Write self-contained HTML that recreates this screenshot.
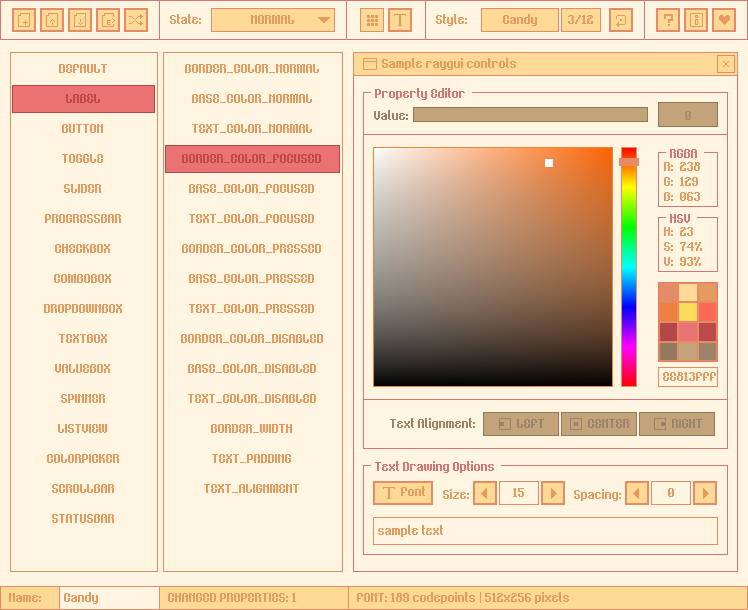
<!DOCTYPE html>
<html><head><meta charset="utf-8"><style>
html,body{margin:0;padding:0;}
body{width:748px;height:610px;background:#fff5e1;position:relative;overflow:hidden;}
.r{position:absolute;box-sizing:border-box;}
.t{position:absolute;white-space:pre;font:bold 13px/13px "Liberation Sans",sans-serif;}
</style></head><body>
<div class="r" style="left:0px;top:0px;width:748px;height:40px;background:#fff5e1;box-shadow:inset 0 0 0 1px #d77575;"></div>
<div class="r" style="left:159px;top:0px;width:1px;height:40px;background:#d77575;"></div>
<div class="r" style="left:346px;top:0px;width:1px;height:40px;background:#d77575;"></div>
<div class="r" style="left:425px;top:0px;width:1px;height:40px;background:#d77575;"></div>
<div class="r" style="left:644px;top:0px;width:1px;height:40px;background:#d77575;"></div>
<div class="r" style="left:12px;top:8px;width:24px;height:24px;background:#feda96;box-shadow:inset 0 0 0 2px #e58b68;"></div>
<div class="r" style="left:40px;top:8px;width:24px;height:24px;background:#feda96;box-shadow:inset 0 0 0 2px #e58b68;"></div>
<div class="r" style="left:68px;top:8px;width:24px;height:24px;background:#feda96;box-shadow:inset 0 0 0 2px #e58b68;"></div>
<div class="r" style="left:96px;top:8px;width:24px;height:24px;background:#feda96;box-shadow:inset 0 0 0 2px #e58b68;"></div>
<div class="r" style="left:124px;top:8px;width:24px;height:24px;background:#feda96;box-shadow:inset 0 0 0 2px #e58b68;"></div>
<svg class="r" style="left:16px;top:12px" width="16" height="16" viewBox="0 0 16 16" shape-rendering="crispEdges"><rect x="2" y="3" width="1" height="1" fill="#e59b5f"/><rect x="2" y="4" width="1" height="1" fill="#e59b5f"/><rect x="2" y="5" width="1" height="1" fill="#e59b5f"/><rect x="2" y="6" width="1" height="1" fill="#e59b5f"/><rect x="2" y="7" width="1" height="1" fill="#e59b5f"/><rect x="2" y="8" width="1" height="1" fill="#e59b5f"/><rect x="2" y="9" width="1" height="1" fill="#e59b5f"/><rect x="2" y="10" width="1" height="1" fill="#e59b5f"/><rect x="2" y="11" width="1" height="1" fill="#e59b5f"/><rect x="2" y="12" width="1" height="1" fill="#e59b5f"/><rect x="2" y="13" width="1" height="1" fill="#e59b5f"/><rect x="2" y="14" width="1" height="1" fill="#e59b5f"/><rect x="3" y="3" width="1" height="1" fill="#e59b5f"/><rect x="3" y="14" width="1" height="1" fill="#e59b5f"/><rect x="4" y="1" width="1" height="1" fill="#e59b5f"/><rect x="4" y="2" width="1" height="1" fill="#e59b5f"/><rect x="4" y="3" width="1" height="1" fill="#e59b5f"/><rect x="4" y="14" width="1" height="1" fill="#e59b5f"/><rect x="5" y="1" width="1" height="1" fill="#e59b5f"/><rect x="5" y="14" width="1" height="1" fill="#e59b5f"/><rect x="6" y="1" width="1" height="1" fill="#e59b5f"/><rect x="6" y="14" width="1" height="1" fill="#e59b5f"/><rect x="7" y="1" width="1" height="1" fill="#e59b5f"/><rect x="7" y="10" width="1" height="1" fill="#e59b5f"/><rect x="7" y="14" width="1" height="1" fill="#e59b5f"/><rect x="8" y="1" width="1" height="1" fill="#e59b5f"/><rect x="8" y="10" width="1" height="1" fill="#e59b5f"/><rect x="8" y="14" width="1" height="1" fill="#e59b5f"/><rect x="9" y="1" width="1" height="1" fill="#e59b5f"/><rect x="9" y="8" width="1" height="1" fill="#e59b5f"/><rect x="9" y="9" width="1" height="1" fill="#e59b5f"/><rect x="9" y="10" width="1" height="1" fill="#e59b5f"/><rect x="9" y="11" width="1" height="1" fill="#e59b5f"/><rect x="9" y="12" width="1" height="1" fill="#e59b5f"/><rect x="9" y="14" width="1" height="1" fill="#e59b5f"/><rect x="10" y="1" width="1" height="1" fill="#e59b5f"/><rect x="10" y="10" width="1" height="1" fill="#e59b5f"/><rect x="10" y="14" width="1" height="1" fill="#e59b5f"/><rect x="11" y="1" width="1" height="1" fill="#e59b5f"/><rect x="11" y="10" width="1" height="1" fill="#e59b5f"/><rect x="11" y="14" width="1" height="1" fill="#e59b5f"/><rect x="12" y="1" width="1" height="1" fill="#e59b5f"/><rect x="12" y="14" width="1" height="1" fill="#e59b5f"/><rect x="13" y="1" width="1" height="1" fill="#e59b5f"/><rect x="13" y="2" width="1" height="1" fill="#e59b5f"/><rect x="13" y="3" width="1" height="1" fill="#e59b5f"/><rect x="13" y="4" width="1" height="1" fill="#e59b5f"/><rect x="13" y="5" width="1" height="1" fill="#e59b5f"/><rect x="13" y="6" width="1" height="1" fill="#e59b5f"/><rect x="13" y="7" width="1" height="1" fill="#e59b5f"/><rect x="13" y="8" width="1" height="1" fill="#e59b5f"/><rect x="13" y="9" width="1" height="1" fill="#e59b5f"/><rect x="13" y="10" width="1" height="1" fill="#e59b5f"/><rect x="13" y="11" width="1" height="1" fill="#e59b5f"/><rect x="13" y="12" width="1" height="1" fill="#e59b5f"/><rect x="13" y="13" width="1" height="1" fill="#e59b5f"/><rect x="13" y="14" width="1" height="1" fill="#e59b5f"/></svg>
<svg class="r" style="left:44px;top:12px" width="16" height="16" viewBox="0 0 16 16" shape-rendering="crispEdges"><rect x="2" y="3" width="1" height="1" fill="#e59b5f"/><rect x="2" y="4" width="1" height="1" fill="#e59b5f"/><rect x="2" y="5" width="1" height="1" fill="#e59b5f"/><rect x="2" y="6" width="1" height="1" fill="#e59b5f"/><rect x="2" y="7" width="1" height="1" fill="#e59b5f"/><rect x="2" y="8" width="1" height="1" fill="#e59b5f"/><rect x="2" y="9" width="1" height="1" fill="#e59b5f"/><rect x="2" y="10" width="1" height="1" fill="#e59b5f"/><rect x="2" y="11" width="1" height="1" fill="#e59b5f"/><rect x="2" y="12" width="1" height="1" fill="#e59b5f"/><rect x="2" y="13" width="1" height="1" fill="#e59b5f"/><rect x="2" y="14" width="1" height="1" fill="#e59b5f"/><rect x="3" y="3" width="1" height="1" fill="#e59b5f"/><rect x="3" y="14" width="1" height="1" fill="#e59b5f"/><rect x="4" y="1" width="1" height="1" fill="#e59b5f"/><rect x="4" y="2" width="1" height="1" fill="#e59b5f"/><rect x="4" y="3" width="1" height="1" fill="#e59b5f"/><rect x="4" y="14" width="1" height="1" fill="#e59b5f"/><rect x="5" y="1" width="1" height="1" fill="#e59b5f"/><rect x="5" y="14" width="1" height="1" fill="#e59b5f"/><rect x="6" y="1" width="1" height="1" fill="#e59b5f"/><rect x="6" y="9" width="1" height="1" fill="#e59b5f"/><rect x="6" y="14" width="1" height="1" fill="#e59b5f"/><rect x="7" y="1" width="1" height="1" fill="#e59b5f"/><rect x="7" y="8" width="1" height="1" fill="#e59b5f"/><rect x="7" y="14" width="1" height="1" fill="#e59b5f"/><rect x="8" y="1" width="1" height="1" fill="#e59b5f"/><rect x="8" y="7" width="1" height="1" fill="#e59b5f"/><rect x="8" y="10" width="1" height="1" fill="#e59b5f"/><rect x="8" y="11" width="1" height="1" fill="#e59b5f"/><rect x="8" y="12" width="1" height="1" fill="#e59b5f"/><rect x="8" y="14" width="1" height="1" fill="#e59b5f"/><rect x="9" y="1" width="1" height="1" fill="#e59b5f"/><rect x="9" y="8" width="1" height="1" fill="#e59b5f"/><rect x="9" y="14" width="1" height="1" fill="#e59b5f"/><rect x="10" y="1" width="1" height="1" fill="#e59b5f"/><rect x="10" y="9" width="1" height="1" fill="#e59b5f"/><rect x="10" y="14" width="1" height="1" fill="#e59b5f"/><rect x="11" y="1" width="1" height="1" fill="#e59b5f"/><rect x="11" y="14" width="1" height="1" fill="#e59b5f"/><rect x="12" y="1" width="1" height="1" fill="#e59b5f"/><rect x="12" y="14" width="1" height="1" fill="#e59b5f"/><rect x="13" y="1" width="1" height="1" fill="#e59b5f"/><rect x="13" y="2" width="1" height="1" fill="#e59b5f"/><rect x="13" y="3" width="1" height="1" fill="#e59b5f"/><rect x="13" y="4" width="1" height="1" fill="#e59b5f"/><rect x="13" y="5" width="1" height="1" fill="#e59b5f"/><rect x="13" y="6" width="1" height="1" fill="#e59b5f"/><rect x="13" y="7" width="1" height="1" fill="#e59b5f"/><rect x="13" y="8" width="1" height="1" fill="#e59b5f"/><rect x="13" y="9" width="1" height="1" fill="#e59b5f"/><rect x="13" y="10" width="1" height="1" fill="#e59b5f"/><rect x="13" y="11" width="1" height="1" fill="#e59b5f"/><rect x="13" y="12" width="1" height="1" fill="#e59b5f"/><rect x="13" y="13" width="1" height="1" fill="#e59b5f"/><rect x="13" y="14" width="1" height="1" fill="#e59b5f"/></svg>
<svg class="r" style="left:72px;top:12px" width="16" height="16" viewBox="0 0 16 16" shape-rendering="crispEdges"><rect x="2" y="3" width="1" height="1" fill="#e59b5f"/><rect x="2" y="4" width="1" height="1" fill="#e59b5f"/><rect x="2" y="5" width="1" height="1" fill="#e59b5f"/><rect x="2" y="6" width="1" height="1" fill="#e59b5f"/><rect x="2" y="7" width="1" height="1" fill="#e59b5f"/><rect x="2" y="8" width="1" height="1" fill="#e59b5f"/><rect x="2" y="9" width="1" height="1" fill="#e59b5f"/><rect x="2" y="10" width="1" height="1" fill="#e59b5f"/><rect x="2" y="11" width="1" height="1" fill="#e59b5f"/><rect x="2" y="12" width="1" height="1" fill="#e59b5f"/><rect x="2" y="13" width="1" height="1" fill="#e59b5f"/><rect x="2" y="14" width="1" height="1" fill="#e59b5f"/><rect x="3" y="3" width="1" height="1" fill="#e59b5f"/><rect x="3" y="14" width="1" height="1" fill="#e59b5f"/><rect x="4" y="1" width="1" height="1" fill="#e59b5f"/><rect x="4" y="2" width="1" height="1" fill="#e59b5f"/><rect x="4" y="3" width="1" height="1" fill="#e59b5f"/><rect x="4" y="14" width="1" height="1" fill="#e59b5f"/><rect x="5" y="1" width="1" height="1" fill="#e59b5f"/><rect x="5" y="14" width="1" height="1" fill="#e59b5f"/><rect x="6" y="1" width="1" height="1" fill="#e59b5f"/><rect x="6" y="10" width="1" height="1" fill="#e59b5f"/><rect x="6" y="14" width="1" height="1" fill="#e59b5f"/><rect x="7" y="1" width="1" height="1" fill="#e59b5f"/><rect x="7" y="11" width="1" height="1" fill="#e59b5f"/><rect x="7" y="14" width="1" height="1" fill="#e59b5f"/><rect x="8" y="1" width="1" height="1" fill="#e59b5f"/><rect x="8" y="7" width="1" height="1" fill="#e59b5f"/><rect x="8" y="8" width="1" height="1" fill="#e59b5f"/><rect x="8" y="9" width="1" height="1" fill="#e59b5f"/><rect x="8" y="12" width="1" height="1" fill="#e59b5f"/><rect x="8" y="14" width="1" height="1" fill="#e59b5f"/><rect x="9" y="1" width="1" height="1" fill="#e59b5f"/><rect x="9" y="11" width="1" height="1" fill="#e59b5f"/><rect x="9" y="14" width="1" height="1" fill="#e59b5f"/><rect x="10" y="1" width="1" height="1" fill="#e59b5f"/><rect x="10" y="10" width="1" height="1" fill="#e59b5f"/><rect x="10" y="14" width="1" height="1" fill="#e59b5f"/><rect x="11" y="1" width="1" height="1" fill="#e59b5f"/><rect x="11" y="14" width="1" height="1" fill="#e59b5f"/><rect x="12" y="1" width="1" height="1" fill="#e59b5f"/><rect x="12" y="14" width="1" height="1" fill="#e59b5f"/><rect x="13" y="1" width="1" height="1" fill="#e59b5f"/><rect x="13" y="2" width="1" height="1" fill="#e59b5f"/><rect x="13" y="3" width="1" height="1" fill="#e59b5f"/><rect x="13" y="4" width="1" height="1" fill="#e59b5f"/><rect x="13" y="5" width="1" height="1" fill="#e59b5f"/><rect x="13" y="6" width="1" height="1" fill="#e59b5f"/><rect x="13" y="7" width="1" height="1" fill="#e59b5f"/><rect x="13" y="8" width="1" height="1" fill="#e59b5f"/><rect x="13" y="9" width="1" height="1" fill="#e59b5f"/><rect x="13" y="10" width="1" height="1" fill="#e59b5f"/><rect x="13" y="11" width="1" height="1" fill="#e59b5f"/><rect x="13" y="12" width="1" height="1" fill="#e59b5f"/><rect x="13" y="13" width="1" height="1" fill="#e59b5f"/><rect x="13" y="14" width="1" height="1" fill="#e59b5f"/></svg>
<svg class="r" style="left:100px;top:12px" width="16" height="16" viewBox="0 0 16 16" shape-rendering="crispEdges"><rect x="2" y="3" width="1" height="1" fill="#e59b5f"/><rect x="2" y="4" width="1" height="1" fill="#e59b5f"/><rect x="2" y="5" width="1" height="1" fill="#e59b5f"/><rect x="2" y="6" width="1" height="1" fill="#e59b5f"/><rect x="2" y="7" width="1" height="1" fill="#e59b5f"/><rect x="2" y="8" width="1" height="1" fill="#e59b5f"/><rect x="2" y="9" width="1" height="1" fill="#e59b5f"/><rect x="2" y="10" width="1" height="1" fill="#e59b5f"/><rect x="2" y="11" width="1" height="1" fill="#e59b5f"/><rect x="2" y="12" width="1" height="1" fill="#e59b5f"/><rect x="2" y="13" width="1" height="1" fill="#e59b5f"/><rect x="2" y="14" width="1" height="1" fill="#e59b5f"/><rect x="3" y="3" width="1" height="1" fill="#e59b5f"/><rect x="3" y="14" width="1" height="1" fill="#e59b5f"/><rect x="4" y="1" width="1" height="1" fill="#e59b5f"/><rect x="4" y="2" width="1" height="1" fill="#e59b5f"/><rect x="4" y="3" width="1" height="1" fill="#e59b5f"/><rect x="4" y="14" width="1" height="1" fill="#e59b5f"/><rect x="5" y="1" width="1" height="1" fill="#e59b5f"/><rect x="5" y="14" width="1" height="1" fill="#e59b5f"/><rect x="6" y="1" width="1" height="1" fill="#e59b5f"/><rect x="6" y="14" width="1" height="1" fill="#e59b5f"/><rect x="7" y="1" width="1" height="1" fill="#e59b5f"/><rect x="7" y="8" width="1" height="1" fill="#e59b5f"/><rect x="7" y="9" width="1" height="1" fill="#e59b5f"/><rect x="7" y="10" width="1" height="1" fill="#e59b5f"/><rect x="7" y="11" width="1" height="1" fill="#e59b5f"/><rect x="7" y="12" width="1" height="1" fill="#e59b5f"/><rect x="7" y="14" width="1" height="1" fill="#e59b5f"/><rect x="8" y="1" width="1" height="1" fill="#e59b5f"/><rect x="8" y="8" width="1" height="1" fill="#e59b5f"/><rect x="8" y="10" width="1" height="1" fill="#e59b5f"/><rect x="8" y="12" width="1" height="1" fill="#e59b5f"/><rect x="8" y="14" width="1" height="1" fill="#e59b5f"/><rect x="9" y="1" width="1" height="1" fill="#e59b5f"/><rect x="9" y="8" width="1" height="1" fill="#e59b5f"/><rect x="9" y="10" width="1" height="1" fill="#e59b5f"/><rect x="9" y="12" width="1" height="1" fill="#e59b5f"/><rect x="9" y="14" width="1" height="1" fill="#e59b5f"/><rect x="10" y="1" width="1" height="1" fill="#e59b5f"/><rect x="10" y="8" width="1" height="1" fill="#e59b5f"/><rect x="10" y="12" width="1" height="1" fill="#e59b5f"/><rect x="10" y="14" width="1" height="1" fill="#e59b5f"/><rect x="11" y="1" width="1" height="1" fill="#e59b5f"/><rect x="11" y="14" width="1" height="1" fill="#e59b5f"/><rect x="12" y="1" width="1" height="1" fill="#e59b5f"/><rect x="12" y="6" width="1" height="1" fill="#e59b5f"/><rect x="12" y="10" width="1" height="1" fill="#e59b5f"/><rect x="12" y="14" width="1" height="1" fill="#e59b5f"/><rect x="13" y="1" width="1" height="1" fill="#e59b5f"/><rect x="13" y="2" width="1" height="1" fill="#e59b5f"/><rect x="13" y="3" width="1" height="1" fill="#e59b5f"/><rect x="13" y="4" width="1" height="1" fill="#e59b5f"/><rect x="13" y="7" width="1" height="1" fill="#e59b5f"/><rect x="13" y="9" width="1" height="1" fill="#e59b5f"/><rect x="13" y="12" width="1" height="1" fill="#e59b5f"/><rect x="13" y="13" width="1" height="1" fill="#e59b5f"/><rect x="13" y="14" width="1" height="1" fill="#e59b5f"/><rect x="14" y="8" width="1" height="1" fill="#e59b5f"/></svg>
<svg class="r" style="left:128px;top:12px" width="16" height="16" viewBox="0 0 16 16" shape-rendering="crispEdges"><rect x="1" y="4" width="1" height="1" fill="#e59b5f"/><rect x="1" y="11" width="1" height="1" fill="#e59b5f"/><rect x="2" y="4" width="1" height="1" fill="#e59b5f"/><rect x="2" y="11" width="1" height="1" fill="#e59b5f"/><rect x="3" y="4" width="1" height="1" fill="#e59b5f"/><rect x="3" y="11" width="1" height="1" fill="#e59b5f"/><rect x="4" y="5" width="1" height="1" fill="#e59b5f"/><rect x="4" y="10" width="1" height="1" fill="#e59b5f"/><rect x="5" y="6" width="1" height="1" fill="#e59b5f"/><rect x="5" y="9" width="1" height="1" fill="#e59b5f"/><rect x="6" y="8" width="1" height="1" fill="#e59b5f"/><rect x="7" y="7" width="1" height="1" fill="#e59b5f"/><rect x="8" y="6" width="1" height="1" fill="#e59b5f"/><rect x="8" y="9" width="1" height="1" fill="#e59b5f"/><rect x="9" y="5" width="1" height="1" fill="#e59b5f"/><rect x="9" y="10" width="1" height="1" fill="#e59b5f"/><rect x="10" y="4" width="1" height="1" fill="#e59b5f"/><rect x="10" y="11" width="1" height="1" fill="#e59b5f"/><rect x="11" y="4" width="1" height="1" fill="#e59b5f"/><rect x="11" y="11" width="1" height="1" fill="#e59b5f"/><rect x="12" y="2" width="1" height="1" fill="#e59b5f"/><rect x="12" y="3" width="1" height="1" fill="#e59b5f"/><rect x="12" y="4" width="1" height="1" fill="#e59b5f"/><rect x="12" y="5" width="1" height="1" fill="#e59b5f"/><rect x="12" y="6" width="1" height="1" fill="#e59b5f"/><rect x="12" y="9" width="1" height="1" fill="#e59b5f"/><rect x="12" y="10" width="1" height="1" fill="#e59b5f"/><rect x="12" y="11" width="1" height="1" fill="#e59b5f"/><rect x="12" y="12" width="1" height="1" fill="#e59b5f"/><rect x="12" y="13" width="1" height="1" fill="#e59b5f"/><rect x="13" y="3" width="1" height="1" fill="#e59b5f"/><rect x="13" y="4" width="1" height="1" fill="#e59b5f"/><rect x="13" y="5" width="1" height="1" fill="#e59b5f"/><rect x="13" y="10" width="1" height="1" fill="#e59b5f"/><rect x="13" y="11" width="1" height="1" fill="#e59b5f"/><rect x="13" y="12" width="1" height="1" fill="#e59b5f"/><rect x="14" y="4" width="1" height="1" fill="#e59b5f"/><rect x="14" y="11" width="1" height="1" fill="#e59b5f"/></svg>
<div class="r" style="left:211px;top:8px;width:124px;height:24px;background:#feda96;box-shadow:inset 0 0 0 1px #e58b68;"></div>
<svg class="r" style="left:318px;top:17px" width="12" height="7" viewBox="0 0 12 7" shape-rendering="crispEdges"><polygon points="0,0 12,0 6,6.5" fill="#e59b5f"/></svg>
<div class="r" style="left:360px;top:8px;width:24px;height:24px;background:#feda96;box-shadow:inset 0 0 0 1px #e58b68;"></div>
<svg class="r" style="left:364px;top:12px" width="16" height="16" viewBox="0 0 16 16" shape-rendering="crispEdges"><rect x="3" y="3" width="1" height="1" fill="#e59b5f"/><rect x="3" y="4" width="1" height="1" fill="#e59b5f"/><rect x="3" y="5" width="1" height="1" fill="#e59b5f"/><rect x="3" y="7" width="1" height="1" fill="#e59b5f"/><rect x="3" y="8" width="1" height="1" fill="#e59b5f"/><rect x="3" y="9" width="1" height="1" fill="#e59b5f"/><rect x="3" y="11" width="1" height="1" fill="#e59b5f"/><rect x="3" y="12" width="1" height="1" fill="#e59b5f"/><rect x="3" y="13" width="1" height="1" fill="#e59b5f"/><rect x="4" y="3" width="1" height="1" fill="#e59b5f"/><rect x="4" y="4" width="1" height="1" fill="#e59b5f"/><rect x="4" y="5" width="1" height="1" fill="#e59b5f"/><rect x="4" y="7" width="1" height="1" fill="#e59b5f"/><rect x="4" y="8" width="1" height="1" fill="#e59b5f"/><rect x="4" y="9" width="1" height="1" fill="#e59b5f"/><rect x="4" y="11" width="1" height="1" fill="#e59b5f"/><rect x="4" y="12" width="1" height="1" fill="#e59b5f"/><rect x="4" y="13" width="1" height="1" fill="#e59b5f"/><rect x="5" y="3" width="1" height="1" fill="#e59b5f"/><rect x="5" y="4" width="1" height="1" fill="#e59b5f"/><rect x="5" y="5" width="1" height="1" fill="#e59b5f"/><rect x="5" y="7" width="1" height="1" fill="#e59b5f"/><rect x="5" y="8" width="1" height="1" fill="#e59b5f"/><rect x="5" y="9" width="1" height="1" fill="#e59b5f"/><rect x="5" y="11" width="1" height="1" fill="#e59b5f"/><rect x="5" y="12" width="1" height="1" fill="#e59b5f"/><rect x="5" y="13" width="1" height="1" fill="#e59b5f"/><rect x="7" y="3" width="1" height="1" fill="#e59b5f"/><rect x="7" y="4" width="1" height="1" fill="#e59b5f"/><rect x="7" y="5" width="1" height="1" fill="#e59b5f"/><rect x="7" y="7" width="1" height="1" fill="#e59b5f"/><rect x="7" y="8" width="1" height="1" fill="#e59b5f"/><rect x="7" y="9" width="1" height="1" fill="#e59b5f"/><rect x="7" y="11" width="1" height="1" fill="#e59b5f"/><rect x="7" y="12" width="1" height="1" fill="#e59b5f"/><rect x="7" y="13" width="1" height="1" fill="#e59b5f"/><rect x="8" y="3" width="1" height="1" fill="#e59b5f"/><rect x="8" y="4" width="1" height="1" fill="#e59b5f"/><rect x="8" y="5" width="1" height="1" fill="#e59b5f"/><rect x="8" y="7" width="1" height="1" fill="#e59b5f"/><rect x="8" y="8" width="1" height="1" fill="#e59b5f"/><rect x="8" y="9" width="1" height="1" fill="#e59b5f"/><rect x="8" y="11" width="1" height="1" fill="#e59b5f"/><rect x="8" y="12" width="1" height="1" fill="#e59b5f"/><rect x="8" y="13" width="1" height="1" fill="#e59b5f"/><rect x="9" y="3" width="1" height="1" fill="#e59b5f"/><rect x="9" y="4" width="1" height="1" fill="#e59b5f"/><rect x="9" y="5" width="1" height="1" fill="#e59b5f"/><rect x="9" y="7" width="1" height="1" fill="#e59b5f"/><rect x="9" y="8" width="1" height="1" fill="#e59b5f"/><rect x="9" y="9" width="1" height="1" fill="#e59b5f"/><rect x="9" y="11" width="1" height="1" fill="#e59b5f"/><rect x="9" y="12" width="1" height="1" fill="#e59b5f"/><rect x="9" y="13" width="1" height="1" fill="#e59b5f"/><rect x="11" y="3" width="1" height="1" fill="#e59b5f"/><rect x="11" y="4" width="1" height="1" fill="#e59b5f"/><rect x="11" y="5" width="1" height="1" fill="#e59b5f"/><rect x="11" y="7" width="1" height="1" fill="#e59b5f"/><rect x="11" y="8" width="1" height="1" fill="#e59b5f"/><rect x="11" y="9" width="1" height="1" fill="#e59b5f"/><rect x="11" y="11" width="1" height="1" fill="#e59b5f"/><rect x="11" y="12" width="1" height="1" fill="#e59b5f"/><rect x="11" y="13" width="1" height="1" fill="#e59b5f"/><rect x="12" y="3" width="1" height="1" fill="#e59b5f"/><rect x="12" y="4" width="1" height="1" fill="#e59b5f"/><rect x="12" y="5" width="1" height="1" fill="#e59b5f"/><rect x="12" y="7" width="1" height="1" fill="#e59b5f"/><rect x="12" y="8" width="1" height="1" fill="#e59b5f"/><rect x="12" y="9" width="1" height="1" fill="#e59b5f"/><rect x="12" y="11" width="1" height="1" fill="#e59b5f"/><rect x="12" y="12" width="1" height="1" fill="#e59b5f"/><rect x="12" y="13" width="1" height="1" fill="#e59b5f"/><rect x="13" y="3" width="1" height="1" fill="#e59b5f"/><rect x="13" y="4" width="1" height="1" fill="#e59b5f"/><rect x="13" y="5" width="1" height="1" fill="#e59b5f"/><rect x="13" y="7" width="1" height="1" fill="#e59b5f"/><rect x="13" y="8" width="1" height="1" fill="#e59b5f"/><rect x="13" y="9" width="1" height="1" fill="#e59b5f"/><rect x="13" y="11" width="1" height="1" fill="#e59b5f"/><rect x="13" y="12" width="1" height="1" fill="#e59b5f"/><rect x="13" y="13" width="1" height="1" fill="#e59b5f"/></svg>
<div class="r" style="left:388px;top:8px;width:24px;height:24px;background:#feda96;box-shadow:inset 0 0 0 2px #e58b68;"></div>
<svg class="r" style="left:392px;top:12px" width="16" height="16" viewBox="0 0 16 16" shape-rendering="crispEdges"><rect x="2" y="2" width="1" height="1" fill="#e59b5f"/><rect x="2" y="3" width="1" height="1" fill="#e59b5f"/><rect x="3" y="2" width="1" height="1" fill="#e59b5f"/><rect x="4" y="2" width="1" height="1" fill="#e59b5f"/><rect x="5" y="2" width="1" height="1" fill="#e59b5f"/><rect x="6" y="2" width="1" height="1" fill="#e59b5f"/><rect x="6" y="13" width="1" height="1" fill="#e59b5f"/><rect x="7" y="2" width="1" height="1" fill="#e59b5f"/><rect x="7" y="3" width="1" height="1" fill="#e59b5f"/><rect x="7" y="4" width="1" height="1" fill="#e59b5f"/><rect x="7" y="5" width="1" height="1" fill="#e59b5f"/><rect x="7" y="6" width="1" height="1" fill="#e59b5f"/><rect x="7" y="7" width="1" height="1" fill="#e59b5f"/><rect x="7" y="8" width="1" height="1" fill="#e59b5f"/><rect x="7" y="9" width="1" height="1" fill="#e59b5f"/><rect x="7" y="10" width="1" height="1" fill="#e59b5f"/><rect x="7" y="11" width="1" height="1" fill="#e59b5f"/><rect x="7" y="12" width="1" height="1" fill="#e59b5f"/><rect x="7" y="13" width="1" height="1" fill="#e59b5f"/><rect x="8" y="2" width="1" height="1" fill="#e59b5f"/><rect x="8" y="3" width="1" height="1" fill="#e59b5f"/><rect x="8" y="4" width="1" height="1" fill="#e59b5f"/><rect x="8" y="5" width="1" height="1" fill="#e59b5f"/><rect x="8" y="6" width="1" height="1" fill="#e59b5f"/><rect x="8" y="7" width="1" height="1" fill="#e59b5f"/><rect x="8" y="8" width="1" height="1" fill="#e59b5f"/><rect x="8" y="9" width="1" height="1" fill="#e59b5f"/><rect x="8" y="10" width="1" height="1" fill="#e59b5f"/><rect x="8" y="11" width="1" height="1" fill="#e59b5f"/><rect x="8" y="12" width="1" height="1" fill="#e59b5f"/><rect x="8" y="13" width="1" height="1" fill="#e59b5f"/><rect x="9" y="2" width="1" height="1" fill="#e59b5f"/><rect x="9" y="13" width="1" height="1" fill="#e59b5f"/><rect x="10" y="2" width="1" height="1" fill="#e59b5f"/><rect x="11" y="2" width="1" height="1" fill="#e59b5f"/><rect x="12" y="2" width="1" height="1" fill="#e59b5f"/><rect x="13" y="2" width="1" height="1" fill="#e59b5f"/><rect x="13" y="3" width="1" height="1" fill="#e59b5f"/></svg>
<div class="r" style="left:481px;top:8px;width:78px;height:24px;background:#feda96;box-shadow:inset 0 0 0 1px #e58b68;"></div>
<div class="r" style="left:561px;top:8px;width:40px;height:24px;background:#feda96;box-shadow:inset 0 0 0 1px #e58b68;"></div>
<div class="r" style="left:609px;top:8px;width:24px;height:24px;background:#feda96;box-shadow:inset 0 0 0 2px #e58b68;"></div>
<svg class="r" style="left:613px;top:12px" width="16" height="16" viewBox="0 0 16 16" shape-rendering="crispEdges"><rect x="3" y="4" width="1" height="1" fill="#e59b5f"/><rect x="3" y="5" width="1" height="1" fill="#e59b5f"/><rect x="3" y="6" width="1" height="1" fill="#e59b5f"/><rect x="3" y="12" width="1" height="1" fill="#e59b5f"/><rect x="4" y="3" width="1" height="1" fill="#e59b5f"/><rect x="4" y="11" width="1" height="1" fill="#e59b5f"/><rect x="4" y="12" width="1" height="1" fill="#e59b5f"/><rect x="4" y="13" width="1" height="1" fill="#e59b5f"/><rect x="5" y="3" width="1" height="1" fill="#e59b5f"/><rect x="5" y="10" width="1" height="1" fill="#e59b5f"/><rect x="5" y="11" width="1" height="1" fill="#e59b5f"/><rect x="5" y="12" width="1" height="1" fill="#e59b5f"/><rect x="5" y="13" width="1" height="1" fill="#e59b5f"/><rect x="5" y="14" width="1" height="1" fill="#e59b5f"/><rect x="6" y="3" width="1" height="1" fill="#e59b5f"/><rect x="6" y="12" width="1" height="1" fill="#e59b5f"/><rect x="7" y="3" width="1" height="1" fill="#e59b5f"/><rect x="7" y="7" width="1" height="1" fill="#e59b5f"/><rect x="7" y="8" width="1" height="1" fill="#e59b5f"/><rect x="7" y="12" width="1" height="1" fill="#e59b5f"/><rect x="8" y="3" width="1" height="1" fill="#e59b5f"/><rect x="8" y="7" width="1" height="1" fill="#e59b5f"/><rect x="8" y="8" width="1" height="1" fill="#e59b5f"/><rect x="8" y="12" width="1" height="1" fill="#e59b5f"/><rect x="9" y="3" width="1" height="1" fill="#e59b5f"/><rect x="9" y="12" width="1" height="1" fill="#e59b5f"/><rect x="10" y="3" width="1" height="1" fill="#e59b5f"/><rect x="10" y="12" width="1" height="1" fill="#e59b5f"/><rect x="11" y="3" width="1" height="1" fill="#e59b5f"/><rect x="11" y="12" width="1" height="1" fill="#e59b5f"/><rect x="12" y="4" width="1" height="1" fill="#e59b5f"/><rect x="12" y="5" width="1" height="1" fill="#e59b5f"/><rect x="12" y="6" width="1" height="1" fill="#e59b5f"/><rect x="12" y="7" width="1" height="1" fill="#e59b5f"/><rect x="12" y="8" width="1" height="1" fill="#e59b5f"/><rect x="12" y="9" width="1" height="1" fill="#e59b5f"/><rect x="12" y="10" width="1" height="1" fill="#e59b5f"/><rect x="12" y="11" width="1" height="1" fill="#e59b5f"/></svg>
<div class="r" style="left:656px;top:8px;width:24px;height:24px;background:#feda96;box-shadow:inset 0 0 0 2px #e58b68;"></div>
<div class="r" style="left:684px;top:8px;width:24px;height:24px;background:#feda96;box-shadow:inset 0 0 0 2px #e58b68;"></div>
<div class="r" style="left:712px;top:8px;width:24px;height:24px;background:#feda96;box-shadow:inset 0 0 0 2px #e58b68;"></div>
<svg class="r" style="left:660px;top:12px" width="16" height="16" viewBox="0 0 16 16" shape-rendering="crispEdges"><rect x="4" y="2" width="1" height="1" fill="#e59b5f"/><rect x="4" y="3" width="1" height="1" fill="#e59b5f"/><rect x="4" y="4" width="1" height="1" fill="#e59b5f"/><rect x="4" y="5" width="1" height="1" fill="#e59b5f"/><rect x="4" y="6" width="1" height="1" fill="#e59b5f"/><rect x="5" y="2" width="1" height="1" fill="#e59b5f"/><rect x="5" y="3" width="1" height="1" fill="#e59b5f"/><rect x="5" y="4" width="1" height="1" fill="#e59b5f"/><rect x="5" y="5" width="1" height="1" fill="#e59b5f"/><rect x="5" y="6" width="1" height="1" fill="#e59b5f"/><rect x="6" y="2" width="1" height="1" fill="#e59b5f"/><rect x="6" y="3" width="1" height="1" fill="#e59b5f"/><rect x="7" y="2" width="1" height="1" fill="#e59b5f"/><rect x="7" y="3" width="1" height="1" fill="#e59b5f"/><rect x="8" y="2" width="1" height="1" fill="#e59b5f"/><rect x="8" y="3" width="1" height="1" fill="#e59b5f"/><rect x="8" y="7" width="1" height="1" fill="#e59b5f"/><rect x="8" y="8" width="1" height="1" fill="#e59b5f"/><rect x="8" y="9" width="1" height="1" fill="#e59b5f"/><rect x="8" y="10" width="1" height="1" fill="#e59b5f"/><rect x="8" y="12" width="1" height="1" fill="#e59b5f"/><rect x="8" y="13" width="1" height="1" fill="#e59b5f"/><rect x="9" y="2" width="1" height="1" fill="#e59b5f"/><rect x="9" y="3" width="1" height="1" fill="#e59b5f"/><rect x="9" y="7" width="1" height="1" fill="#e59b5f"/><rect x="9" y="8" width="1" height="1" fill="#e59b5f"/><rect x="9" y="9" width="1" height="1" fill="#e59b5f"/><rect x="9" y="10" width="1" height="1" fill="#e59b5f"/><rect x="9" y="12" width="1" height="1" fill="#e59b5f"/><rect x="9" y="13" width="1" height="1" fill="#e59b5f"/><rect x="10" y="2" width="1" height="1" fill="#e59b5f"/><rect x="10" y="3" width="1" height="1" fill="#e59b5f"/><rect x="10" y="7" width="1" height="1" fill="#e59b5f"/><rect x="10" y="8" width="1" height="1" fill="#e59b5f"/><rect x="11" y="2" width="1" height="1" fill="#e59b5f"/><rect x="11" y="3" width="1" height="1" fill="#e59b5f"/><rect x="11" y="4" width="1" height="1" fill="#e59b5f"/><rect x="11" y="5" width="1" height="1" fill="#e59b5f"/><rect x="11" y="6" width="1" height="1" fill="#e59b5f"/><rect x="11" y="7" width="1" height="1" fill="#e59b5f"/><rect x="11" y="8" width="1" height="1" fill="#e59b5f"/><rect x="12" y="2" width="1" height="1" fill="#e59b5f"/><rect x="12" y="3" width="1" height="1" fill="#e59b5f"/><rect x="12" y="4" width="1" height="1" fill="#e59b5f"/><rect x="12" y="5" width="1" height="1" fill="#e59b5f"/><rect x="12" y="6" width="1" height="1" fill="#e59b5f"/><rect x="12" y="7" width="1" height="1" fill="#e59b5f"/><rect x="12" y="8" width="1" height="1" fill="#e59b5f"/></svg>
<svg class="r" style="left:688px;top:12px" width="16" height="16" viewBox="0 0 16 16" shape-rendering="crispEdges"><rect x="2" y="1" width="1" height="1" fill="#e59b5f"/><rect x="2" y="2" width="1" height="1" fill="#e59b5f"/><rect x="2" y="3" width="1" height="1" fill="#e59b5f"/><rect x="2" y="4" width="1" height="1" fill="#e59b5f"/><rect x="2" y="5" width="1" height="1" fill="#e59b5f"/><rect x="2" y="6" width="1" height="1" fill="#e59b5f"/><rect x="2" y="7" width="1" height="1" fill="#e59b5f"/><rect x="2" y="8" width="1" height="1" fill="#e59b5f"/><rect x="2" y="9" width="1" height="1" fill="#e59b5f"/><rect x="2" y="10" width="1" height="1" fill="#e59b5f"/><rect x="2" y="11" width="1" height="1" fill="#e59b5f"/><rect x="2" y="12" width="1" height="1" fill="#e59b5f"/><rect x="2" y="13" width="1" height="1" fill="#e59b5f"/><rect x="2" y="14" width="1" height="1" fill="#e59b5f"/><rect x="3" y="1" width="1" height="1" fill="#e59b5f"/><rect x="3" y="14" width="1" height="1" fill="#e59b5f"/><rect x="4" y="1" width="1" height="1" fill="#e59b5f"/><rect x="4" y="14" width="1" height="1" fill="#e59b5f"/><rect x="5" y="1" width="1" height="1" fill="#e59b5f"/><rect x="5" y="14" width="1" height="1" fill="#e59b5f"/><rect x="6" y="1" width="1" height="1" fill="#e59b5f"/><rect x="6" y="14" width="1" height="1" fill="#e59b5f"/><rect x="7" y="1" width="1" height="1" fill="#e59b5f"/><rect x="7" y="3" width="1" height="1" fill="#e59b5f"/><rect x="7" y="4" width="1" height="1" fill="#e59b5f"/><rect x="7" y="5" width="1" height="1" fill="#e59b5f"/><rect x="7" y="7" width="1" height="1" fill="#e59b5f"/><rect x="7" y="8" width="1" height="1" fill="#e59b5f"/><rect x="7" y="9" width="1" height="1" fill="#e59b5f"/><rect x="7" y="10" width="1" height="1" fill="#e59b5f"/><rect x="7" y="11" width="1" height="1" fill="#e59b5f"/><rect x="7" y="12" width="1" height="1" fill="#e59b5f"/><rect x="7" y="14" width="1" height="1" fill="#e59b5f"/><rect x="8" y="1" width="1" height="1" fill="#e59b5f"/><rect x="8" y="3" width="1" height="1" fill="#e59b5f"/><rect x="8" y="5" width="1" height="1" fill="#e59b5f"/><rect x="8" y="7" width="1" height="1" fill="#e59b5f"/><rect x="8" y="12" width="1" height="1" fill="#e59b5f"/><rect x="8" y="14" width="1" height="1" fill="#e59b5f"/><rect x="9" y="1" width="1" height="1" fill="#e59b5f"/><rect x="9" y="3" width="1" height="1" fill="#e59b5f"/><rect x="9" y="4" width="1" height="1" fill="#e59b5f"/><rect x="9" y="5" width="1" height="1" fill="#e59b5f"/><rect x="9" y="7" width="1" height="1" fill="#e59b5f"/><rect x="9" y="8" width="1" height="1" fill="#e59b5f"/><rect x="9" y="9" width="1" height="1" fill="#e59b5f"/><rect x="9" y="10" width="1" height="1" fill="#e59b5f"/><rect x="9" y="11" width="1" height="1" fill="#e59b5f"/><rect x="9" y="12" width="1" height="1" fill="#e59b5f"/><rect x="9" y="14" width="1" height="1" fill="#e59b5f"/><rect x="10" y="1" width="1" height="1" fill="#e59b5f"/><rect x="10" y="14" width="1" height="1" fill="#e59b5f"/><rect x="11" y="1" width="1" height="1" fill="#e59b5f"/><rect x="11" y="14" width="1" height="1" fill="#e59b5f"/><rect x="12" y="1" width="1" height="1" fill="#e59b5f"/><rect x="12" y="14" width="1" height="1" fill="#e59b5f"/><rect x="13" y="1" width="1" height="1" fill="#e59b5f"/><rect x="13" y="14" width="1" height="1" fill="#e59b5f"/><rect x="14" y="1" width="1" height="1" fill="#e59b5f"/><rect x="14" y="2" width="1" height="1" fill="#e59b5f"/><rect x="14" y="3" width="1" height="1" fill="#e59b5f"/><rect x="14" y="4" width="1" height="1" fill="#e59b5f"/><rect x="14" y="5" width="1" height="1" fill="#e59b5f"/><rect x="14" y="6" width="1" height="1" fill="#e59b5f"/><rect x="14" y="7" width="1" height="1" fill="#e59b5f"/><rect x="14" y="8" width="1" height="1" fill="#e59b5f"/><rect x="14" y="9" width="1" height="1" fill="#e59b5f"/><rect x="14" y="10" width="1" height="1" fill="#e59b5f"/><rect x="14" y="11" width="1" height="1" fill="#e59b5f"/><rect x="14" y="12" width="1" height="1" fill="#e59b5f"/><rect x="14" y="13" width="1" height="1" fill="#e59b5f"/><rect x="14" y="14" width="1" height="1" fill="#e59b5f"/></svg>
<svg class="r" style="left:716px;top:12px" width="16" height="16" viewBox="0 0 16 16" shape-rendering="crispEdges"><rect x="3" y="4" width="1" height="1" fill="#e59b5f"/><rect x="3" y="5" width="1" height="1" fill="#e59b5f"/><rect x="3" y="6" width="1" height="1" fill="#e59b5f"/><rect x="3" y="7" width="1" height="1" fill="#e59b5f"/><rect x="4" y="3" width="1" height="1" fill="#e59b5f"/><rect x="4" y="4" width="1" height="1" fill="#e59b5f"/><rect x="4" y="5" width="1" height="1" fill="#e59b5f"/><rect x="4" y="6" width="1" height="1" fill="#e59b5f"/><rect x="4" y="7" width="1" height="1" fill="#e59b5f"/><rect x="4" y="8" width="1" height="1" fill="#e59b5f"/><rect x="5" y="3" width="1" height="1" fill="#e59b5f"/><rect x="5" y="4" width="1" height="1" fill="#e59b5f"/><rect x="5" y="5" width="1" height="1" fill="#e59b5f"/><rect x="5" y="6" width="1" height="1" fill="#e59b5f"/><rect x="5" y="7" width="1" height="1" fill="#e59b5f"/><rect x="5" y="8" width="1" height="1" fill="#e59b5f"/><rect x="5" y="9" width="1" height="1" fill="#e59b5f"/><rect x="6" y="3" width="1" height="1" fill="#e59b5f"/><rect x="6" y="4" width="1" height="1" fill="#e59b5f"/><rect x="6" y="5" width="1" height="1" fill="#e59b5f"/><rect x="6" y="6" width="1" height="1" fill="#e59b5f"/><rect x="6" y="7" width="1" height="1" fill="#e59b5f"/><rect x="6" y="8" width="1" height="1" fill="#e59b5f"/><rect x="6" y="9" width="1" height="1" fill="#e59b5f"/><rect x="6" y="10" width="1" height="1" fill="#e59b5f"/><rect x="7" y="4" width="1" height="1" fill="#e59b5f"/><rect x="7" y="5" width="1" height="1" fill="#e59b5f"/><rect x="7" y="6" width="1" height="1" fill="#e59b5f"/><rect x="7" y="7" width="1" height="1" fill="#e59b5f"/><rect x="7" y="8" width="1" height="1" fill="#e59b5f"/><rect x="7" y="9" width="1" height="1" fill="#e59b5f"/><rect x="7" y="10" width="1" height="1" fill="#e59b5f"/><rect x="7" y="11" width="1" height="1" fill="#e59b5f"/><rect x="8" y="5" width="1" height="1" fill="#e59b5f"/><rect x="8" y="6" width="1" height="1" fill="#e59b5f"/><rect x="8" y="7" width="1" height="1" fill="#e59b5f"/><rect x="8" y="8" width="1" height="1" fill="#e59b5f"/><rect x="8" y="9" width="1" height="1" fill="#e59b5f"/><rect x="8" y="10" width="1" height="1" fill="#e59b5f"/><rect x="8" y="11" width="1" height="1" fill="#e59b5f"/><rect x="8" y="12" width="1" height="1" fill="#e59b5f"/><rect x="9" y="4" width="1" height="1" fill="#e59b5f"/><rect x="9" y="5" width="1" height="1" fill="#e59b5f"/><rect x="9" y="6" width="1" height="1" fill="#e59b5f"/><rect x="9" y="7" width="1" height="1" fill="#e59b5f"/><rect x="9" y="8" width="1" height="1" fill="#e59b5f"/><rect x="9" y="9" width="1" height="1" fill="#e59b5f"/><rect x="9" y="10" width="1" height="1" fill="#e59b5f"/><rect x="9" y="11" width="1" height="1" fill="#e59b5f"/><rect x="10" y="3" width="1" height="1" fill="#e59b5f"/><rect x="10" y="4" width="1" height="1" fill="#e59b5f"/><rect x="10" y="5" width="1" height="1" fill="#e59b5f"/><rect x="10" y="6" width="1" height="1" fill="#e59b5f"/><rect x="10" y="7" width="1" height="1" fill="#e59b5f"/><rect x="10" y="8" width="1" height="1" fill="#e59b5f"/><rect x="10" y="9" width="1" height="1" fill="#e59b5f"/><rect x="10" y="10" width="1" height="1" fill="#e59b5f"/><rect x="11" y="3" width="1" height="1" fill="#e59b5f"/><rect x="11" y="4" width="1" height="1" fill="#e59b5f"/><rect x="11" y="5" width="1" height="1" fill="#e59b5f"/><rect x="11" y="6" width="1" height="1" fill="#e59b5f"/><rect x="11" y="7" width="1" height="1" fill="#e59b5f"/><rect x="11" y="8" width="1" height="1" fill="#e59b5f"/><rect x="11" y="9" width="1" height="1" fill="#e59b5f"/><rect x="12" y="3" width="1" height="1" fill="#e59b5f"/><rect x="12" y="4" width="1" height="1" fill="#e59b5f"/><rect x="12" y="5" width="1" height="1" fill="#e59b5f"/><rect x="12" y="6" width="1" height="1" fill="#e59b5f"/><rect x="12" y="7" width="1" height="1" fill="#e59b5f"/><rect x="12" y="8" width="1" height="1" fill="#e59b5f"/><rect x="13" y="4" width="1" height="1" fill="#e59b5f"/><rect x="13" y="5" width="1" height="1" fill="#e59b5f"/><rect x="13" y="6" width="1" height="1" fill="#e59b5f"/><rect x="13" y="7" width="1" height="1" fill="#e59b5f"/></svg>
<div class="r" style="left:10px;top:52px;width:148px;height:520px;background:#fff5e1;box-shadow:inset 0 0 0 1px #e58b68;"></div>
<div class="r" style="left:12px;top:85px;width:143px;height:28px;background:#eb7272;box-shadow:inset 0 0 0 1px #b34848;"></div>
<div class="r" style="left:163px;top:52px;width:180px;height:520px;background:#fff5e1;box-shadow:inset 0 0 0 1px #e58b68;"></div>
<div class="r" style="left:165px;top:145px;width:175px;height:28px;background:#eb7272;box-shadow:inset 0 0 0 1px #b34848;"></div>
<div class="r" style="left:353px;top:52px;width:385px;height:520px;background:#fff5e1;box-shadow:inset 0 0 0 1px #d77575;"></div>
<div class="r" style="left:353px;top:52px;width:385px;height:24px;background:#feda96;box-shadow:inset 0 0 0 1px #e58b68;"></div>
<svg class="r" style="left:363px;top:58px" width="14" height="12" viewBox="0 0 14 12" shape-rendering="crispEdges"><rect x="0" y="0" width="14" height="1" fill="#e59b5f"/><rect x="0" y="0" width="1" height="12" fill="#e59b5f"/><rect x="13" y="0" width="1" height="12" fill="#e59b5f"/><rect x="0" y="11" width="14" height="1" fill="#e59b5f"/><rect x="0" y="3" width="14" height="1" fill="#e59b5f"/></svg>
<div class="r" style="left:717px;top:55px;width:18px;height:18px;background:#feda96;box-shadow:inset 0 0 0 1px #e58b68;"></div>
<svg class="r" style="left:717px;top:55px" width="18" height="18" viewBox="0 0 18 18" shape-rendering="crispEdges"><rect x="6" y="6" width="1" height="1" fill="#e59b5f"/><rect x="6" y="11" width="1" height="1" fill="#e59b5f"/><rect x="7" y="7" width="1" height="1" fill="#e59b5f"/><rect x="7" y="10" width="1" height="1" fill="#e59b5f"/><rect x="8" y="8" width="1" height="1" fill="#e59b5f"/><rect x="8" y="9" width="1" height="1" fill="#e59b5f"/><rect x="9" y="8" width="1" height="1" fill="#e59b5f"/><rect x="9" y="9" width="1" height="1" fill="#e59b5f"/><rect x="10" y="7" width="1" height="1" fill="#e59b5f"/><rect x="10" y="10" width="1" height="1" fill="#e59b5f"/><rect x="11" y="6" width="1" height="1" fill="#e59b5f"/><rect x="11" y="11" width="1" height="1" fill="#e59b5f"/></svg>
<div class="r" style="left:363px;top:92px;width:1px;height:357px;background:#d77575;"></div>
<div class="r" style="left:727px;top:92px;width:1px;height:357px;background:#d77575;"></div>
<div class="r" style="left:363px;top:448px;width:365px;height:1px;background:#d77575;"></div>
<div class="r" style="left:363px;top:92px;width:8px;height:1px;background:#d77575;"></div>
<div class="r" style="left:472px;top:92px;width:256px;height:1px;background:#d77575;"></div>
<div class="r" style="left:413px;top:107px;width:235px;height:15px;background:#c2a37a;box-shadow:inset 0 0 0 1px #94795d;"></div>
<div class="r" style="left:658px;top:102px;width:60px;height:25px;background:#c2a37a;box-shadow:inset 0 0 0 1px #94795d;"></div>
<div class="r" style="left:363px;top:134px;width:365px;height:1px;background:#d77575;"></div>
<div class="r" style="left:373px;top:147px;width:240px;height:240px;background:linear-gradient(to bottom,rgba(0.0,0.0,0.0,0.0000) 0.00%,rgba(127.5,122.5,112.5,0.0488) 2.50%,rgba(127.3,122.3,112.4,0.0951) 5.00%,rgba(127.1,122.1,112.2,0.1392) 7.50%,rgba(126.8,121.8,111.9,0.1810) 10.00%,rgba(126.4,121.4,111.5,0.2207) 12.50%,rgba(125.8,120.9,111.0,0.2584) 15.00%,rgba(125.2,120.3,110.4,0.2941) 17.50%,rgba(124.4,119.5,109.8,0.3280) 20.00%,rgba(123.5,118.6,108.9,0.3601) 22.50%,rgba(122.4,117.6,108.0,0.3906) 25.00%,rgba(121.2,116.4,106.9,0.4195) 27.50%,rgba(119.8,115.1,105.7,0.4470) 30.00%,rgba(118.2,113.6,104.3,0.4731) 32.50%,rgba(116.5,112.0,102.8,0.4979) 35.00%,rgba(114.6,110.1,101.1,0.5215) 37.50%,rgba(112.5,108.1,99.3,0.5440) 40.00%,rgba(110.2,105.9,97.2,0.5655) 42.50%,rgba(107.7,103.5,95.0,0.5861) 45.00%,rgba(104.9,100.8,92.6,0.6059) 47.50%,rgba(102.0,98.0,90.0,0.6250) 50.00%,rgba(98.8,95.0,87.2,0.6435) 52.50%,rgba(95.4,91.7,84.2,0.6614) 55.00%,rgba(91.8,88.2,81.0,0.6789) 57.50%,rgba(87.9,84.5,77.6,0.6960) 60.00%,rgba(83.8,80.5,74.0,0.7129) 62.50%,rgba(79.5,76.4,70.2,0.7296) 65.00%,rgba(75.0,72.0,66.1,0.7463) 67.50%,rgba(70.2,67.4,61.9,0.7630) 70.00%,rgba(65.2,62.6,57.5,0.7798) 72.50%,rgba(60.0,57.6,52.9,0.7969) 75.00%,rgba(54.6,52.5,48.2,0.8142) 77.50%,rgba(49.0,47.1,43.3,0.8320) 80.00%,rgba(43.3,41.6,38.2,0.8503) 82.50%,rgba(37.4,35.9,33.0,0.8691) 85.00%,rgba(31.4,30.2,27.7,0.8887) 87.50%,rgba(25.2,24.3,22.3,0.9090) 90.00%,rgba(19.0,18.3,16.8,0.9302) 92.50%,rgba(12.7,12.2,11.2,0.9524) 95.00%,rgba(6.4,6.1,5.6,0.9756) 97.50%,rgba(0.0,0.0,0.0,1.0000) 100.00%), linear-gradient(to right, #fff, #ff6200);"></div>
<div class="r" style="left:373px;top:147px;width:240px;height:240px;box-shadow:inset 0 0 0 1px #ee813f"></div>
<div class="r" style="left:545px;top:159px;width:8px;height:8px;background:#ffffff;"></div>
<div class="r" style="left:621px;top:147px;width:16px;height:240px;background:linear-gradient(to bottom,#f00 0%,#ff0 16.67%,#0f0 33.33%,#0ff 50%,#00f 66.67%,#f0f 83.33%,#f00 100%);box-shadow:inset 0 0 0 1px #e58b68"></div>
<div class="r" style="left:619px;top:158px;width:20px;height:8px;background:#e58b68;"></div>
<div class="r" style="left:658px;top:152px;width:1px;height:55px;background:#d77575;"></div>
<div class="r" style="left:717px;top:152px;width:1px;height:55px;background:#d77575;"></div>
<div class="r" style="left:658px;top:206px;width:60px;height:1px;background:#d77575;"></div>
<div class="r" style="left:658px;top:152px;width:8px;height:1px;background:#d77575;"></div>
<div class="r" style="left:704px;top:152px;width:14px;height:1px;background:#d77575;"></div>
<div class="r" style="left:658px;top:217px;width:1px;height:55px;background:#d77575;"></div>
<div class="r" style="left:717px;top:217px;width:1px;height:55px;background:#d77575;"></div>
<div class="r" style="left:658px;top:271px;width:60px;height:1px;background:#d77575;"></div>
<div class="r" style="left:658px;top:217px;width:8px;height:1px;background:#d77575;"></div>
<div class="r" style="left:697px;top:217px;width:21px;height:1px;background:#d77575;"></div>
<div class="r" style="left:658px;top:282px;width:60px;height:80px;background:#e58b68;box-shadow:inset 0 0 0 1px #e07e60;"></div>
<div class="r" style="left:660px;top:284px;width:17px;height:17px;background:#e58b68;"></div>
<div class="r" style="left:679px;top:284px;width:18px;height:17px;background:#feda96;"></div>
<div class="r" style="left:699px;top:284px;width:17px;height:17px;background:#e59b5f;"></div>
<div class="r" style="left:660px;top:303px;width:17px;height:18px;background:#ee813f;"></div>
<div class="r" style="left:679px;top:303px;width:18px;height:18px;background:#fcd85b;"></div>
<div class="r" style="left:699px;top:303px;width:17px;height:18px;background:#fc6955;"></div>
<div class="r" style="left:660px;top:323px;width:17px;height:18px;background:#b34848;"></div>
<div class="r" style="left:679px;top:323px;width:18px;height:18px;background:#eb7272;"></div>
<div class="r" style="left:699px;top:323px;width:17px;height:18px;background:#bd4a4a;"></div>
<div class="r" style="left:660px;top:343px;width:17px;height:17px;background:#94795d;"></div>
<div class="r" style="left:679px;top:343px;width:18px;height:17px;background:#c2a37a;"></div>
<div class="r" style="left:699px;top:343px;width:17px;height:17px;background:#9c8369;"></div>
<div class="r" style="left:658px;top:367px;width:60px;height:20px;background:#fff5e1;box-shadow:inset 0 0 0 1px #e58b68;"></div>
<div class="r" style="left:363px;top:399px;width:365px;height:1px;background:#d77575;"></div>
<div class="r" style="left:483px;top:412px;width:76px;height:24px;background:#c2a37a;box-shadow:inset 0 0 0 1px #94795d;"></div>
<svg class="r" style="left:499px;top:418px" width="12" height="12" viewBox="0 0 12 12" shape-rendering="crispEdges"><rect x="0" y="0" width="12" height="1" fill="#9c8369"/><rect x="0" y="11" width="12" height="1" fill="#9c8369"/><rect x="0" y="0" width="1" height="12" fill="#9c8369"/><rect x="11" y="0" width="1" height="12" fill="#9c8369"/><rect x="1" y="4" width="4" height="4" fill="#9c8369"/></svg>
<div class="r" style="left:561px;top:412px;width:76px;height:24px;background:#c2a37a;box-shadow:inset 0 0 0 1px #94795d;"></div>
<svg class="r" style="left:570px;top:418px" width="12" height="12" viewBox="0 0 12 12" shape-rendering="crispEdges"><rect x="0" y="0" width="12" height="1" fill="#9c8369"/><rect x="0" y="11" width="12" height="1" fill="#9c8369"/><rect x="0" y="0" width="1" height="12" fill="#9c8369"/><rect x="11" y="0" width="1" height="12" fill="#9c8369"/><rect x="4" y="4" width="4" height="4" fill="#9c8369"/></svg>
<div class="r" style="left:639px;top:412px;width:76px;height:24px;background:#c2a37a;box-shadow:inset 0 0 0 1px #94795d;"></div>
<svg class="r" style="left:654px;top:418px" width="12" height="12" viewBox="0 0 12 12" shape-rendering="crispEdges"><rect x="0" y="0" width="12" height="1" fill="#9c8369"/><rect x="0" y="11" width="12" height="1" fill="#9c8369"/><rect x="0" y="0" width="1" height="12" fill="#9c8369"/><rect x="11" y="0" width="1" height="12" fill="#9c8369"/><rect x="7" y="4" width="4" height="4" fill="#9c8369"/></svg>
<div class="r" style="left:363px;top:465px;width:1px;height:90px;background:#d77575;"></div>
<div class="r" style="left:727px;top:465px;width:1px;height:90px;background:#d77575;"></div>
<div class="r" style="left:363px;top:554px;width:365px;height:1px;background:#d77575;"></div>
<div class="r" style="left:363px;top:465px;width:8px;height:1px;background:#d77575;"></div>
<div class="r" style="left:501px;top:465px;width:227px;height:1px;background:#d77575;"></div>
<div class="r" style="left:373px;top:481px;width:60px;height:24px;background:#feda96;box-shadow:inset 0 0 0 2px #e58b68;"></div>
<svg class="r" style="left:381px;top:485px" width="16" height="16" viewBox="0 0 16 16" shape-rendering="crispEdges"><rect x="2" y="2" width="1" height="1" fill="#e59b5f"/><rect x="2" y="3" width="1" height="1" fill="#e59b5f"/><rect x="3" y="2" width="1" height="1" fill="#e59b5f"/><rect x="4" y="2" width="1" height="1" fill="#e59b5f"/><rect x="5" y="2" width="1" height="1" fill="#e59b5f"/><rect x="6" y="2" width="1" height="1" fill="#e59b5f"/><rect x="6" y="13" width="1" height="1" fill="#e59b5f"/><rect x="7" y="2" width="1" height="1" fill="#e59b5f"/><rect x="7" y="3" width="1" height="1" fill="#e59b5f"/><rect x="7" y="4" width="1" height="1" fill="#e59b5f"/><rect x="7" y="5" width="1" height="1" fill="#e59b5f"/><rect x="7" y="6" width="1" height="1" fill="#e59b5f"/><rect x="7" y="7" width="1" height="1" fill="#e59b5f"/><rect x="7" y="8" width="1" height="1" fill="#e59b5f"/><rect x="7" y="9" width="1" height="1" fill="#e59b5f"/><rect x="7" y="10" width="1" height="1" fill="#e59b5f"/><rect x="7" y="11" width="1" height="1" fill="#e59b5f"/><rect x="7" y="12" width="1" height="1" fill="#e59b5f"/><rect x="7" y="13" width="1" height="1" fill="#e59b5f"/><rect x="8" y="2" width="1" height="1" fill="#e59b5f"/><rect x="8" y="3" width="1" height="1" fill="#e59b5f"/><rect x="8" y="4" width="1" height="1" fill="#e59b5f"/><rect x="8" y="5" width="1" height="1" fill="#e59b5f"/><rect x="8" y="6" width="1" height="1" fill="#e59b5f"/><rect x="8" y="7" width="1" height="1" fill="#e59b5f"/><rect x="8" y="8" width="1" height="1" fill="#e59b5f"/><rect x="8" y="9" width="1" height="1" fill="#e59b5f"/><rect x="8" y="10" width="1" height="1" fill="#e59b5f"/><rect x="8" y="11" width="1" height="1" fill="#e59b5f"/><rect x="8" y="12" width="1" height="1" fill="#e59b5f"/><rect x="8" y="13" width="1" height="1" fill="#e59b5f"/><rect x="9" y="2" width="1" height="1" fill="#e59b5f"/><rect x="9" y="13" width="1" height="1" fill="#e59b5f"/><rect x="10" y="2" width="1" height="1" fill="#e59b5f"/><rect x="11" y="2" width="1" height="1" fill="#e59b5f"/><rect x="12" y="2" width="1" height="1" fill="#e59b5f"/><rect x="13" y="2" width="1" height="1" fill="#e59b5f"/><rect x="13" y="3" width="1" height="1" fill="#e59b5f"/></svg>
<div class="r" style="left:473px;top:481px;width:24px;height:24px;background:#feda96;box-shadow:inset 0 0 0 2px #e58b68;"></div>
<svg class="r" style="left:481px;top:488px" width="7" height="11" viewBox="0 0 7 11" shape-rendering="crispEdges"><polygon points="6,0 6,11 0,5.5" fill="#e59b5f"/></svg>
<div class="r" style="left:499px;top:481px;width:40px;height:24px;background:#fff5e1;box-shadow:inset 0 0 0 1px #e58b68;"></div>
<div class="r" style="left:541px;top:481px;width:24px;height:24px;background:#feda96;box-shadow:inset 0 0 0 2px #e58b68;"></div>
<svg class="r" style="left:551px;top:488px" width="7" height="11" viewBox="0 0 7 11" shape-rendering="crispEdges"><polygon points="0,0 0,11 6,5.5" fill="#e59b5f"/></svg>
<div class="r" style="left:625px;top:481px;width:24px;height:24px;background:#feda96;box-shadow:inset 0 0 0 2px #e58b68;"></div>
<svg class="r" style="left:633px;top:488px" width="7" height="11" viewBox="0 0 7 11" shape-rendering="crispEdges"><polygon points="6,0 6,11 0,5.5" fill="#e59b5f"/></svg>
<div class="r" style="left:651px;top:481px;width:40px;height:24px;background:#fff5e1;box-shadow:inset 0 0 0 1px #e58b68;"></div>
<div class="r" style="left:693px;top:481px;width:24px;height:24px;background:#feda96;box-shadow:inset 0 0 0 2px #e58b68;"></div>
<svg class="r" style="left:703px;top:488px" width="7" height="11" viewBox="0 0 7 11" shape-rendering="crispEdges"><polygon points="0,0 0,11 6,5.5" fill="#e59b5f"/></svg>
<div class="r" style="left:373px;top:517px;width:345px;height:28px;background:#fff5e1;box-shadow:inset 0 0 0 1px #e58b68;"></div>
<div class="r" style="left:0px;top:586px;width:748px;height:24px;background:#feda96;box-shadow:inset 0 0 0 1px #e58b68;"></div>
<div class="r" style="left:59px;top:586px;width:101px;height:24px;background:#fff5e1;box-shadow:inset 0 0 0 1px #e58b68;"></div>
<div class="r" style="left:348px;top:586px;width:1px;height:24px;background:#e58b68;"></div>
<svg class="r" style="left:170px;top:14px" width="33" height="10" viewBox="0 -1 33 10" shape-rendering="crispEdges"><path fill="#e59b5f" d="M1 0h4v1h-4zM0 1h2v1h-2zM4 1h2v1h-2zM0 2h2v1h-2zM0 3h2v1h-2zM1 4h4v1h-4zM4 5h2v1h-2zM0 6h2v1h-2zM4 6h2v1h-2zM0 7h2v1h-2zM4 7h2v1h-2zM1 8h4v1h-4zM7 -1h2v1h-2zM7 0h2v1h-2zM7 1h2v1h-2zM7 2h3v1h-3zM7 3h2v1h-2zM7 4h2v1h-2zM7 5h2v1h-2zM7 6h2v1h-2zM7 7h2v1h-2zM8 8h2v1h-2zM12 2h4v1h-4zM11 3h2v1h-2zM15 3h2v1h-2zM14 4h3v1h-3zM12 5h5v1h-5zM11 6h2v1h-2zM15 6h2v1h-2zM11 7h2v1h-2zM15 7h2v1h-2zM12 8h5v1h-5zM18 -1h2v1h-2zM18 0h2v1h-2zM18 1h2v1h-2zM18 2h3v1h-3zM18 3h2v1h-2zM18 4h2v1h-2zM18 5h2v1h-2zM18 6h2v1h-2zM18 7h2v1h-2zM19 8h2v1h-2zM23 2h4v1h-4zM22 3h2v1h-2zM26 3h2v1h-2zM23 4h3v1h-3zM22 5h2v1h-2zM22 6h2v1h-2zM26 6h2v1h-2zM22 7h2v1h-2zM26 7h2v1h-2zM23 8h4v1h-4zM29 3h2v1h-2zM29 4h2v1h-2zM29 7h2v1h-2zM29 8h2v1h-2z"/></svg>
<svg class="r" style="left:251px;top:15px" width="45" height="9" viewBox="0 0 45 9" shape-rendering="crispEdges"><path fill="#e59b5f" d="M0 0h2v1h-2zM4 0h2v1h-2zM0 1h3v1h-3zM4 1h2v1h-2zM0 2h2v1h-2zM3 2h3v1h-3zM0 3h2v1h-2zM4 3h2v1h-2zM0 4h2v1h-2zM4 4h2v1h-2zM0 5h2v1h-2zM4 5h2v1h-2zM0 6h2v1h-2zM4 6h2v1h-2zM0 7h2v1h-2zM4 7h2v1h-2zM0 8h2v1h-2zM4 8h2v1h-2zM8 0h4v1h-4zM7 1h2v1h-2zM11 1h2v1h-2zM7 2h2v1h-2zM11 2h2v1h-2zM7 3h2v1h-2zM11 3h2v1h-2zM7 4h2v1h-2zM11 4h2v1h-2zM7 5h2v1h-2zM11 5h2v1h-2zM7 6h2v1h-2zM11 6h2v1h-2zM7 7h2v1h-2zM11 7h2v1h-2zM8 8h4v1h-4zM14 0h5v1h-5zM14 1h2v1h-2zM18 1h2v1h-2zM14 2h2v1h-2zM18 2h2v1h-2zM14 3h2v1h-2zM17 3h2v1h-2zM14 4h2v1h-2zM18 4h2v1h-2zM14 5h2v1h-2zM18 5h2v1h-2zM14 6h2v1h-2zM18 6h2v1h-2zM14 7h2v1h-2zM18 7h2v1h-2zM14 8h2v1h-2zM18 8h2v1h-2zM21 0h3v1h-3zM26 0h3v1h-3zM21 1h2v1h-2zM24 1h2v1h-2zM27 1h2v1h-2zM21 2h2v1h-2zM24 2h2v1h-2zM27 2h2v1h-2zM21 3h2v1h-2zM24 3h2v1h-2zM27 3h2v1h-2zM21 4h2v1h-2zM24 4h2v1h-2zM27 4h2v1h-2zM21 5h2v1h-2zM24 5h2v1h-2zM27 5h2v1h-2zM21 6h2v1h-2zM24 6h2v1h-2zM27 6h2v1h-2zM21 7h2v1h-2zM24 7h2v1h-2zM27 7h2v1h-2zM21 8h2v1h-2zM24 8h2v1h-2zM27 8h2v1h-2zM31 0h4v1h-4zM30 1h2v1h-2zM34 1h2v1h-2zM30 2h2v1h-2zM34 2h2v1h-2zM30 3h2v1h-2zM33 3h3v1h-3zM30 4h2v1h-2zM34 4h2v1h-2zM30 5h2v1h-2zM34 5h2v1h-2zM30 6h2v1h-2zM34 6h2v1h-2zM30 7h2v1h-2zM34 7h2v1h-2zM30 8h2v1h-2zM34 8h2v1h-2zM37 0h2v1h-2zM37 1h2v1h-2zM37 2h2v1h-2zM37 3h2v1h-2zM37 4h2v1h-2zM37 5h2v1h-2zM41 5h2v1h-2zM37 6h2v1h-2zM41 6h2v1h-2zM37 7h2v1h-2zM41 7h2v1h-2zM38 8h4v1h-4z"/></svg>
<svg class="r" style="left:436px;top:14px" width="33" height="12" viewBox="0 -1 33 12" shape-rendering="crispEdges"><path fill="#e59b5f" d="M1 0h4v1h-4zM0 1h2v1h-2zM4 1h2v1h-2zM0 2h2v1h-2zM0 3h2v1h-2zM1 4h4v1h-4zM4 5h2v1h-2zM0 6h2v1h-2zM4 6h2v1h-2zM0 7h2v1h-2zM4 7h2v1h-2zM1 8h4v1h-4zM7 -1h2v1h-2zM7 0h2v1h-2zM7 1h2v1h-2zM7 2h3v1h-3zM7 3h2v1h-2zM7 4h2v1h-2zM7 5h2v1h-2zM7 6h2v1h-2zM7 7h2v1h-2zM8 8h2v1h-2zM11 2h2v1h-2zM15 2h2v1h-2zM11 3h2v1h-2zM15 3h2v1h-2zM11 4h2v1h-2zM15 4h2v1h-2zM11 5h2v1h-2zM15 5h2v1h-2zM11 6h2v1h-2zM15 6h2v1h-2zM11 7h2v1h-2zM15 7h2v1h-2zM12 8h5v1h-5zM15 9h2v1h-2zM12 10h4v1h-4zM18 -1h2v1h-2zM18 0h2v1h-2zM18 1h2v1h-2zM18 2h2v1h-2zM18 3h2v1h-2zM18 4h2v1h-2zM18 5h2v1h-2zM18 6h2v1h-2zM18 7h2v1h-2zM19 8h2v1h-2zM23 2h4v1h-4zM22 3h2v1h-2zM26 3h2v1h-2zM23 4h3v1h-3zM22 5h2v1h-2zM22 6h2v1h-2zM26 6h2v1h-2zM22 7h2v1h-2zM26 7h2v1h-2zM23 8h4v1h-4zM29 3h2v1h-2zM29 4h2v1h-2zM29 7h2v1h-2zM29 8h2v1h-2z"/></svg>
<svg class="r" style="left:503px;top:14px" width="36" height="12" viewBox="0 -1 36 12" shape-rendering="crispEdges"><path fill="#e59b5f" d="M1 0h4v1h-4zM0 1h2v1h-2zM4 1h2v1h-2zM0 2h2v1h-2zM4 2h2v1h-2zM0 3h2v1h-2zM4 3h2v1h-2zM0 4h2v1h-2zM0 5h2v1h-2zM4 5h2v1h-2zM0 6h2v1h-2zM4 6h2v1h-2zM0 7h2v1h-2zM4 7h2v1h-2zM1 8h4v1h-4zM8 2h4v1h-4zM7 3h2v1h-2zM11 3h2v1h-2zM10 4h3v1h-3zM8 5h5v1h-5zM7 6h2v1h-2zM11 6h2v1h-2zM7 7h2v1h-2zM11 7h2v1h-2zM8 8h5v1h-5zM14 2h5v1h-5zM14 3h2v1h-2zM18 3h2v1h-2zM14 4h2v1h-2zM18 4h2v1h-2zM14 5h2v1h-2zM18 5h2v1h-2zM14 6h2v1h-2zM18 6h2v1h-2zM14 7h2v1h-2zM18 7h2v1h-2zM14 8h2v1h-2zM18 8h2v1h-2zM25 -1h2v1h-2zM25 0h2v1h-2zM25 1h2v1h-2zM22 2h5v1h-5zM21 3h2v1h-2zM25 3h2v1h-2zM21 4h2v1h-2zM25 4h2v1h-2zM21 5h2v1h-2zM25 5h2v1h-2zM21 6h2v1h-2zM25 6h2v1h-2zM21 7h2v1h-2zM25 7h2v1h-2zM22 8h5v1h-5zM28 2h2v1h-2zM32 2h2v1h-2zM28 3h2v1h-2zM32 3h2v1h-2zM28 4h2v1h-2zM32 4h2v1h-2zM28 5h2v1h-2zM32 5h2v1h-2zM28 6h2v1h-2zM32 6h2v1h-2zM28 7h2v1h-2zM32 7h2v1h-2zM29 8h5v1h-5zM32 9h2v1h-2zM29 10h4v1h-4z"/></svg>
<svg class="r" style="left:568px;top:15px" width="27" height="9" viewBox="0 0 27 9" shape-rendering="crispEdges"><path fill="#e59b5f" d="M1 0h4v1h-4zM0 1h2v1h-2zM4 1h2v1h-2zM4 2h2v1h-2zM3 3h2v1h-2zM4 4h2v1h-2zM4 5h2v1h-2zM0 6h2v1h-2zM4 6h2v1h-2zM0 7h2v1h-2zM4 7h2v1h-2zM1 8h4v1h-4zM11 0h2v1h-2zM11 1h2v1h-2zM10 2h2v1h-2zM10 3h2v1h-2zM9 4h2v1h-2zM8 5h2v1h-2zM8 6h2v1h-2zM7 7h2v1h-2zM7 8h2v1h-2zM15 0h2v1h-2zM14 1h3v1h-3zM15 2h2v1h-2zM15 3h2v1h-2zM15 4h2v1h-2zM15 5h2v1h-2zM15 6h2v1h-2zM15 7h2v1h-2zM14 8h4v1h-4zM20 0h4v1h-4zM19 1h2v1h-2zM23 1h2v1h-2zM22 2h3v1h-3zM20 3h3v1h-3zM19 4h3v1h-3zM19 5h2v1h-2zM19 6h2v1h-2zM23 6h2v1h-2zM19 7h2v1h-2zM23 7h2v1h-2zM19 8h6v1h-6z"/></svg>
<svg class="r" style="left:59px;top:64px" width="50" height="9" viewBox="0 0 50 9" shape-rendering="crispEdges"><path fill="#e59b5f" d="M0 0h5v1h-5zM0 1h2v1h-2zM4 1h2v1h-2zM0 2h2v1h-2zM4 2h2v1h-2zM0 3h2v1h-2zM4 3h2v1h-2zM0 4h2v1h-2zM4 4h2v1h-2zM0 5h2v1h-2zM4 5h2v1h-2zM0 6h2v1h-2zM4 6h2v1h-2zM0 7h2v1h-2zM4 7h2v1h-2zM0 8h5v1h-5zM8 0h4v1h-4zM7 1h2v1h-2zM11 1h2v1h-2zM7 2h2v1h-2zM11 2h2v1h-2zM7 3h2v1h-2zM11 3h2v1h-2zM8 4h2v1h-2zM7 5h2v1h-2zM11 5h2v1h-2zM7 6h2v1h-2zM11 6h2v1h-2zM7 7h2v1h-2zM11 7h2v1h-2zM8 8h4v1h-4zM15 0h4v1h-4zM14 1h2v1h-2zM18 1h2v1h-2zM14 2h2v1h-2zM18 2h2v1h-2zM14 3h2v1h-2zM18 3h2v1h-2zM14 4h2v1h-2zM14 5h4v1h-4zM14 6h2v1h-2zM14 7h2v1h-2zM14 8h2v1h-2zM22 0h4v1h-4zM21 1h2v1h-2zM25 1h2v1h-2zM21 2h2v1h-2zM25 2h2v1h-2zM21 3h2v1h-2zM24 3h3v1h-3zM21 4h2v1h-2zM25 4h2v1h-2zM21 5h2v1h-2zM25 5h2v1h-2zM21 6h2v1h-2zM25 6h2v1h-2zM21 7h2v1h-2zM25 7h2v1h-2zM21 8h2v1h-2zM25 8h2v1h-2zM28 0h2v1h-2zM32 0h2v1h-2zM28 1h2v1h-2zM32 1h2v1h-2zM28 2h2v1h-2zM32 2h2v1h-2zM28 3h2v1h-2zM32 3h2v1h-2zM28 4h2v1h-2zM32 4h2v1h-2zM28 5h2v1h-2zM32 5h2v1h-2zM28 6h2v1h-2zM32 6h2v1h-2zM28 7h2v1h-2zM32 7h2v1h-2zM29 8h4v1h-4zM35 0h2v1h-2zM35 1h2v1h-2zM35 2h2v1h-2zM35 3h2v1h-2zM35 4h2v1h-2zM35 5h2v1h-2zM39 5h2v1h-2zM35 6h2v1h-2zM39 6h2v1h-2zM35 7h2v1h-2zM39 7h2v1h-2zM36 8h4v1h-4zM42 0h6v1h-6zM44 1h2v1h-2zM44 2h2v1h-2zM44 3h2v1h-2zM44 4h2v1h-2zM44 5h2v1h-2zM44 6h2v1h-2zM44 7h2v1h-2zM44 8h2v1h-2z"/></svg>
<svg class="r" style="left:66px;top:94px" width="36" height="9" viewBox="0 0 36 9" shape-rendering="crispEdges"><path fill="#bd4a4a" d="M0 0h2v1h-2zM0 1h2v1h-2zM0 2h2v1h-2zM0 3h2v1h-2zM0 4h2v1h-2zM0 5h2v1h-2zM4 5h2v1h-2zM0 6h2v1h-2zM4 6h2v1h-2zM0 7h2v1h-2zM4 7h2v1h-2zM1 8h4v1h-4zM8 0h4v1h-4zM7 1h2v1h-2zM11 1h2v1h-2zM7 2h2v1h-2zM11 2h2v1h-2zM7 3h2v1h-2zM10 3h3v1h-3zM7 4h2v1h-2zM11 4h2v1h-2zM7 5h2v1h-2zM11 5h2v1h-2zM7 6h2v1h-2zM11 6h2v1h-2zM7 7h2v1h-2zM11 7h2v1h-2zM7 8h2v1h-2zM11 8h2v1h-2zM15 0h4v1h-4zM14 1h2v1h-2zM18 1h2v1h-2zM14 2h2v1h-2zM18 2h2v1h-2zM14 3h2v1h-2zM17 3h2v1h-2zM14 4h2v1h-2zM18 4h2v1h-2zM14 5h2v1h-2zM18 5h2v1h-2zM14 6h2v1h-2zM18 6h2v1h-2zM14 7h2v1h-2zM18 7h2v1h-2zM14 8h5v1h-5zM22 0h4v1h-4zM21 1h2v1h-2zM25 1h2v1h-2zM21 2h2v1h-2zM25 2h2v1h-2zM21 3h2v1h-2zM25 3h2v1h-2zM22 4h2v1h-2zM21 5h2v1h-2zM25 5h2v1h-2zM21 6h2v1h-2zM25 6h2v1h-2zM21 7h2v1h-2zM25 7h2v1h-2zM22 8h4v1h-4zM28 0h2v1h-2zM28 1h2v1h-2zM28 2h2v1h-2zM28 3h2v1h-2zM28 4h2v1h-2zM28 5h2v1h-2zM32 5h2v1h-2zM28 6h2v1h-2zM32 6h2v1h-2zM28 7h2v1h-2zM32 7h2v1h-2zM29 8h4v1h-4z"/></svg>
<svg class="r" style="left:62px;top:124px" width="43" height="9" viewBox="0 0 43 9" shape-rendering="crispEdges"><path fill="#e59b5f" d="M1 0h4v1h-4zM0 1h2v1h-2zM4 1h2v1h-2zM0 2h2v1h-2zM4 2h2v1h-2zM0 3h2v1h-2zM3 3h2v1h-2zM0 4h2v1h-2zM4 4h2v1h-2zM0 5h2v1h-2zM4 5h2v1h-2zM0 6h2v1h-2zM4 6h2v1h-2zM0 7h2v1h-2zM4 7h2v1h-2zM0 8h5v1h-5zM7 0h2v1h-2zM11 0h2v1h-2zM7 1h2v1h-2zM11 1h2v1h-2zM7 2h2v1h-2zM11 2h2v1h-2zM7 3h2v1h-2zM11 3h2v1h-2zM7 4h2v1h-2zM11 4h2v1h-2zM7 5h2v1h-2zM11 5h2v1h-2zM7 6h2v1h-2zM11 6h2v1h-2zM7 7h2v1h-2zM11 7h2v1h-2zM8 8h4v1h-4zM14 0h6v1h-6zM16 1h2v1h-2zM16 2h2v1h-2zM16 3h2v1h-2zM16 4h2v1h-2zM16 5h2v1h-2zM16 6h2v1h-2zM16 7h2v1h-2zM16 8h2v1h-2zM21 0h6v1h-6zM23 1h2v1h-2zM23 2h2v1h-2zM23 3h2v1h-2zM23 4h2v1h-2zM23 5h2v1h-2zM23 6h2v1h-2zM23 7h2v1h-2zM23 8h2v1h-2zM29 0h4v1h-4zM28 1h2v1h-2zM32 1h2v1h-2zM28 2h2v1h-2zM32 2h2v1h-2zM28 3h2v1h-2zM32 3h2v1h-2zM28 4h2v1h-2zM32 4h2v1h-2zM28 5h2v1h-2zM32 5h2v1h-2zM28 6h2v1h-2zM32 6h2v1h-2zM28 7h2v1h-2zM32 7h2v1h-2zM29 8h4v1h-4zM35 0h2v1h-2zM39 0h2v1h-2zM35 1h3v1h-3zM39 1h2v1h-2zM35 2h2v1h-2zM38 2h3v1h-3zM35 3h2v1h-2zM39 3h2v1h-2zM35 4h2v1h-2zM39 4h2v1h-2zM35 5h2v1h-2zM39 5h2v1h-2zM35 6h2v1h-2zM39 6h2v1h-2zM35 7h2v1h-2zM39 7h2v1h-2zM35 8h2v1h-2zM39 8h2v1h-2z"/></svg>
<svg class="r" style="left:62px;top:154px" width="43" height="9" viewBox="0 0 43 9" shape-rendering="crispEdges"><path fill="#e59b5f" d="M0 0h6v1h-6zM2 1h2v1h-2zM2 2h2v1h-2zM2 3h2v1h-2zM2 4h2v1h-2zM2 5h2v1h-2zM2 6h2v1h-2zM2 7h2v1h-2zM2 8h2v1h-2zM8 0h4v1h-4zM7 1h2v1h-2zM11 1h2v1h-2zM7 2h2v1h-2zM11 2h2v1h-2zM7 3h2v1h-2zM11 3h2v1h-2zM7 4h2v1h-2zM11 4h2v1h-2zM7 5h2v1h-2zM11 5h2v1h-2zM7 6h2v1h-2zM11 6h2v1h-2zM7 7h2v1h-2zM11 7h2v1h-2zM8 8h4v1h-4zM15 0h4v1h-4zM14 1h2v1h-2zM18 1h2v1h-2zM14 2h2v1h-2zM18 2h2v1h-2zM14 3h2v1h-2zM14 4h2v1h-2zM17 4h3v1h-3zM14 5h2v1h-2zM18 5h2v1h-2zM14 6h2v1h-2zM18 6h2v1h-2zM14 7h2v1h-2zM18 7h2v1h-2zM15 8h4v1h-4zM22 0h4v1h-4zM21 1h2v1h-2zM25 1h2v1h-2zM21 2h2v1h-2zM25 2h2v1h-2zM21 3h2v1h-2zM21 4h2v1h-2zM24 4h3v1h-3zM21 5h2v1h-2zM25 5h2v1h-2zM21 6h2v1h-2zM25 6h2v1h-2zM21 7h2v1h-2zM25 7h2v1h-2zM22 8h4v1h-4zM28 0h2v1h-2zM28 1h2v1h-2zM28 2h2v1h-2zM28 3h2v1h-2zM28 4h2v1h-2zM28 5h2v1h-2zM32 5h2v1h-2zM28 6h2v1h-2zM32 6h2v1h-2zM28 7h2v1h-2zM32 7h2v1h-2zM29 8h4v1h-4zM36 0h4v1h-4zM35 1h2v1h-2zM39 1h2v1h-2zM35 2h2v1h-2zM39 2h2v1h-2zM35 3h2v1h-2zM39 3h2v1h-2zM36 4h2v1h-2zM35 5h2v1h-2zM39 5h2v1h-2zM35 6h2v1h-2zM39 6h2v1h-2zM35 7h2v1h-2zM39 7h2v1h-2zM36 8h4v1h-4z"/></svg>
<svg class="r" style="left:64px;top:184px" width="39" height="9" viewBox="0 0 39 9" shape-rendering="crispEdges"><path fill="#e59b5f" d="M1 0h4v1h-4zM0 1h2v1h-2zM4 1h2v1h-2zM0 2h2v1h-2zM0 3h2v1h-2zM1 4h4v1h-4zM4 5h2v1h-2zM0 6h2v1h-2zM4 6h2v1h-2zM0 7h2v1h-2zM4 7h2v1h-2zM1 8h4v1h-4zM7 0h2v1h-2zM7 1h2v1h-2zM7 2h2v1h-2zM7 3h2v1h-2zM7 4h2v1h-2zM7 5h2v1h-2zM11 5h2v1h-2zM7 6h2v1h-2zM11 6h2v1h-2zM7 7h2v1h-2zM11 7h2v1h-2zM8 8h4v1h-4zM14 0h2v1h-2zM14 1h2v1h-2zM14 2h2v1h-2zM14 3h2v1h-2zM14 4h2v1h-2zM14 5h2v1h-2zM14 6h2v1h-2zM14 7h2v1h-2zM14 8h2v1h-2zM17 0h5v1h-5zM17 1h2v1h-2zM21 1h2v1h-2zM17 2h2v1h-2zM21 2h2v1h-2zM17 3h2v1h-2zM21 3h2v1h-2zM17 4h2v1h-2zM21 4h2v1h-2zM17 5h2v1h-2zM21 5h2v1h-2zM17 6h2v1h-2zM21 6h2v1h-2zM17 7h2v1h-2zM21 7h2v1h-2zM17 8h5v1h-5zM25 0h4v1h-4zM24 1h2v1h-2zM28 1h2v1h-2zM24 2h2v1h-2zM28 2h2v1h-2zM24 3h2v1h-2zM28 3h2v1h-2zM25 4h2v1h-2zM24 5h2v1h-2zM28 5h2v1h-2zM24 6h2v1h-2zM28 6h2v1h-2zM24 7h2v1h-2zM28 7h2v1h-2zM25 8h4v1h-4zM31 0h5v1h-5zM31 1h2v1h-2zM35 1h2v1h-2zM31 2h2v1h-2zM35 2h2v1h-2zM31 3h2v1h-2zM34 3h2v1h-2zM31 4h2v1h-2zM35 4h2v1h-2zM31 5h2v1h-2zM35 5h2v1h-2zM31 6h2v1h-2zM35 6h2v1h-2zM31 7h2v1h-2zM35 7h2v1h-2zM31 8h2v1h-2zM35 8h2v1h-2z"/></svg>
<svg class="r" style="left:45px;top:214px" width="78" height="9" viewBox="0 0 78 9" shape-rendering="crispEdges"><path fill="#e59b5f" d="M0 0h5v1h-5zM0 1h2v1h-2zM4 1h2v1h-2zM0 2h2v1h-2zM4 2h2v1h-2zM0 3h2v1h-2zM4 3h2v1h-2zM0 4h2v1h-2zM4 4h2v1h-2zM0 5h5v1h-5zM0 6h2v1h-2zM0 7h2v1h-2zM0 8h2v1h-2zM7 0h5v1h-5zM7 1h2v1h-2zM11 1h2v1h-2zM7 2h2v1h-2zM11 2h2v1h-2zM7 3h2v1h-2zM10 3h2v1h-2zM7 4h2v1h-2zM11 4h2v1h-2zM7 5h2v1h-2zM11 5h2v1h-2zM7 6h2v1h-2zM11 6h2v1h-2zM7 7h2v1h-2zM11 7h2v1h-2zM7 8h2v1h-2zM11 8h2v1h-2zM15 0h4v1h-4zM14 1h2v1h-2zM18 1h2v1h-2zM14 2h2v1h-2zM18 2h2v1h-2zM14 3h2v1h-2zM18 3h2v1h-2zM14 4h2v1h-2zM18 4h2v1h-2zM14 5h2v1h-2zM18 5h2v1h-2zM14 6h2v1h-2zM18 6h2v1h-2zM14 7h2v1h-2zM18 7h2v1h-2zM15 8h4v1h-4zM22 0h4v1h-4zM21 1h2v1h-2zM25 1h2v1h-2zM21 2h2v1h-2zM25 2h2v1h-2zM21 3h2v1h-2zM21 4h2v1h-2zM24 4h3v1h-3zM21 5h2v1h-2zM25 5h2v1h-2zM21 6h2v1h-2zM25 6h2v1h-2zM21 7h2v1h-2zM25 7h2v1h-2zM22 8h4v1h-4zM28 0h5v1h-5zM28 1h2v1h-2zM32 1h2v1h-2zM28 2h2v1h-2zM32 2h2v1h-2zM28 3h2v1h-2zM31 3h2v1h-2zM28 4h2v1h-2zM32 4h2v1h-2zM28 5h2v1h-2zM32 5h2v1h-2zM28 6h2v1h-2zM32 6h2v1h-2zM28 7h2v1h-2zM32 7h2v1h-2zM28 8h2v1h-2zM32 8h2v1h-2zM36 0h4v1h-4zM35 1h2v1h-2zM39 1h2v1h-2zM35 2h2v1h-2zM39 2h2v1h-2zM35 3h2v1h-2zM39 3h2v1h-2zM36 4h2v1h-2zM35 5h2v1h-2zM39 5h2v1h-2zM35 6h2v1h-2zM39 6h2v1h-2zM35 7h2v1h-2zM39 7h2v1h-2zM36 8h4v1h-4zM43 0h4v1h-4zM42 1h2v1h-2zM46 1h2v1h-2zM42 2h2v1h-2zM42 3h2v1h-2zM43 4h4v1h-4zM46 5h2v1h-2zM42 6h2v1h-2zM46 6h2v1h-2zM42 7h2v1h-2zM46 7h2v1h-2zM43 8h4v1h-4zM50 0h4v1h-4zM49 1h2v1h-2zM53 1h2v1h-2zM49 2h2v1h-2zM49 3h2v1h-2zM50 4h4v1h-4zM53 5h2v1h-2zM49 6h2v1h-2zM53 6h2v1h-2zM49 7h2v1h-2zM53 7h2v1h-2zM50 8h4v1h-4zM57 0h4v1h-4zM56 1h2v1h-2zM60 1h2v1h-2zM56 2h2v1h-2zM60 2h2v1h-2zM56 3h2v1h-2zM59 3h2v1h-2zM56 4h2v1h-2zM60 4h2v1h-2zM56 5h2v1h-2zM60 5h2v1h-2zM56 6h2v1h-2zM60 6h2v1h-2zM56 7h2v1h-2zM60 7h2v1h-2zM56 8h5v1h-5zM64 0h4v1h-4zM63 1h2v1h-2zM67 1h2v1h-2zM63 2h2v1h-2zM67 2h2v1h-2zM63 3h2v1h-2zM66 3h3v1h-3zM63 4h2v1h-2zM67 4h2v1h-2zM63 5h2v1h-2zM67 5h2v1h-2zM63 6h2v1h-2zM67 6h2v1h-2zM63 7h2v1h-2zM67 7h2v1h-2zM63 8h2v1h-2zM67 8h2v1h-2zM70 0h5v1h-5zM70 1h2v1h-2zM74 1h2v1h-2zM70 2h2v1h-2zM74 2h2v1h-2zM70 3h2v1h-2zM73 3h2v1h-2zM70 4h2v1h-2zM74 4h2v1h-2zM70 5h2v1h-2zM74 5h2v1h-2zM70 6h2v1h-2zM74 6h2v1h-2zM70 7h2v1h-2zM74 7h2v1h-2zM70 8h2v1h-2zM74 8h2v1h-2z"/></svg>
<svg class="r" style="left:55px;top:244px" width="57" height="9" viewBox="0 0 57 9" shape-rendering="crispEdges"><path fill="#e59b5f" d="M1 0h4v1h-4zM0 1h2v1h-2zM4 1h2v1h-2zM0 2h2v1h-2zM4 2h2v1h-2zM0 3h2v1h-2zM4 3h2v1h-2zM0 4h2v1h-2zM0 5h2v1h-2zM4 5h2v1h-2zM0 6h2v1h-2zM4 6h2v1h-2zM0 7h2v1h-2zM4 7h2v1h-2zM1 8h4v1h-4zM7 0h2v1h-2zM11 0h2v1h-2zM7 1h2v1h-2zM11 1h2v1h-2zM7 2h2v1h-2zM11 2h2v1h-2zM7 3h6v1h-6zM7 4h2v1h-2zM11 4h2v1h-2zM7 5h2v1h-2zM11 5h2v1h-2zM7 6h2v1h-2zM11 6h2v1h-2zM7 7h2v1h-2zM11 7h2v1h-2zM7 8h2v1h-2zM11 8h2v1h-2zM15 0h4v1h-4zM14 1h2v1h-2zM18 1h2v1h-2zM14 2h2v1h-2zM18 2h2v1h-2zM14 3h2v1h-2zM18 3h2v1h-2zM15 4h2v1h-2zM14 5h2v1h-2zM18 5h2v1h-2zM14 6h2v1h-2zM18 6h2v1h-2zM14 7h2v1h-2zM18 7h2v1h-2zM15 8h4v1h-4zM22 0h4v1h-4zM21 1h2v1h-2zM25 1h2v1h-2zM21 2h2v1h-2zM25 2h2v1h-2zM21 3h2v1h-2zM25 3h2v1h-2zM21 4h2v1h-2zM21 5h2v1h-2zM25 5h2v1h-2zM21 6h2v1h-2zM25 6h2v1h-2zM21 7h2v1h-2zM25 7h2v1h-2zM22 8h4v1h-4zM28 0h2v1h-2zM32 0h2v1h-2zM28 1h2v1h-2zM31 1h2v1h-2zM28 2h2v1h-2zM31 2h1v1h-1zM28 3h4v1h-4zM28 4h2v1h-2zM31 4h2v1h-2zM28 5h2v1h-2zM32 5h2v1h-2zM28 6h2v1h-2zM32 6h2v1h-2zM28 7h2v1h-2zM32 7h2v1h-2zM28 8h2v1h-2zM32 8h2v1h-2zM36 0h4v1h-4zM35 1h2v1h-2zM39 1h2v1h-2zM35 2h2v1h-2zM39 2h2v1h-2zM35 3h2v1h-2zM38 3h2v1h-2zM35 4h2v1h-2zM39 4h2v1h-2zM35 5h2v1h-2zM39 5h2v1h-2zM35 6h2v1h-2zM39 6h2v1h-2zM35 7h2v1h-2zM39 7h2v1h-2zM35 8h5v1h-5zM43 0h4v1h-4zM42 1h2v1h-2zM46 1h2v1h-2zM42 2h2v1h-2zM46 2h2v1h-2zM42 3h2v1h-2zM46 3h2v1h-2zM42 4h2v1h-2zM46 4h2v1h-2zM42 5h2v1h-2zM46 5h2v1h-2zM42 6h2v1h-2zM46 6h2v1h-2zM42 7h2v1h-2zM46 7h2v1h-2zM43 8h4v1h-4zM49 0h2v1h-2zM53 0h2v1h-2zM49 1h2v1h-2zM53 1h2v1h-2zM50 2h4v1h-4zM51 3h2v1h-2zM50 4h4v1h-4zM49 5h2v1h-2zM53 5h2v1h-2zM49 6h2v1h-2zM53 6h2v1h-2zM49 7h2v1h-2zM53 7h2v1h-2zM49 8h2v1h-2zM53 8h2v1h-2z"/></svg>
<svg class="r" style="left:54px;top:274px" width="59" height="9" viewBox="0 0 59 9" shape-rendering="crispEdges"><path fill="#e59b5f" d="M1 0h4v1h-4zM0 1h2v1h-2zM4 1h2v1h-2zM0 2h2v1h-2zM4 2h2v1h-2zM0 3h2v1h-2zM4 3h2v1h-2zM0 4h2v1h-2zM0 5h2v1h-2zM4 5h2v1h-2zM0 6h2v1h-2zM4 6h2v1h-2zM0 7h2v1h-2zM4 7h2v1h-2zM1 8h4v1h-4zM8 0h4v1h-4zM7 1h2v1h-2zM11 1h2v1h-2zM7 2h2v1h-2zM11 2h2v1h-2zM7 3h2v1h-2zM11 3h2v1h-2zM7 4h2v1h-2zM11 4h2v1h-2zM7 5h2v1h-2zM11 5h2v1h-2zM7 6h2v1h-2zM11 6h2v1h-2zM7 7h2v1h-2zM11 7h2v1h-2zM8 8h4v1h-4zM14 0h3v1h-3zM19 0h3v1h-3zM14 1h2v1h-2zM17 1h2v1h-2zM20 1h2v1h-2zM14 2h2v1h-2zM17 2h2v1h-2zM20 2h2v1h-2zM14 3h2v1h-2zM17 3h2v1h-2zM20 3h2v1h-2zM14 4h2v1h-2zM17 4h2v1h-2zM20 4h2v1h-2zM14 5h2v1h-2zM17 5h2v1h-2zM20 5h2v1h-2zM14 6h2v1h-2zM17 6h2v1h-2zM20 6h2v1h-2zM14 7h2v1h-2zM17 7h2v1h-2zM20 7h2v1h-2zM14 8h2v1h-2zM17 8h2v1h-2zM20 8h2v1h-2zM24 0h4v1h-4zM23 1h2v1h-2zM27 1h2v1h-2zM23 2h2v1h-2zM27 2h2v1h-2zM23 3h2v1h-2zM26 3h2v1h-2zM23 4h2v1h-2zM27 4h2v1h-2zM23 5h2v1h-2zM27 5h2v1h-2zM23 6h2v1h-2zM27 6h2v1h-2zM23 7h2v1h-2zM27 7h2v1h-2zM23 8h5v1h-5zM31 0h4v1h-4zM30 1h2v1h-2zM34 1h2v1h-2zM30 2h2v1h-2zM34 2h2v1h-2zM30 3h2v1h-2zM34 3h2v1h-2zM30 4h2v1h-2zM34 4h2v1h-2zM30 5h2v1h-2zM34 5h2v1h-2zM30 6h2v1h-2zM34 6h2v1h-2zM30 7h2v1h-2zM34 7h2v1h-2zM31 8h4v1h-4zM38 0h4v1h-4zM37 1h2v1h-2zM41 1h2v1h-2zM37 2h2v1h-2zM41 2h2v1h-2zM37 3h2v1h-2zM40 3h2v1h-2zM37 4h2v1h-2zM41 4h2v1h-2zM37 5h2v1h-2zM41 5h2v1h-2zM37 6h2v1h-2zM41 6h2v1h-2zM37 7h2v1h-2zM41 7h2v1h-2zM37 8h5v1h-5zM45 0h4v1h-4zM44 1h2v1h-2zM48 1h2v1h-2zM44 2h2v1h-2zM48 2h2v1h-2zM44 3h2v1h-2zM48 3h2v1h-2zM44 4h2v1h-2zM48 4h2v1h-2zM44 5h2v1h-2zM48 5h2v1h-2zM44 6h2v1h-2zM48 6h2v1h-2zM44 7h2v1h-2zM48 7h2v1h-2zM45 8h4v1h-4zM51 0h2v1h-2zM55 0h2v1h-2zM51 1h2v1h-2zM55 1h2v1h-2zM52 2h4v1h-4zM53 3h2v1h-2zM52 4h4v1h-4zM51 5h2v1h-2zM55 5h2v1h-2zM51 6h2v1h-2zM55 6h2v1h-2zM51 7h2v1h-2zM55 7h2v1h-2zM51 8h2v1h-2zM55 8h2v1h-2z"/></svg>
<svg class="r" style="left:44px;top:304px" width="80" height="9" viewBox="0 0 80 9" shape-rendering="crispEdges"><path fill="#e59b5f" d="M0 0h5v1h-5zM0 1h2v1h-2zM4 1h2v1h-2zM0 2h2v1h-2zM4 2h2v1h-2zM0 3h2v1h-2zM4 3h2v1h-2zM0 4h2v1h-2zM4 4h2v1h-2zM0 5h2v1h-2zM4 5h2v1h-2zM0 6h2v1h-2zM4 6h2v1h-2zM0 7h2v1h-2zM4 7h2v1h-2zM0 8h5v1h-5zM7 0h5v1h-5zM7 1h2v1h-2zM11 1h2v1h-2zM7 2h2v1h-2zM11 2h2v1h-2zM7 3h2v1h-2zM10 3h2v1h-2zM7 4h2v1h-2zM11 4h2v1h-2zM7 5h2v1h-2zM11 5h2v1h-2zM7 6h2v1h-2zM11 6h2v1h-2zM7 7h2v1h-2zM11 7h2v1h-2zM7 8h2v1h-2zM11 8h2v1h-2zM15 0h4v1h-4zM14 1h2v1h-2zM18 1h2v1h-2zM14 2h2v1h-2zM18 2h2v1h-2zM14 3h2v1h-2zM18 3h2v1h-2zM14 4h2v1h-2zM18 4h2v1h-2zM14 5h2v1h-2zM18 5h2v1h-2zM14 6h2v1h-2zM18 6h2v1h-2zM14 7h2v1h-2zM18 7h2v1h-2zM15 8h4v1h-4zM21 0h5v1h-5zM21 1h2v1h-2zM25 1h2v1h-2zM21 2h2v1h-2zM25 2h2v1h-2zM21 3h2v1h-2zM25 3h2v1h-2zM21 4h2v1h-2zM25 4h2v1h-2zM21 5h5v1h-5zM21 6h2v1h-2zM21 7h2v1h-2zM21 8h2v1h-2zM28 0h5v1h-5zM28 1h2v1h-2zM32 1h2v1h-2zM28 2h2v1h-2zM32 2h2v1h-2zM28 3h2v1h-2zM32 3h2v1h-2zM28 4h2v1h-2zM32 4h2v1h-2zM28 5h2v1h-2zM32 5h2v1h-2zM28 6h2v1h-2zM32 6h2v1h-2zM28 7h2v1h-2zM32 7h2v1h-2zM28 8h5v1h-5zM36 0h4v1h-4zM35 1h2v1h-2zM39 1h2v1h-2zM35 2h2v1h-2zM39 2h2v1h-2zM35 3h2v1h-2zM39 3h2v1h-2zM35 4h2v1h-2zM39 4h2v1h-2zM35 5h2v1h-2zM39 5h2v1h-2zM35 6h2v1h-2zM39 6h2v1h-2zM35 7h2v1h-2zM39 7h2v1h-2zM36 8h4v1h-4zM42 0h2v1h-2zM45 0h2v1h-2zM48 0h2v1h-2zM42 1h2v1h-2zM45 1h2v1h-2zM48 1h2v1h-2zM42 2h2v1h-2zM45 2h2v1h-2zM48 2h2v1h-2zM42 3h2v1h-2zM45 3h2v1h-2zM48 3h2v1h-2zM42 4h2v1h-2zM45 4h2v1h-2zM48 4h2v1h-2zM42 5h2v1h-2zM45 5h2v1h-2zM48 5h2v1h-2zM42 6h2v1h-2zM45 6h2v1h-2zM48 6h2v1h-2zM42 7h2v1h-2zM45 7h2v1h-2zM48 7h2v1h-2zM43 8h2v1h-2zM47 8h2v1h-2zM51 0h2v1h-2zM55 0h2v1h-2zM51 1h3v1h-3zM55 1h2v1h-2zM51 2h2v1h-2zM54 2h3v1h-3zM51 3h2v1h-2zM55 3h2v1h-2zM51 4h2v1h-2zM55 4h2v1h-2zM51 5h2v1h-2zM55 5h2v1h-2zM51 6h2v1h-2zM55 6h2v1h-2zM51 7h2v1h-2zM55 7h2v1h-2zM51 8h2v1h-2zM55 8h2v1h-2zM59 0h4v1h-4zM58 1h2v1h-2zM62 1h2v1h-2zM58 2h2v1h-2zM62 2h2v1h-2zM58 3h2v1h-2zM61 3h2v1h-2zM58 4h2v1h-2zM62 4h2v1h-2zM58 5h2v1h-2zM62 5h2v1h-2zM58 6h2v1h-2zM62 6h2v1h-2zM58 7h2v1h-2zM62 7h2v1h-2zM58 8h5v1h-5zM66 0h4v1h-4zM65 1h2v1h-2zM69 1h2v1h-2zM65 2h2v1h-2zM69 2h2v1h-2zM65 3h2v1h-2zM69 3h2v1h-2zM65 4h2v1h-2zM69 4h2v1h-2zM65 5h2v1h-2zM69 5h2v1h-2zM65 6h2v1h-2zM69 6h2v1h-2zM65 7h2v1h-2zM69 7h2v1h-2zM66 8h4v1h-4zM72 0h2v1h-2zM76 0h2v1h-2zM72 1h2v1h-2zM76 1h2v1h-2zM73 2h4v1h-4zM74 3h2v1h-2zM73 4h4v1h-4zM72 5h2v1h-2zM76 5h2v1h-2zM72 6h2v1h-2zM76 6h2v1h-2zM72 7h2v1h-2zM76 7h2v1h-2zM72 8h2v1h-2zM76 8h2v1h-2z"/></svg>
<svg class="r" style="left:59px;top:334px" width="50" height="9" viewBox="0 0 50 9" shape-rendering="crispEdges"><path fill="#e59b5f" d="M0 0h6v1h-6zM2 1h2v1h-2zM2 2h2v1h-2zM2 3h2v1h-2zM2 4h2v1h-2zM2 5h2v1h-2zM2 6h2v1h-2zM2 7h2v1h-2zM2 8h2v1h-2zM8 0h4v1h-4zM7 1h2v1h-2zM11 1h2v1h-2zM7 2h2v1h-2zM11 2h2v1h-2zM7 3h2v1h-2zM11 3h2v1h-2zM8 4h2v1h-2zM7 5h2v1h-2zM11 5h2v1h-2zM7 6h2v1h-2zM11 6h2v1h-2zM7 7h2v1h-2zM11 7h2v1h-2zM8 8h4v1h-4zM14 0h2v1h-2zM18 0h2v1h-2zM14 1h2v1h-2zM18 1h2v1h-2zM15 2h4v1h-4zM16 3h2v1h-2zM15 4h4v1h-4zM14 5h2v1h-2zM18 5h2v1h-2zM14 6h2v1h-2zM18 6h2v1h-2zM14 7h2v1h-2zM18 7h2v1h-2zM14 8h2v1h-2zM18 8h2v1h-2zM21 0h6v1h-6zM23 1h2v1h-2zM23 2h2v1h-2zM23 3h2v1h-2zM23 4h2v1h-2zM23 5h2v1h-2zM23 6h2v1h-2zM23 7h2v1h-2zM23 8h2v1h-2zM29 0h4v1h-4zM28 1h2v1h-2zM32 1h2v1h-2zM28 2h2v1h-2zM32 2h2v1h-2zM28 3h2v1h-2zM31 3h2v1h-2zM28 4h2v1h-2zM32 4h2v1h-2zM28 5h2v1h-2zM32 5h2v1h-2zM28 6h2v1h-2zM32 6h2v1h-2zM28 7h2v1h-2zM32 7h2v1h-2zM28 8h5v1h-5zM36 0h4v1h-4zM35 1h2v1h-2zM39 1h2v1h-2zM35 2h2v1h-2zM39 2h2v1h-2zM35 3h2v1h-2zM39 3h2v1h-2zM35 4h2v1h-2zM39 4h2v1h-2zM35 5h2v1h-2zM39 5h2v1h-2zM35 6h2v1h-2zM39 6h2v1h-2zM35 7h2v1h-2zM39 7h2v1h-2zM36 8h4v1h-4zM42 0h2v1h-2zM46 0h2v1h-2zM42 1h2v1h-2zM46 1h2v1h-2zM43 2h4v1h-4zM44 3h2v1h-2zM43 4h4v1h-4zM42 5h2v1h-2zM46 5h2v1h-2zM42 6h2v1h-2zM46 6h2v1h-2zM42 7h2v1h-2zM46 7h2v1h-2zM42 8h2v1h-2zM46 8h2v1h-2z"/></svg>
<svg class="r" style="left:55px;top:364px" width="57" height="9" viewBox="0 0 57 9" shape-rendering="crispEdges"><path fill="#e59b5f" d="M0 0h2v1h-2zM4 0h2v1h-2zM0 1h2v1h-2zM4 1h2v1h-2zM0 2h2v1h-2zM4 2h2v1h-2zM0 3h2v1h-2zM4 3h2v1h-2zM0 4h2v1h-2zM4 4h2v1h-2zM0 5h2v1h-2zM4 5h2v1h-2zM0 6h2v1h-2zM4 6h2v1h-2zM1 7h4v1h-4zM2 8h2v1h-2zM8 0h4v1h-4zM7 1h2v1h-2zM11 1h2v1h-2zM7 2h2v1h-2zM11 2h2v1h-2zM7 3h2v1h-2zM10 3h3v1h-3zM7 4h2v1h-2zM11 4h2v1h-2zM7 5h2v1h-2zM11 5h2v1h-2zM7 6h2v1h-2zM11 6h2v1h-2zM7 7h2v1h-2zM11 7h2v1h-2zM7 8h2v1h-2zM11 8h2v1h-2zM14 0h2v1h-2zM14 1h2v1h-2zM14 2h2v1h-2zM14 3h2v1h-2zM14 4h2v1h-2zM14 5h2v1h-2zM18 5h2v1h-2zM14 6h2v1h-2zM18 6h2v1h-2zM14 7h2v1h-2zM18 7h2v1h-2zM15 8h4v1h-4zM21 0h2v1h-2zM25 0h2v1h-2zM21 1h2v1h-2zM25 1h2v1h-2zM21 2h2v1h-2zM25 2h2v1h-2zM21 3h2v1h-2zM25 3h2v1h-2zM21 4h2v1h-2zM25 4h2v1h-2zM21 5h2v1h-2zM25 5h2v1h-2zM21 6h2v1h-2zM25 6h2v1h-2zM21 7h2v1h-2zM25 7h2v1h-2zM22 8h4v1h-4zM29 0h4v1h-4zM28 1h2v1h-2zM32 1h2v1h-2zM28 2h2v1h-2zM32 2h2v1h-2zM28 3h2v1h-2zM32 3h2v1h-2zM29 4h2v1h-2zM28 5h2v1h-2zM32 5h2v1h-2zM28 6h2v1h-2zM32 6h2v1h-2zM28 7h2v1h-2zM32 7h2v1h-2zM29 8h4v1h-4zM36 0h4v1h-4zM35 1h2v1h-2zM39 1h2v1h-2zM35 2h2v1h-2zM39 2h2v1h-2zM35 3h2v1h-2zM38 3h2v1h-2zM35 4h2v1h-2zM39 4h2v1h-2zM35 5h2v1h-2zM39 5h2v1h-2zM35 6h2v1h-2zM39 6h2v1h-2zM35 7h2v1h-2zM39 7h2v1h-2zM35 8h5v1h-5zM43 0h4v1h-4zM42 1h2v1h-2zM46 1h2v1h-2zM42 2h2v1h-2zM46 2h2v1h-2zM42 3h2v1h-2zM46 3h2v1h-2zM42 4h2v1h-2zM46 4h2v1h-2zM42 5h2v1h-2zM46 5h2v1h-2zM42 6h2v1h-2zM46 6h2v1h-2zM42 7h2v1h-2zM46 7h2v1h-2zM43 8h4v1h-4zM49 0h2v1h-2zM53 0h2v1h-2zM49 1h2v1h-2zM53 1h2v1h-2zM50 2h4v1h-4zM51 3h2v1h-2zM50 4h4v1h-4zM49 5h2v1h-2zM53 5h2v1h-2zM49 6h2v1h-2zM53 6h2v1h-2zM49 7h2v1h-2zM53 7h2v1h-2zM49 8h2v1h-2zM53 8h2v1h-2z"/></svg>
<svg class="r" style="left:61px;top:394px" width="46" height="9" viewBox="0 0 46 9" shape-rendering="crispEdges"><path fill="#e59b5f" d="M1 0h4v1h-4zM0 1h2v1h-2zM4 1h2v1h-2zM0 2h2v1h-2zM0 3h2v1h-2zM1 4h4v1h-4zM4 5h2v1h-2zM0 6h2v1h-2zM4 6h2v1h-2zM0 7h2v1h-2zM4 7h2v1h-2zM1 8h4v1h-4zM7 0h5v1h-5zM7 1h2v1h-2zM11 1h2v1h-2zM7 2h2v1h-2zM11 2h2v1h-2zM7 3h2v1h-2zM11 3h2v1h-2zM7 4h2v1h-2zM11 4h2v1h-2zM7 5h5v1h-5zM7 6h2v1h-2zM7 7h2v1h-2zM7 8h2v1h-2zM14 0h2v1h-2zM14 1h2v1h-2zM14 2h2v1h-2zM14 3h2v1h-2zM14 4h2v1h-2zM14 5h2v1h-2zM14 6h2v1h-2zM14 7h2v1h-2zM14 8h2v1h-2zM17 0h2v1h-2zM21 0h2v1h-2zM17 1h3v1h-3zM21 1h2v1h-2zM17 2h2v1h-2zM20 2h3v1h-3zM17 3h2v1h-2zM21 3h2v1h-2zM17 4h2v1h-2zM21 4h2v1h-2zM17 5h2v1h-2zM21 5h2v1h-2zM17 6h2v1h-2zM21 6h2v1h-2zM17 7h2v1h-2zM21 7h2v1h-2zM17 8h2v1h-2zM21 8h2v1h-2zM24 0h2v1h-2zM28 0h2v1h-2zM24 1h3v1h-3zM28 1h2v1h-2zM24 2h2v1h-2zM27 2h3v1h-3zM24 3h2v1h-2zM28 3h2v1h-2zM24 4h2v1h-2zM28 4h2v1h-2zM24 5h2v1h-2zM28 5h2v1h-2zM24 6h2v1h-2zM28 6h2v1h-2zM24 7h2v1h-2zM28 7h2v1h-2zM24 8h2v1h-2zM28 8h2v1h-2zM32 0h4v1h-4zM31 1h2v1h-2zM35 1h2v1h-2zM31 2h2v1h-2zM35 2h2v1h-2zM31 3h2v1h-2zM35 3h2v1h-2zM32 4h2v1h-2zM31 5h2v1h-2zM35 5h2v1h-2zM31 6h2v1h-2zM35 6h2v1h-2zM31 7h2v1h-2zM35 7h2v1h-2zM32 8h4v1h-4zM38 0h5v1h-5zM38 1h2v1h-2zM42 1h2v1h-2zM38 2h2v1h-2zM42 2h2v1h-2zM38 3h2v1h-2zM41 3h2v1h-2zM38 4h2v1h-2zM42 4h2v1h-2zM38 5h2v1h-2zM42 5h2v1h-2zM38 6h2v1h-2zM42 6h2v1h-2zM38 7h2v1h-2zM42 7h2v1h-2zM38 8h2v1h-2zM42 8h2v1h-2z"/></svg>
<svg class="r" style="left:58px;top:424px" width="51" height="9" viewBox="0 0 51 9" shape-rendering="crispEdges"><path fill="#e59b5f" d="M0 0h2v1h-2zM0 1h2v1h-2zM0 2h2v1h-2zM0 3h2v1h-2zM0 4h2v1h-2zM0 5h2v1h-2zM4 5h2v1h-2zM0 6h2v1h-2zM4 6h2v1h-2zM0 7h2v1h-2zM4 7h2v1h-2zM1 8h4v1h-4zM7 0h2v1h-2zM7 1h2v1h-2zM7 2h2v1h-2zM7 3h2v1h-2zM7 4h2v1h-2zM7 5h2v1h-2zM7 6h2v1h-2zM7 7h2v1h-2zM7 8h2v1h-2zM11 0h4v1h-4zM10 1h2v1h-2zM14 1h2v1h-2zM10 2h2v1h-2zM10 3h2v1h-2zM11 4h4v1h-4zM14 5h2v1h-2zM10 6h2v1h-2zM14 6h2v1h-2zM10 7h2v1h-2zM14 7h2v1h-2zM11 8h4v1h-4zM17 0h6v1h-6zM19 1h2v1h-2zM19 2h2v1h-2zM19 3h2v1h-2zM19 4h2v1h-2zM19 5h2v1h-2zM19 6h2v1h-2zM19 7h2v1h-2zM19 8h2v1h-2zM24 0h2v1h-2zM28 0h2v1h-2zM24 1h2v1h-2zM28 1h2v1h-2zM24 2h2v1h-2zM28 2h2v1h-2zM24 3h2v1h-2zM28 3h2v1h-2zM24 4h2v1h-2zM28 4h2v1h-2zM24 5h2v1h-2zM28 5h2v1h-2zM24 6h2v1h-2zM28 6h2v1h-2zM25 7h4v1h-4zM26 8h2v1h-2zM31 0h2v1h-2zM31 1h2v1h-2zM31 2h2v1h-2zM31 3h2v1h-2zM31 4h2v1h-2zM31 5h2v1h-2zM31 6h2v1h-2zM31 7h2v1h-2zM31 8h2v1h-2zM35 0h4v1h-4zM34 1h2v1h-2zM38 1h2v1h-2zM34 2h2v1h-2zM38 2h2v1h-2zM34 3h2v1h-2zM38 3h2v1h-2zM35 4h2v1h-2zM34 5h2v1h-2zM38 5h2v1h-2zM34 6h2v1h-2zM38 6h2v1h-2zM34 7h2v1h-2zM38 7h2v1h-2zM35 8h4v1h-4zM41 0h2v1h-2zM44 0h2v1h-2zM47 0h2v1h-2zM41 1h2v1h-2zM44 1h2v1h-2zM47 1h2v1h-2zM41 2h2v1h-2zM44 2h2v1h-2zM47 2h2v1h-2zM41 3h2v1h-2zM44 3h2v1h-2zM47 3h2v1h-2zM41 4h2v1h-2zM44 4h2v1h-2zM47 4h2v1h-2zM41 5h2v1h-2zM44 5h2v1h-2zM47 5h2v1h-2zM41 6h2v1h-2zM44 6h2v1h-2zM47 6h2v1h-2zM41 7h2v1h-2zM44 7h2v1h-2zM47 7h2v1h-2zM42 8h2v1h-2zM46 8h2v1h-2z"/></svg>
<svg class="r" style="left:47px;top:454px" width="74" height="9" viewBox="0 0 74 9" shape-rendering="crispEdges"><path fill="#e59b5f" d="M1 0h4v1h-4zM0 1h2v1h-2zM4 1h2v1h-2zM0 2h2v1h-2zM4 2h2v1h-2zM0 3h2v1h-2zM4 3h2v1h-2zM0 4h2v1h-2zM0 5h2v1h-2zM4 5h2v1h-2zM0 6h2v1h-2zM4 6h2v1h-2zM0 7h2v1h-2zM4 7h2v1h-2zM1 8h4v1h-4zM8 0h4v1h-4zM7 1h2v1h-2zM11 1h2v1h-2zM7 2h2v1h-2zM11 2h2v1h-2zM7 3h2v1h-2zM11 3h2v1h-2zM7 4h2v1h-2zM11 4h2v1h-2zM7 5h2v1h-2zM11 5h2v1h-2zM7 6h2v1h-2zM11 6h2v1h-2zM7 7h2v1h-2zM11 7h2v1h-2zM8 8h4v1h-4zM14 0h2v1h-2zM14 1h2v1h-2zM14 2h2v1h-2zM14 3h2v1h-2zM14 4h2v1h-2zM14 5h2v1h-2zM18 5h2v1h-2zM14 6h2v1h-2zM18 6h2v1h-2zM14 7h2v1h-2zM18 7h2v1h-2zM15 8h4v1h-4zM22 0h4v1h-4zM21 1h2v1h-2zM25 1h2v1h-2zM21 2h2v1h-2zM25 2h2v1h-2zM21 3h2v1h-2zM25 3h2v1h-2zM21 4h2v1h-2zM25 4h2v1h-2zM21 5h2v1h-2zM25 5h2v1h-2zM21 6h2v1h-2zM25 6h2v1h-2zM21 7h2v1h-2zM25 7h2v1h-2zM22 8h4v1h-4zM28 0h5v1h-5zM28 1h2v1h-2zM32 1h2v1h-2zM28 2h2v1h-2zM32 2h2v1h-2zM28 3h2v1h-2zM31 3h2v1h-2zM28 4h2v1h-2zM32 4h2v1h-2zM28 5h2v1h-2zM32 5h2v1h-2zM28 6h2v1h-2zM32 6h2v1h-2zM28 7h2v1h-2zM32 7h2v1h-2zM28 8h2v1h-2zM32 8h2v1h-2zM35 0h5v1h-5zM35 1h2v1h-2zM39 1h2v1h-2zM35 2h2v1h-2zM39 2h2v1h-2zM35 3h2v1h-2zM39 3h2v1h-2zM35 4h2v1h-2zM39 4h2v1h-2zM35 5h5v1h-5zM35 6h2v1h-2zM35 7h2v1h-2zM35 8h2v1h-2zM42 0h2v1h-2zM42 1h2v1h-2zM42 2h2v1h-2zM42 3h2v1h-2zM42 4h2v1h-2zM42 5h2v1h-2zM42 6h2v1h-2zM42 7h2v1h-2zM42 8h2v1h-2zM46 0h4v1h-4zM45 1h2v1h-2zM49 1h2v1h-2zM45 2h2v1h-2zM49 2h2v1h-2zM45 3h2v1h-2zM49 3h2v1h-2zM45 4h2v1h-2zM45 5h2v1h-2zM49 5h2v1h-2zM45 6h2v1h-2zM49 6h2v1h-2zM45 7h2v1h-2zM49 7h2v1h-2zM46 8h4v1h-4zM52 0h2v1h-2zM56 0h2v1h-2zM52 1h2v1h-2zM55 1h2v1h-2zM52 2h2v1h-2zM55 2h1v1h-1zM52 3h4v1h-4zM52 4h2v1h-2zM55 4h2v1h-2zM52 5h2v1h-2zM56 5h2v1h-2zM52 6h2v1h-2zM56 6h2v1h-2zM52 7h2v1h-2zM56 7h2v1h-2zM52 8h2v1h-2zM56 8h2v1h-2zM60 0h4v1h-4zM59 1h2v1h-2zM63 1h2v1h-2zM59 2h2v1h-2zM63 2h2v1h-2zM59 3h2v1h-2zM63 3h2v1h-2zM60 4h2v1h-2zM59 5h2v1h-2zM63 5h2v1h-2zM59 6h2v1h-2zM63 6h2v1h-2zM59 7h2v1h-2zM63 7h2v1h-2zM60 8h4v1h-4zM66 0h5v1h-5zM66 1h2v1h-2zM70 1h2v1h-2zM66 2h2v1h-2zM70 2h2v1h-2zM66 3h2v1h-2zM69 3h2v1h-2zM66 4h2v1h-2zM70 4h2v1h-2zM66 5h2v1h-2zM70 5h2v1h-2zM66 6h2v1h-2zM70 6h2v1h-2zM66 7h2v1h-2zM70 7h2v1h-2zM66 8h2v1h-2zM70 8h2v1h-2z"/></svg>
<svg class="r" style="left:52px;top:484px" width="64" height="9" viewBox="0 0 64 9" shape-rendering="crispEdges"><path fill="#e59b5f" d="M1 0h4v1h-4zM0 1h2v1h-2zM4 1h2v1h-2zM0 2h2v1h-2zM0 3h2v1h-2zM1 4h4v1h-4zM4 5h2v1h-2zM0 6h2v1h-2zM4 6h2v1h-2zM0 7h2v1h-2zM4 7h2v1h-2zM1 8h4v1h-4zM8 0h4v1h-4zM7 1h2v1h-2zM11 1h2v1h-2zM7 2h2v1h-2zM11 2h2v1h-2zM7 3h2v1h-2zM11 3h2v1h-2zM7 4h2v1h-2zM7 5h2v1h-2zM11 5h2v1h-2zM7 6h2v1h-2zM11 6h2v1h-2zM7 7h2v1h-2zM11 7h2v1h-2zM8 8h4v1h-4zM14 0h5v1h-5zM14 1h2v1h-2zM18 1h2v1h-2zM14 2h2v1h-2zM18 2h2v1h-2zM14 3h2v1h-2zM17 3h2v1h-2zM14 4h2v1h-2zM18 4h2v1h-2zM14 5h2v1h-2zM18 5h2v1h-2zM14 6h2v1h-2zM18 6h2v1h-2zM14 7h2v1h-2zM18 7h2v1h-2zM14 8h2v1h-2zM18 8h2v1h-2zM22 0h4v1h-4zM21 1h2v1h-2zM25 1h2v1h-2zM21 2h2v1h-2zM25 2h2v1h-2zM21 3h2v1h-2zM25 3h2v1h-2zM21 4h2v1h-2zM25 4h2v1h-2zM21 5h2v1h-2zM25 5h2v1h-2zM21 6h2v1h-2zM25 6h2v1h-2zM21 7h2v1h-2zM25 7h2v1h-2zM22 8h4v1h-4zM28 0h2v1h-2zM28 1h2v1h-2zM28 2h2v1h-2zM28 3h2v1h-2zM28 4h2v1h-2zM28 5h2v1h-2zM32 5h2v1h-2zM28 6h2v1h-2zM32 6h2v1h-2zM28 7h2v1h-2zM32 7h2v1h-2zM29 8h4v1h-4zM35 0h2v1h-2zM35 1h2v1h-2zM35 2h2v1h-2zM35 3h2v1h-2zM35 4h2v1h-2zM35 5h2v1h-2zM39 5h2v1h-2zM35 6h2v1h-2zM39 6h2v1h-2zM35 7h2v1h-2zM39 7h2v1h-2zM36 8h4v1h-4zM43 0h4v1h-4zM42 1h2v1h-2zM46 1h2v1h-2zM42 2h2v1h-2zM46 2h2v1h-2zM42 3h2v1h-2zM45 3h2v1h-2zM42 4h2v1h-2zM46 4h2v1h-2zM42 5h2v1h-2zM46 5h2v1h-2zM42 6h2v1h-2zM46 6h2v1h-2zM42 7h2v1h-2zM46 7h2v1h-2zM42 8h5v1h-5zM50 0h4v1h-4zM49 1h2v1h-2zM53 1h2v1h-2zM49 2h2v1h-2zM53 2h2v1h-2zM49 3h2v1h-2zM52 3h3v1h-3zM49 4h2v1h-2zM53 4h2v1h-2zM49 5h2v1h-2zM53 5h2v1h-2zM49 6h2v1h-2zM53 6h2v1h-2zM49 7h2v1h-2zM53 7h2v1h-2zM49 8h2v1h-2zM53 8h2v1h-2zM56 0h5v1h-5zM56 1h2v1h-2zM60 1h2v1h-2zM56 2h2v1h-2zM60 2h2v1h-2zM56 3h2v1h-2zM59 3h2v1h-2zM56 4h2v1h-2zM60 4h2v1h-2zM56 5h2v1h-2zM60 5h2v1h-2zM56 6h2v1h-2zM60 6h2v1h-2zM56 7h2v1h-2zM60 7h2v1h-2zM56 8h2v1h-2zM60 8h2v1h-2z"/></svg>
<svg class="r" style="left:52px;top:514px" width="64" height="9" viewBox="0 0 64 9" shape-rendering="crispEdges"><path fill="#e59b5f" d="M1 0h4v1h-4zM0 1h2v1h-2zM4 1h2v1h-2zM0 2h2v1h-2zM0 3h2v1h-2zM1 4h4v1h-4zM4 5h2v1h-2zM0 6h2v1h-2zM4 6h2v1h-2zM0 7h2v1h-2zM4 7h2v1h-2zM1 8h4v1h-4zM7 0h6v1h-6zM9 1h2v1h-2zM9 2h2v1h-2zM9 3h2v1h-2zM9 4h2v1h-2zM9 5h2v1h-2zM9 6h2v1h-2zM9 7h2v1h-2zM9 8h2v1h-2zM15 0h4v1h-4zM14 1h2v1h-2zM18 1h2v1h-2zM14 2h2v1h-2zM18 2h2v1h-2zM14 3h2v1h-2zM17 3h3v1h-3zM14 4h2v1h-2zM18 4h2v1h-2zM14 5h2v1h-2zM18 5h2v1h-2zM14 6h2v1h-2zM18 6h2v1h-2zM14 7h2v1h-2zM18 7h2v1h-2zM14 8h2v1h-2zM18 8h2v1h-2zM21 0h6v1h-6zM23 1h2v1h-2zM23 2h2v1h-2zM23 3h2v1h-2zM23 4h2v1h-2zM23 5h2v1h-2zM23 6h2v1h-2zM23 7h2v1h-2zM23 8h2v1h-2zM28 0h2v1h-2zM32 0h2v1h-2zM28 1h2v1h-2zM32 1h2v1h-2zM28 2h2v1h-2zM32 2h2v1h-2zM28 3h2v1h-2zM32 3h2v1h-2zM28 4h2v1h-2zM32 4h2v1h-2zM28 5h2v1h-2zM32 5h2v1h-2zM28 6h2v1h-2zM32 6h2v1h-2zM28 7h2v1h-2zM32 7h2v1h-2zM29 8h4v1h-4zM36 0h4v1h-4zM35 1h2v1h-2zM39 1h2v1h-2zM35 2h2v1h-2zM35 3h2v1h-2zM36 4h4v1h-4zM39 5h2v1h-2zM35 6h2v1h-2zM39 6h2v1h-2zM35 7h2v1h-2zM39 7h2v1h-2zM36 8h4v1h-4zM43 0h4v1h-4zM42 1h2v1h-2zM46 1h2v1h-2zM42 2h2v1h-2zM46 2h2v1h-2zM42 3h2v1h-2zM45 3h2v1h-2zM42 4h2v1h-2zM46 4h2v1h-2zM42 5h2v1h-2zM46 5h2v1h-2zM42 6h2v1h-2zM46 6h2v1h-2zM42 7h2v1h-2zM46 7h2v1h-2zM42 8h5v1h-5zM50 0h4v1h-4zM49 1h2v1h-2zM53 1h2v1h-2zM49 2h2v1h-2zM53 2h2v1h-2zM49 3h2v1h-2zM52 3h3v1h-3zM49 4h2v1h-2zM53 4h2v1h-2zM49 5h2v1h-2zM53 5h2v1h-2zM49 6h2v1h-2zM53 6h2v1h-2zM49 7h2v1h-2zM53 7h2v1h-2zM49 8h2v1h-2zM53 8h2v1h-2zM56 0h5v1h-5zM56 1h2v1h-2zM60 1h2v1h-2zM56 2h2v1h-2zM60 2h2v1h-2zM56 3h2v1h-2zM59 3h2v1h-2zM56 4h2v1h-2zM60 4h2v1h-2zM56 5h2v1h-2zM60 5h2v1h-2zM56 6h2v1h-2zM60 6h2v1h-2zM56 7h2v1h-2zM60 7h2v1h-2zM56 8h2v1h-2zM60 8h2v1h-2z"/></svg>
<svg class="r" style="left:185px;top:64px" width="136" height="9" viewBox="0 0 136 9" shape-rendering="crispEdges"><path fill="#e59b5f" d="M1 0h4v1h-4zM0 1h2v1h-2zM4 1h2v1h-2zM0 2h2v1h-2zM4 2h2v1h-2zM0 3h2v1h-2zM3 3h2v1h-2zM0 4h2v1h-2zM4 4h2v1h-2zM0 5h2v1h-2zM4 5h2v1h-2zM0 6h2v1h-2zM4 6h2v1h-2zM0 7h2v1h-2zM4 7h2v1h-2zM0 8h5v1h-5zM8 0h4v1h-4zM7 1h2v1h-2zM11 1h2v1h-2zM7 2h2v1h-2zM11 2h2v1h-2zM7 3h2v1h-2zM11 3h2v1h-2zM7 4h2v1h-2zM11 4h2v1h-2zM7 5h2v1h-2zM11 5h2v1h-2zM7 6h2v1h-2zM11 6h2v1h-2zM7 7h2v1h-2zM11 7h2v1h-2zM8 8h4v1h-4zM14 0h5v1h-5zM14 1h2v1h-2zM18 1h2v1h-2zM14 2h2v1h-2zM18 2h2v1h-2zM14 3h2v1h-2zM17 3h2v1h-2zM14 4h2v1h-2zM18 4h2v1h-2zM14 5h2v1h-2zM18 5h2v1h-2zM14 6h2v1h-2zM18 6h2v1h-2zM14 7h2v1h-2zM18 7h2v1h-2zM14 8h2v1h-2zM18 8h2v1h-2zM21 0h5v1h-5zM21 1h2v1h-2zM25 1h2v1h-2zM21 2h2v1h-2zM25 2h2v1h-2zM21 3h2v1h-2zM25 3h2v1h-2zM21 4h2v1h-2zM25 4h2v1h-2zM21 5h2v1h-2zM25 5h2v1h-2zM21 6h2v1h-2zM25 6h2v1h-2zM21 7h2v1h-2zM25 7h2v1h-2zM21 8h5v1h-5zM29 0h4v1h-4zM28 1h2v1h-2zM32 1h2v1h-2zM28 2h2v1h-2zM32 2h2v1h-2zM28 3h2v1h-2zM32 3h2v1h-2zM29 4h2v1h-2zM28 5h2v1h-2zM32 5h2v1h-2zM28 6h2v1h-2zM32 6h2v1h-2zM28 7h2v1h-2zM32 7h2v1h-2zM29 8h4v1h-4zM35 0h5v1h-5zM35 1h2v1h-2zM39 1h2v1h-2zM35 2h2v1h-2zM39 2h2v1h-2zM35 3h2v1h-2zM38 3h2v1h-2zM35 4h2v1h-2zM39 4h2v1h-2zM35 5h2v1h-2zM39 5h2v1h-2zM35 6h2v1h-2zM39 6h2v1h-2zM35 7h2v1h-2zM39 7h2v1h-2zM35 8h2v1h-2zM39 8h2v1h-2zM42 8h6v1h-6zM50 0h4v1h-4zM49 1h2v1h-2zM53 1h2v1h-2zM49 2h2v1h-2zM53 2h2v1h-2zM49 3h2v1h-2zM53 3h2v1h-2zM49 4h2v1h-2zM49 5h2v1h-2zM53 5h2v1h-2zM49 6h2v1h-2zM53 6h2v1h-2zM49 7h2v1h-2zM53 7h2v1h-2zM50 8h4v1h-4zM57 0h4v1h-4zM56 1h2v1h-2zM60 1h2v1h-2zM56 2h2v1h-2zM60 2h2v1h-2zM56 3h2v1h-2zM60 3h2v1h-2zM56 4h2v1h-2zM60 4h2v1h-2zM56 5h2v1h-2zM60 5h2v1h-2zM56 6h2v1h-2zM60 6h2v1h-2zM56 7h2v1h-2zM60 7h2v1h-2zM57 8h4v1h-4zM63 0h2v1h-2zM63 1h2v1h-2zM63 2h2v1h-2zM63 3h2v1h-2zM63 4h2v1h-2zM63 5h2v1h-2zM67 5h2v1h-2zM63 6h2v1h-2zM67 6h2v1h-2zM63 7h2v1h-2zM67 7h2v1h-2zM64 8h4v1h-4zM71 0h4v1h-4zM70 1h2v1h-2zM74 1h2v1h-2zM70 2h2v1h-2zM74 2h2v1h-2zM70 3h2v1h-2zM74 3h2v1h-2zM70 4h2v1h-2zM74 4h2v1h-2zM70 5h2v1h-2zM74 5h2v1h-2zM70 6h2v1h-2zM74 6h2v1h-2zM70 7h2v1h-2zM74 7h2v1h-2zM71 8h4v1h-4zM77 0h5v1h-5zM77 1h2v1h-2zM81 1h2v1h-2zM77 2h2v1h-2zM81 2h2v1h-2zM77 3h2v1h-2zM80 3h2v1h-2zM77 4h2v1h-2zM81 4h2v1h-2zM77 5h2v1h-2zM81 5h2v1h-2zM77 6h2v1h-2zM81 6h2v1h-2zM77 7h2v1h-2zM81 7h2v1h-2zM77 8h2v1h-2zM81 8h2v1h-2zM84 8h6v1h-6zM91 0h2v1h-2zM95 0h2v1h-2zM91 1h3v1h-3zM95 1h2v1h-2zM91 2h2v1h-2zM94 2h3v1h-3zM91 3h2v1h-2zM95 3h2v1h-2zM91 4h2v1h-2zM95 4h2v1h-2zM91 5h2v1h-2zM95 5h2v1h-2zM91 6h2v1h-2zM95 6h2v1h-2zM91 7h2v1h-2zM95 7h2v1h-2zM91 8h2v1h-2zM95 8h2v1h-2zM99 0h4v1h-4zM98 1h2v1h-2zM102 1h2v1h-2zM98 2h2v1h-2zM102 2h2v1h-2zM98 3h2v1h-2zM102 3h2v1h-2zM98 4h2v1h-2zM102 4h2v1h-2zM98 5h2v1h-2zM102 5h2v1h-2zM98 6h2v1h-2zM102 6h2v1h-2zM98 7h2v1h-2zM102 7h2v1h-2zM99 8h4v1h-4zM105 0h5v1h-5zM105 1h2v1h-2zM109 1h2v1h-2zM105 2h2v1h-2zM109 2h2v1h-2zM105 3h2v1h-2zM108 3h2v1h-2zM105 4h2v1h-2zM109 4h2v1h-2zM105 5h2v1h-2zM109 5h2v1h-2zM105 6h2v1h-2zM109 6h2v1h-2zM105 7h2v1h-2zM109 7h2v1h-2zM105 8h2v1h-2zM109 8h2v1h-2zM112 0h3v1h-3zM117 0h3v1h-3zM112 1h2v1h-2zM115 1h2v1h-2zM118 1h2v1h-2zM112 2h2v1h-2zM115 2h2v1h-2zM118 2h2v1h-2zM112 3h2v1h-2zM115 3h2v1h-2zM118 3h2v1h-2zM112 4h2v1h-2zM115 4h2v1h-2zM118 4h2v1h-2zM112 5h2v1h-2zM115 5h2v1h-2zM118 5h2v1h-2zM112 6h2v1h-2zM115 6h2v1h-2zM118 6h2v1h-2zM112 7h2v1h-2zM115 7h2v1h-2zM118 7h2v1h-2zM112 8h2v1h-2zM115 8h2v1h-2zM118 8h2v1h-2zM122 0h4v1h-4zM121 1h2v1h-2zM125 1h2v1h-2zM121 2h2v1h-2zM125 2h2v1h-2zM121 3h2v1h-2zM124 3h3v1h-3zM121 4h2v1h-2zM125 4h2v1h-2zM121 5h2v1h-2zM125 5h2v1h-2zM121 6h2v1h-2zM125 6h2v1h-2zM121 7h2v1h-2zM125 7h2v1h-2zM121 8h2v1h-2zM125 8h2v1h-2zM128 0h2v1h-2zM128 1h2v1h-2zM128 2h2v1h-2zM128 3h2v1h-2zM128 4h2v1h-2zM128 5h2v1h-2zM132 5h2v1h-2zM128 6h2v1h-2zM132 6h2v1h-2zM128 7h2v1h-2zM132 7h2v1h-2zM129 8h4v1h-4z"/></svg>
<svg class="r" style="left:192px;top:94px" width="122" height="9" viewBox="0 0 122 9" shape-rendering="crispEdges"><path fill="#e59b5f" d="M1 0h4v1h-4zM0 1h2v1h-2zM4 1h2v1h-2zM0 2h2v1h-2zM4 2h2v1h-2zM0 3h2v1h-2zM3 3h2v1h-2zM0 4h2v1h-2zM4 4h2v1h-2zM0 5h2v1h-2zM4 5h2v1h-2zM0 6h2v1h-2zM4 6h2v1h-2zM0 7h2v1h-2zM4 7h2v1h-2zM0 8h5v1h-5zM8 0h4v1h-4zM7 1h2v1h-2zM11 1h2v1h-2zM7 2h2v1h-2zM11 2h2v1h-2zM7 3h2v1h-2zM10 3h3v1h-3zM7 4h2v1h-2zM11 4h2v1h-2zM7 5h2v1h-2zM11 5h2v1h-2zM7 6h2v1h-2zM11 6h2v1h-2zM7 7h2v1h-2zM11 7h2v1h-2zM7 8h2v1h-2zM11 8h2v1h-2zM15 0h4v1h-4zM14 1h2v1h-2zM18 1h2v1h-2zM14 2h2v1h-2zM14 3h2v1h-2zM15 4h4v1h-4zM18 5h2v1h-2zM14 6h2v1h-2zM18 6h2v1h-2zM14 7h2v1h-2zM18 7h2v1h-2zM15 8h4v1h-4zM22 0h4v1h-4zM21 1h2v1h-2zM25 1h2v1h-2zM21 2h2v1h-2zM25 2h2v1h-2zM21 3h2v1h-2zM25 3h2v1h-2zM22 4h2v1h-2zM21 5h2v1h-2zM25 5h2v1h-2zM21 6h2v1h-2zM25 6h2v1h-2zM21 7h2v1h-2zM25 7h2v1h-2zM22 8h4v1h-4zM28 8h6v1h-6zM36 0h4v1h-4zM35 1h2v1h-2zM39 1h2v1h-2zM35 2h2v1h-2zM39 2h2v1h-2zM35 3h2v1h-2zM39 3h2v1h-2zM35 4h2v1h-2zM35 5h2v1h-2zM39 5h2v1h-2zM35 6h2v1h-2zM39 6h2v1h-2zM35 7h2v1h-2zM39 7h2v1h-2zM36 8h4v1h-4zM43 0h4v1h-4zM42 1h2v1h-2zM46 1h2v1h-2zM42 2h2v1h-2zM46 2h2v1h-2zM42 3h2v1h-2zM46 3h2v1h-2zM42 4h2v1h-2zM46 4h2v1h-2zM42 5h2v1h-2zM46 5h2v1h-2zM42 6h2v1h-2zM46 6h2v1h-2zM42 7h2v1h-2zM46 7h2v1h-2zM43 8h4v1h-4zM49 0h2v1h-2zM49 1h2v1h-2zM49 2h2v1h-2zM49 3h2v1h-2zM49 4h2v1h-2zM49 5h2v1h-2zM53 5h2v1h-2zM49 6h2v1h-2zM53 6h2v1h-2zM49 7h2v1h-2zM53 7h2v1h-2zM50 8h4v1h-4zM57 0h4v1h-4zM56 1h2v1h-2zM60 1h2v1h-2zM56 2h2v1h-2zM60 2h2v1h-2zM56 3h2v1h-2zM60 3h2v1h-2zM56 4h2v1h-2zM60 4h2v1h-2zM56 5h2v1h-2zM60 5h2v1h-2zM56 6h2v1h-2zM60 6h2v1h-2zM56 7h2v1h-2zM60 7h2v1h-2zM57 8h4v1h-4zM63 0h5v1h-5zM63 1h2v1h-2zM67 1h2v1h-2zM63 2h2v1h-2zM67 2h2v1h-2zM63 3h2v1h-2zM66 3h2v1h-2zM63 4h2v1h-2zM67 4h2v1h-2zM63 5h2v1h-2zM67 5h2v1h-2zM63 6h2v1h-2zM67 6h2v1h-2zM63 7h2v1h-2zM67 7h2v1h-2zM63 8h2v1h-2zM67 8h2v1h-2zM70 8h6v1h-6zM77 0h2v1h-2zM81 0h2v1h-2zM77 1h3v1h-3zM81 1h2v1h-2zM77 2h2v1h-2zM80 2h3v1h-3zM77 3h2v1h-2zM81 3h2v1h-2zM77 4h2v1h-2zM81 4h2v1h-2zM77 5h2v1h-2zM81 5h2v1h-2zM77 6h2v1h-2zM81 6h2v1h-2zM77 7h2v1h-2zM81 7h2v1h-2zM77 8h2v1h-2zM81 8h2v1h-2zM85 0h4v1h-4zM84 1h2v1h-2zM88 1h2v1h-2zM84 2h2v1h-2zM88 2h2v1h-2zM84 3h2v1h-2zM88 3h2v1h-2zM84 4h2v1h-2zM88 4h2v1h-2zM84 5h2v1h-2zM88 5h2v1h-2zM84 6h2v1h-2zM88 6h2v1h-2zM84 7h2v1h-2zM88 7h2v1h-2zM85 8h4v1h-4zM91 0h5v1h-5zM91 1h2v1h-2zM95 1h2v1h-2zM91 2h2v1h-2zM95 2h2v1h-2zM91 3h2v1h-2zM94 3h2v1h-2zM91 4h2v1h-2zM95 4h2v1h-2zM91 5h2v1h-2zM95 5h2v1h-2zM91 6h2v1h-2zM95 6h2v1h-2zM91 7h2v1h-2zM95 7h2v1h-2zM91 8h2v1h-2zM95 8h2v1h-2zM98 0h3v1h-3zM103 0h3v1h-3zM98 1h2v1h-2zM101 1h2v1h-2zM104 1h2v1h-2zM98 2h2v1h-2zM101 2h2v1h-2zM104 2h2v1h-2zM98 3h2v1h-2zM101 3h2v1h-2zM104 3h2v1h-2zM98 4h2v1h-2zM101 4h2v1h-2zM104 4h2v1h-2zM98 5h2v1h-2zM101 5h2v1h-2zM104 5h2v1h-2zM98 6h2v1h-2zM101 6h2v1h-2zM104 6h2v1h-2zM98 7h2v1h-2zM101 7h2v1h-2zM104 7h2v1h-2zM98 8h2v1h-2zM101 8h2v1h-2zM104 8h2v1h-2zM108 0h4v1h-4zM107 1h2v1h-2zM111 1h2v1h-2zM107 2h2v1h-2zM111 2h2v1h-2zM107 3h2v1h-2zM110 3h3v1h-3zM107 4h2v1h-2zM111 4h2v1h-2zM107 5h2v1h-2zM111 5h2v1h-2zM107 6h2v1h-2zM111 6h2v1h-2zM107 7h2v1h-2zM111 7h2v1h-2zM107 8h2v1h-2zM111 8h2v1h-2zM114 0h2v1h-2zM114 1h2v1h-2zM114 2h2v1h-2zM114 3h2v1h-2zM114 4h2v1h-2zM114 5h2v1h-2zM118 5h2v1h-2zM114 6h2v1h-2zM118 6h2v1h-2zM114 7h2v1h-2zM118 7h2v1h-2zM115 8h4v1h-4z"/></svg>
<svg class="r" style="left:192px;top:124px" width="122" height="9" viewBox="0 0 122 9" shape-rendering="crispEdges"><path fill="#e59b5f" d="M0 0h6v1h-6zM2 1h2v1h-2zM2 2h2v1h-2zM2 3h2v1h-2zM2 4h2v1h-2zM2 5h2v1h-2zM2 6h2v1h-2zM2 7h2v1h-2zM2 8h2v1h-2zM8 0h4v1h-4zM7 1h2v1h-2zM11 1h2v1h-2zM7 2h2v1h-2zM11 2h2v1h-2zM7 3h2v1h-2zM11 3h2v1h-2zM8 4h2v1h-2zM7 5h2v1h-2zM11 5h2v1h-2zM7 6h2v1h-2zM11 6h2v1h-2zM7 7h2v1h-2zM11 7h2v1h-2zM8 8h4v1h-4zM14 0h2v1h-2zM18 0h2v1h-2zM14 1h2v1h-2zM18 1h2v1h-2zM15 2h4v1h-4zM16 3h2v1h-2zM15 4h4v1h-4zM14 5h2v1h-2zM18 5h2v1h-2zM14 6h2v1h-2zM18 6h2v1h-2zM14 7h2v1h-2zM18 7h2v1h-2zM14 8h2v1h-2zM18 8h2v1h-2zM21 0h6v1h-6zM23 1h2v1h-2zM23 2h2v1h-2zM23 3h2v1h-2zM23 4h2v1h-2zM23 5h2v1h-2zM23 6h2v1h-2zM23 7h2v1h-2zM23 8h2v1h-2zM28 8h6v1h-6zM36 0h4v1h-4zM35 1h2v1h-2zM39 1h2v1h-2zM35 2h2v1h-2zM39 2h2v1h-2zM35 3h2v1h-2zM39 3h2v1h-2zM35 4h2v1h-2zM35 5h2v1h-2zM39 5h2v1h-2zM35 6h2v1h-2zM39 6h2v1h-2zM35 7h2v1h-2zM39 7h2v1h-2zM36 8h4v1h-4zM43 0h4v1h-4zM42 1h2v1h-2zM46 1h2v1h-2zM42 2h2v1h-2zM46 2h2v1h-2zM42 3h2v1h-2zM46 3h2v1h-2zM42 4h2v1h-2zM46 4h2v1h-2zM42 5h2v1h-2zM46 5h2v1h-2zM42 6h2v1h-2zM46 6h2v1h-2zM42 7h2v1h-2zM46 7h2v1h-2zM43 8h4v1h-4zM49 0h2v1h-2zM49 1h2v1h-2zM49 2h2v1h-2zM49 3h2v1h-2zM49 4h2v1h-2zM49 5h2v1h-2zM53 5h2v1h-2zM49 6h2v1h-2zM53 6h2v1h-2zM49 7h2v1h-2zM53 7h2v1h-2zM50 8h4v1h-4zM57 0h4v1h-4zM56 1h2v1h-2zM60 1h2v1h-2zM56 2h2v1h-2zM60 2h2v1h-2zM56 3h2v1h-2zM60 3h2v1h-2zM56 4h2v1h-2zM60 4h2v1h-2zM56 5h2v1h-2zM60 5h2v1h-2zM56 6h2v1h-2zM60 6h2v1h-2zM56 7h2v1h-2zM60 7h2v1h-2zM57 8h4v1h-4zM63 0h5v1h-5zM63 1h2v1h-2zM67 1h2v1h-2zM63 2h2v1h-2zM67 2h2v1h-2zM63 3h2v1h-2zM66 3h2v1h-2zM63 4h2v1h-2zM67 4h2v1h-2zM63 5h2v1h-2zM67 5h2v1h-2zM63 6h2v1h-2zM67 6h2v1h-2zM63 7h2v1h-2zM67 7h2v1h-2zM63 8h2v1h-2zM67 8h2v1h-2zM70 8h6v1h-6zM77 0h2v1h-2zM81 0h2v1h-2zM77 1h3v1h-3zM81 1h2v1h-2zM77 2h2v1h-2zM80 2h3v1h-3zM77 3h2v1h-2zM81 3h2v1h-2zM77 4h2v1h-2zM81 4h2v1h-2zM77 5h2v1h-2zM81 5h2v1h-2zM77 6h2v1h-2zM81 6h2v1h-2zM77 7h2v1h-2zM81 7h2v1h-2zM77 8h2v1h-2zM81 8h2v1h-2zM85 0h4v1h-4zM84 1h2v1h-2zM88 1h2v1h-2zM84 2h2v1h-2zM88 2h2v1h-2zM84 3h2v1h-2zM88 3h2v1h-2zM84 4h2v1h-2zM88 4h2v1h-2zM84 5h2v1h-2zM88 5h2v1h-2zM84 6h2v1h-2zM88 6h2v1h-2zM84 7h2v1h-2zM88 7h2v1h-2zM85 8h4v1h-4zM91 0h5v1h-5zM91 1h2v1h-2zM95 1h2v1h-2zM91 2h2v1h-2zM95 2h2v1h-2zM91 3h2v1h-2zM94 3h2v1h-2zM91 4h2v1h-2zM95 4h2v1h-2zM91 5h2v1h-2zM95 5h2v1h-2zM91 6h2v1h-2zM95 6h2v1h-2zM91 7h2v1h-2zM95 7h2v1h-2zM91 8h2v1h-2zM95 8h2v1h-2zM98 0h3v1h-3zM103 0h3v1h-3zM98 1h2v1h-2zM101 1h2v1h-2zM104 1h2v1h-2zM98 2h2v1h-2zM101 2h2v1h-2zM104 2h2v1h-2zM98 3h2v1h-2zM101 3h2v1h-2zM104 3h2v1h-2zM98 4h2v1h-2zM101 4h2v1h-2zM104 4h2v1h-2zM98 5h2v1h-2zM101 5h2v1h-2zM104 5h2v1h-2zM98 6h2v1h-2zM101 6h2v1h-2zM104 6h2v1h-2zM98 7h2v1h-2zM101 7h2v1h-2zM104 7h2v1h-2zM98 8h2v1h-2zM101 8h2v1h-2zM104 8h2v1h-2zM108 0h4v1h-4zM107 1h2v1h-2zM111 1h2v1h-2zM107 2h2v1h-2zM111 2h2v1h-2zM107 3h2v1h-2zM110 3h3v1h-3zM107 4h2v1h-2zM111 4h2v1h-2zM107 5h2v1h-2zM111 5h2v1h-2zM107 6h2v1h-2zM111 6h2v1h-2zM107 7h2v1h-2zM111 7h2v1h-2zM107 8h2v1h-2zM111 8h2v1h-2zM114 0h2v1h-2zM114 1h2v1h-2zM114 2h2v1h-2zM114 3h2v1h-2zM114 4h2v1h-2zM114 5h2v1h-2zM118 5h2v1h-2zM114 6h2v1h-2zM118 6h2v1h-2zM114 7h2v1h-2zM118 7h2v1h-2zM115 8h4v1h-4z"/></svg>
<svg class="r" style="left:182px;top:154px" width="141" height="9" viewBox="0 0 141 9" shape-rendering="crispEdges"><path fill="#bd4a4a" d="M1 0h4v1h-4zM0 1h2v1h-2zM4 1h2v1h-2zM0 2h2v1h-2zM4 2h2v1h-2zM0 3h2v1h-2zM3 3h2v1h-2zM0 4h2v1h-2zM4 4h2v1h-2zM0 5h2v1h-2zM4 5h2v1h-2zM0 6h2v1h-2zM4 6h2v1h-2zM0 7h2v1h-2zM4 7h2v1h-2zM0 8h5v1h-5zM8 0h4v1h-4zM7 1h2v1h-2zM11 1h2v1h-2zM7 2h2v1h-2zM11 2h2v1h-2zM7 3h2v1h-2zM11 3h2v1h-2zM7 4h2v1h-2zM11 4h2v1h-2zM7 5h2v1h-2zM11 5h2v1h-2zM7 6h2v1h-2zM11 6h2v1h-2zM7 7h2v1h-2zM11 7h2v1h-2zM8 8h4v1h-4zM14 0h5v1h-5zM14 1h2v1h-2zM18 1h2v1h-2zM14 2h2v1h-2zM18 2h2v1h-2zM14 3h2v1h-2zM17 3h2v1h-2zM14 4h2v1h-2zM18 4h2v1h-2zM14 5h2v1h-2zM18 5h2v1h-2zM14 6h2v1h-2zM18 6h2v1h-2zM14 7h2v1h-2zM18 7h2v1h-2zM14 8h2v1h-2zM18 8h2v1h-2zM21 0h5v1h-5zM21 1h2v1h-2zM25 1h2v1h-2zM21 2h2v1h-2zM25 2h2v1h-2zM21 3h2v1h-2zM25 3h2v1h-2zM21 4h2v1h-2zM25 4h2v1h-2zM21 5h2v1h-2zM25 5h2v1h-2zM21 6h2v1h-2zM25 6h2v1h-2zM21 7h2v1h-2zM25 7h2v1h-2zM21 8h5v1h-5zM29 0h4v1h-4zM28 1h2v1h-2zM32 1h2v1h-2zM28 2h2v1h-2zM32 2h2v1h-2zM28 3h2v1h-2zM32 3h2v1h-2zM29 4h2v1h-2zM28 5h2v1h-2zM32 5h2v1h-2zM28 6h2v1h-2zM32 6h2v1h-2zM28 7h2v1h-2zM32 7h2v1h-2zM29 8h4v1h-4zM35 0h5v1h-5zM35 1h2v1h-2zM39 1h2v1h-2zM35 2h2v1h-2zM39 2h2v1h-2zM35 3h2v1h-2zM38 3h2v1h-2zM35 4h2v1h-2zM39 4h2v1h-2zM35 5h2v1h-2zM39 5h2v1h-2zM35 6h2v1h-2zM39 6h2v1h-2zM35 7h2v1h-2zM39 7h2v1h-2zM35 8h2v1h-2zM39 8h2v1h-2zM42 8h6v1h-6zM50 0h4v1h-4zM49 1h2v1h-2zM53 1h2v1h-2zM49 2h2v1h-2zM53 2h2v1h-2zM49 3h2v1h-2zM53 3h2v1h-2zM49 4h2v1h-2zM49 5h2v1h-2zM53 5h2v1h-2zM49 6h2v1h-2zM53 6h2v1h-2zM49 7h2v1h-2zM53 7h2v1h-2zM50 8h4v1h-4zM57 0h4v1h-4zM56 1h2v1h-2zM60 1h2v1h-2zM56 2h2v1h-2zM60 2h2v1h-2zM56 3h2v1h-2zM60 3h2v1h-2zM56 4h2v1h-2zM60 4h2v1h-2zM56 5h2v1h-2zM60 5h2v1h-2zM56 6h2v1h-2zM60 6h2v1h-2zM56 7h2v1h-2zM60 7h2v1h-2zM57 8h4v1h-4zM63 0h2v1h-2zM63 1h2v1h-2zM63 2h2v1h-2zM63 3h2v1h-2zM63 4h2v1h-2zM63 5h2v1h-2zM67 5h2v1h-2zM63 6h2v1h-2zM67 6h2v1h-2zM63 7h2v1h-2zM67 7h2v1h-2zM64 8h4v1h-4zM71 0h4v1h-4zM70 1h2v1h-2zM74 1h2v1h-2zM70 2h2v1h-2zM74 2h2v1h-2zM70 3h2v1h-2zM74 3h2v1h-2zM70 4h2v1h-2zM74 4h2v1h-2zM70 5h2v1h-2zM74 5h2v1h-2zM70 6h2v1h-2zM74 6h2v1h-2zM70 7h2v1h-2zM74 7h2v1h-2zM71 8h4v1h-4zM77 0h5v1h-5zM77 1h2v1h-2zM81 1h2v1h-2zM77 2h2v1h-2zM81 2h2v1h-2zM77 3h2v1h-2zM80 3h2v1h-2zM77 4h2v1h-2zM81 4h2v1h-2zM77 5h2v1h-2zM81 5h2v1h-2zM77 6h2v1h-2zM81 6h2v1h-2zM77 7h2v1h-2zM81 7h2v1h-2zM77 8h2v1h-2zM81 8h2v1h-2zM84 8h6v1h-6zM92 0h4v1h-4zM91 1h2v1h-2zM95 1h2v1h-2zM91 2h2v1h-2zM95 2h2v1h-2zM91 3h2v1h-2zM95 3h2v1h-2zM91 4h2v1h-2zM91 5h4v1h-4zM91 6h2v1h-2zM91 7h2v1h-2zM91 8h2v1h-2zM99 0h4v1h-4zM98 1h2v1h-2zM102 1h2v1h-2zM98 2h2v1h-2zM102 2h2v1h-2zM98 3h2v1h-2zM102 3h2v1h-2zM98 4h2v1h-2zM102 4h2v1h-2zM98 5h2v1h-2zM102 5h2v1h-2zM98 6h2v1h-2zM102 6h2v1h-2zM98 7h2v1h-2zM102 7h2v1h-2zM99 8h4v1h-4zM106 0h4v1h-4zM105 1h2v1h-2zM109 1h2v1h-2zM105 2h2v1h-2zM109 2h2v1h-2zM105 3h2v1h-2zM109 3h2v1h-2zM105 4h2v1h-2zM105 5h2v1h-2zM109 5h2v1h-2zM105 6h2v1h-2zM109 6h2v1h-2zM105 7h2v1h-2zM109 7h2v1h-2zM106 8h4v1h-4zM112 0h2v1h-2zM116 0h2v1h-2zM112 1h2v1h-2zM116 1h2v1h-2zM112 2h2v1h-2zM116 2h2v1h-2zM112 3h2v1h-2zM116 3h2v1h-2zM112 4h2v1h-2zM116 4h2v1h-2zM112 5h2v1h-2zM116 5h2v1h-2zM112 6h2v1h-2zM116 6h2v1h-2zM112 7h2v1h-2zM116 7h2v1h-2zM113 8h4v1h-4zM120 0h4v1h-4zM119 1h2v1h-2zM123 1h2v1h-2zM119 2h2v1h-2zM119 3h2v1h-2zM120 4h4v1h-4zM123 5h2v1h-2zM119 6h2v1h-2zM123 6h2v1h-2zM119 7h2v1h-2zM123 7h2v1h-2zM120 8h4v1h-4zM127 0h4v1h-4zM126 1h2v1h-2zM130 1h2v1h-2zM126 2h2v1h-2zM130 2h2v1h-2zM126 3h2v1h-2zM130 3h2v1h-2zM127 4h2v1h-2zM126 5h2v1h-2zM130 5h2v1h-2zM126 6h2v1h-2zM130 6h2v1h-2zM126 7h2v1h-2zM130 7h2v1h-2zM127 8h4v1h-4zM133 0h5v1h-5zM133 1h2v1h-2zM137 1h2v1h-2zM133 2h2v1h-2zM137 2h2v1h-2zM133 3h2v1h-2zM137 3h2v1h-2zM133 4h2v1h-2zM137 4h2v1h-2zM133 5h2v1h-2zM137 5h2v1h-2zM133 6h2v1h-2zM137 6h2v1h-2zM133 7h2v1h-2zM137 7h2v1h-2zM133 8h5v1h-5z"/></svg>
<svg class="r" style="left:189px;top:184px" width="127" height="9" viewBox="0 0 127 9" shape-rendering="crispEdges"><path fill="#e59b5f" d="M1 0h4v1h-4zM0 1h2v1h-2zM4 1h2v1h-2zM0 2h2v1h-2zM4 2h2v1h-2zM0 3h2v1h-2zM3 3h2v1h-2zM0 4h2v1h-2zM4 4h2v1h-2zM0 5h2v1h-2zM4 5h2v1h-2zM0 6h2v1h-2zM4 6h2v1h-2zM0 7h2v1h-2zM4 7h2v1h-2zM0 8h5v1h-5zM8 0h4v1h-4zM7 1h2v1h-2zM11 1h2v1h-2zM7 2h2v1h-2zM11 2h2v1h-2zM7 3h2v1h-2zM10 3h3v1h-3zM7 4h2v1h-2zM11 4h2v1h-2zM7 5h2v1h-2zM11 5h2v1h-2zM7 6h2v1h-2zM11 6h2v1h-2zM7 7h2v1h-2zM11 7h2v1h-2zM7 8h2v1h-2zM11 8h2v1h-2zM15 0h4v1h-4zM14 1h2v1h-2zM18 1h2v1h-2zM14 2h2v1h-2zM14 3h2v1h-2zM15 4h4v1h-4zM18 5h2v1h-2zM14 6h2v1h-2zM18 6h2v1h-2zM14 7h2v1h-2zM18 7h2v1h-2zM15 8h4v1h-4zM22 0h4v1h-4zM21 1h2v1h-2zM25 1h2v1h-2zM21 2h2v1h-2zM25 2h2v1h-2zM21 3h2v1h-2zM25 3h2v1h-2zM22 4h2v1h-2zM21 5h2v1h-2zM25 5h2v1h-2zM21 6h2v1h-2zM25 6h2v1h-2zM21 7h2v1h-2zM25 7h2v1h-2zM22 8h4v1h-4zM28 8h6v1h-6zM36 0h4v1h-4zM35 1h2v1h-2zM39 1h2v1h-2zM35 2h2v1h-2zM39 2h2v1h-2zM35 3h2v1h-2zM39 3h2v1h-2zM35 4h2v1h-2zM35 5h2v1h-2zM39 5h2v1h-2zM35 6h2v1h-2zM39 6h2v1h-2zM35 7h2v1h-2zM39 7h2v1h-2zM36 8h4v1h-4zM43 0h4v1h-4zM42 1h2v1h-2zM46 1h2v1h-2zM42 2h2v1h-2zM46 2h2v1h-2zM42 3h2v1h-2zM46 3h2v1h-2zM42 4h2v1h-2zM46 4h2v1h-2zM42 5h2v1h-2zM46 5h2v1h-2zM42 6h2v1h-2zM46 6h2v1h-2zM42 7h2v1h-2zM46 7h2v1h-2zM43 8h4v1h-4zM49 0h2v1h-2zM49 1h2v1h-2zM49 2h2v1h-2zM49 3h2v1h-2zM49 4h2v1h-2zM49 5h2v1h-2zM53 5h2v1h-2zM49 6h2v1h-2zM53 6h2v1h-2zM49 7h2v1h-2zM53 7h2v1h-2zM50 8h4v1h-4zM57 0h4v1h-4zM56 1h2v1h-2zM60 1h2v1h-2zM56 2h2v1h-2zM60 2h2v1h-2zM56 3h2v1h-2zM60 3h2v1h-2zM56 4h2v1h-2zM60 4h2v1h-2zM56 5h2v1h-2zM60 5h2v1h-2zM56 6h2v1h-2zM60 6h2v1h-2zM56 7h2v1h-2zM60 7h2v1h-2zM57 8h4v1h-4zM63 0h5v1h-5zM63 1h2v1h-2zM67 1h2v1h-2zM63 2h2v1h-2zM67 2h2v1h-2zM63 3h2v1h-2zM66 3h2v1h-2zM63 4h2v1h-2zM67 4h2v1h-2zM63 5h2v1h-2zM67 5h2v1h-2zM63 6h2v1h-2zM67 6h2v1h-2zM63 7h2v1h-2zM67 7h2v1h-2zM63 8h2v1h-2zM67 8h2v1h-2zM70 8h6v1h-6zM78 0h4v1h-4zM77 1h2v1h-2zM81 1h2v1h-2zM77 2h2v1h-2zM81 2h2v1h-2zM77 3h2v1h-2zM81 3h2v1h-2zM77 4h2v1h-2zM77 5h4v1h-4zM77 6h2v1h-2zM77 7h2v1h-2zM77 8h2v1h-2zM85 0h4v1h-4zM84 1h2v1h-2zM88 1h2v1h-2zM84 2h2v1h-2zM88 2h2v1h-2zM84 3h2v1h-2zM88 3h2v1h-2zM84 4h2v1h-2zM88 4h2v1h-2zM84 5h2v1h-2zM88 5h2v1h-2zM84 6h2v1h-2zM88 6h2v1h-2zM84 7h2v1h-2zM88 7h2v1h-2zM85 8h4v1h-4zM92 0h4v1h-4zM91 1h2v1h-2zM95 1h2v1h-2zM91 2h2v1h-2zM95 2h2v1h-2zM91 3h2v1h-2zM95 3h2v1h-2zM91 4h2v1h-2zM91 5h2v1h-2zM95 5h2v1h-2zM91 6h2v1h-2zM95 6h2v1h-2zM91 7h2v1h-2zM95 7h2v1h-2zM92 8h4v1h-4zM98 0h2v1h-2zM102 0h2v1h-2zM98 1h2v1h-2zM102 1h2v1h-2zM98 2h2v1h-2zM102 2h2v1h-2zM98 3h2v1h-2zM102 3h2v1h-2zM98 4h2v1h-2zM102 4h2v1h-2zM98 5h2v1h-2zM102 5h2v1h-2zM98 6h2v1h-2zM102 6h2v1h-2zM98 7h2v1h-2zM102 7h2v1h-2zM99 8h4v1h-4zM106 0h4v1h-4zM105 1h2v1h-2zM109 1h2v1h-2zM105 2h2v1h-2zM105 3h2v1h-2zM106 4h4v1h-4zM109 5h2v1h-2zM105 6h2v1h-2zM109 6h2v1h-2zM105 7h2v1h-2zM109 7h2v1h-2zM106 8h4v1h-4zM113 0h4v1h-4zM112 1h2v1h-2zM116 1h2v1h-2zM112 2h2v1h-2zM116 2h2v1h-2zM112 3h2v1h-2zM116 3h2v1h-2zM113 4h2v1h-2zM112 5h2v1h-2zM116 5h2v1h-2zM112 6h2v1h-2zM116 6h2v1h-2zM112 7h2v1h-2zM116 7h2v1h-2zM113 8h4v1h-4zM119 0h5v1h-5zM119 1h2v1h-2zM123 1h2v1h-2zM119 2h2v1h-2zM123 2h2v1h-2zM119 3h2v1h-2zM123 3h2v1h-2zM119 4h2v1h-2zM123 4h2v1h-2zM119 5h2v1h-2zM123 5h2v1h-2zM119 6h2v1h-2zM123 6h2v1h-2zM119 7h2v1h-2zM123 7h2v1h-2zM119 8h5v1h-5z"/></svg>
<svg class="r" style="left:189px;top:214px" width="127" height="9" viewBox="0 0 127 9" shape-rendering="crispEdges"><path fill="#e59b5f" d="M0 0h6v1h-6zM2 1h2v1h-2zM2 2h2v1h-2zM2 3h2v1h-2zM2 4h2v1h-2zM2 5h2v1h-2zM2 6h2v1h-2zM2 7h2v1h-2zM2 8h2v1h-2zM8 0h4v1h-4zM7 1h2v1h-2zM11 1h2v1h-2zM7 2h2v1h-2zM11 2h2v1h-2zM7 3h2v1h-2zM11 3h2v1h-2zM8 4h2v1h-2zM7 5h2v1h-2zM11 5h2v1h-2zM7 6h2v1h-2zM11 6h2v1h-2zM7 7h2v1h-2zM11 7h2v1h-2zM8 8h4v1h-4zM14 0h2v1h-2zM18 0h2v1h-2zM14 1h2v1h-2zM18 1h2v1h-2zM15 2h4v1h-4zM16 3h2v1h-2zM15 4h4v1h-4zM14 5h2v1h-2zM18 5h2v1h-2zM14 6h2v1h-2zM18 6h2v1h-2zM14 7h2v1h-2zM18 7h2v1h-2zM14 8h2v1h-2zM18 8h2v1h-2zM21 0h6v1h-6zM23 1h2v1h-2zM23 2h2v1h-2zM23 3h2v1h-2zM23 4h2v1h-2zM23 5h2v1h-2zM23 6h2v1h-2zM23 7h2v1h-2zM23 8h2v1h-2zM28 8h6v1h-6zM36 0h4v1h-4zM35 1h2v1h-2zM39 1h2v1h-2zM35 2h2v1h-2zM39 2h2v1h-2zM35 3h2v1h-2zM39 3h2v1h-2zM35 4h2v1h-2zM35 5h2v1h-2zM39 5h2v1h-2zM35 6h2v1h-2zM39 6h2v1h-2zM35 7h2v1h-2zM39 7h2v1h-2zM36 8h4v1h-4zM43 0h4v1h-4zM42 1h2v1h-2zM46 1h2v1h-2zM42 2h2v1h-2zM46 2h2v1h-2zM42 3h2v1h-2zM46 3h2v1h-2zM42 4h2v1h-2zM46 4h2v1h-2zM42 5h2v1h-2zM46 5h2v1h-2zM42 6h2v1h-2zM46 6h2v1h-2zM42 7h2v1h-2zM46 7h2v1h-2zM43 8h4v1h-4zM49 0h2v1h-2zM49 1h2v1h-2zM49 2h2v1h-2zM49 3h2v1h-2zM49 4h2v1h-2zM49 5h2v1h-2zM53 5h2v1h-2zM49 6h2v1h-2zM53 6h2v1h-2zM49 7h2v1h-2zM53 7h2v1h-2zM50 8h4v1h-4zM57 0h4v1h-4zM56 1h2v1h-2zM60 1h2v1h-2zM56 2h2v1h-2zM60 2h2v1h-2zM56 3h2v1h-2zM60 3h2v1h-2zM56 4h2v1h-2zM60 4h2v1h-2zM56 5h2v1h-2zM60 5h2v1h-2zM56 6h2v1h-2zM60 6h2v1h-2zM56 7h2v1h-2zM60 7h2v1h-2zM57 8h4v1h-4zM63 0h5v1h-5zM63 1h2v1h-2zM67 1h2v1h-2zM63 2h2v1h-2zM67 2h2v1h-2zM63 3h2v1h-2zM66 3h2v1h-2zM63 4h2v1h-2zM67 4h2v1h-2zM63 5h2v1h-2zM67 5h2v1h-2zM63 6h2v1h-2zM67 6h2v1h-2zM63 7h2v1h-2zM67 7h2v1h-2zM63 8h2v1h-2zM67 8h2v1h-2zM70 8h6v1h-6zM78 0h4v1h-4zM77 1h2v1h-2zM81 1h2v1h-2zM77 2h2v1h-2zM81 2h2v1h-2zM77 3h2v1h-2zM81 3h2v1h-2zM77 4h2v1h-2zM77 5h4v1h-4zM77 6h2v1h-2zM77 7h2v1h-2zM77 8h2v1h-2zM85 0h4v1h-4zM84 1h2v1h-2zM88 1h2v1h-2zM84 2h2v1h-2zM88 2h2v1h-2zM84 3h2v1h-2zM88 3h2v1h-2zM84 4h2v1h-2zM88 4h2v1h-2zM84 5h2v1h-2zM88 5h2v1h-2zM84 6h2v1h-2zM88 6h2v1h-2zM84 7h2v1h-2zM88 7h2v1h-2zM85 8h4v1h-4zM92 0h4v1h-4zM91 1h2v1h-2zM95 1h2v1h-2zM91 2h2v1h-2zM95 2h2v1h-2zM91 3h2v1h-2zM95 3h2v1h-2zM91 4h2v1h-2zM91 5h2v1h-2zM95 5h2v1h-2zM91 6h2v1h-2zM95 6h2v1h-2zM91 7h2v1h-2zM95 7h2v1h-2zM92 8h4v1h-4zM98 0h2v1h-2zM102 0h2v1h-2zM98 1h2v1h-2zM102 1h2v1h-2zM98 2h2v1h-2zM102 2h2v1h-2zM98 3h2v1h-2zM102 3h2v1h-2zM98 4h2v1h-2zM102 4h2v1h-2zM98 5h2v1h-2zM102 5h2v1h-2zM98 6h2v1h-2zM102 6h2v1h-2zM98 7h2v1h-2zM102 7h2v1h-2zM99 8h4v1h-4zM106 0h4v1h-4zM105 1h2v1h-2zM109 1h2v1h-2zM105 2h2v1h-2zM105 3h2v1h-2zM106 4h4v1h-4zM109 5h2v1h-2zM105 6h2v1h-2zM109 6h2v1h-2zM105 7h2v1h-2zM109 7h2v1h-2zM106 8h4v1h-4zM113 0h4v1h-4zM112 1h2v1h-2zM116 1h2v1h-2zM112 2h2v1h-2zM116 2h2v1h-2zM112 3h2v1h-2zM116 3h2v1h-2zM113 4h2v1h-2zM112 5h2v1h-2zM116 5h2v1h-2zM112 6h2v1h-2zM116 6h2v1h-2zM112 7h2v1h-2zM116 7h2v1h-2zM113 8h4v1h-4zM119 0h5v1h-5zM119 1h2v1h-2zM123 1h2v1h-2zM119 2h2v1h-2zM123 2h2v1h-2zM119 3h2v1h-2zM123 3h2v1h-2zM119 4h2v1h-2zM123 4h2v1h-2zM119 5h2v1h-2zM123 5h2v1h-2zM119 6h2v1h-2zM123 6h2v1h-2zM119 7h2v1h-2zM123 7h2v1h-2zM119 8h5v1h-5z"/></svg>
<svg class="r" style="left:182px;top:244px" width="141" height="9" viewBox="0 0 141 9" shape-rendering="crispEdges"><path fill="#e59b5f" d="M1 0h4v1h-4zM0 1h2v1h-2zM4 1h2v1h-2zM0 2h2v1h-2zM4 2h2v1h-2zM0 3h2v1h-2zM3 3h2v1h-2zM0 4h2v1h-2zM4 4h2v1h-2zM0 5h2v1h-2zM4 5h2v1h-2zM0 6h2v1h-2zM4 6h2v1h-2zM0 7h2v1h-2zM4 7h2v1h-2zM0 8h5v1h-5zM8 0h4v1h-4zM7 1h2v1h-2zM11 1h2v1h-2zM7 2h2v1h-2zM11 2h2v1h-2zM7 3h2v1h-2zM11 3h2v1h-2zM7 4h2v1h-2zM11 4h2v1h-2zM7 5h2v1h-2zM11 5h2v1h-2zM7 6h2v1h-2zM11 6h2v1h-2zM7 7h2v1h-2zM11 7h2v1h-2zM8 8h4v1h-4zM14 0h5v1h-5zM14 1h2v1h-2zM18 1h2v1h-2zM14 2h2v1h-2zM18 2h2v1h-2zM14 3h2v1h-2zM17 3h2v1h-2zM14 4h2v1h-2zM18 4h2v1h-2zM14 5h2v1h-2zM18 5h2v1h-2zM14 6h2v1h-2zM18 6h2v1h-2zM14 7h2v1h-2zM18 7h2v1h-2zM14 8h2v1h-2zM18 8h2v1h-2zM21 0h5v1h-5zM21 1h2v1h-2zM25 1h2v1h-2zM21 2h2v1h-2zM25 2h2v1h-2zM21 3h2v1h-2zM25 3h2v1h-2zM21 4h2v1h-2zM25 4h2v1h-2zM21 5h2v1h-2zM25 5h2v1h-2zM21 6h2v1h-2zM25 6h2v1h-2zM21 7h2v1h-2zM25 7h2v1h-2zM21 8h5v1h-5zM29 0h4v1h-4zM28 1h2v1h-2zM32 1h2v1h-2zM28 2h2v1h-2zM32 2h2v1h-2zM28 3h2v1h-2zM32 3h2v1h-2zM29 4h2v1h-2zM28 5h2v1h-2zM32 5h2v1h-2zM28 6h2v1h-2zM32 6h2v1h-2zM28 7h2v1h-2zM32 7h2v1h-2zM29 8h4v1h-4zM35 0h5v1h-5zM35 1h2v1h-2zM39 1h2v1h-2zM35 2h2v1h-2zM39 2h2v1h-2zM35 3h2v1h-2zM38 3h2v1h-2zM35 4h2v1h-2zM39 4h2v1h-2zM35 5h2v1h-2zM39 5h2v1h-2zM35 6h2v1h-2zM39 6h2v1h-2zM35 7h2v1h-2zM39 7h2v1h-2zM35 8h2v1h-2zM39 8h2v1h-2zM42 8h6v1h-6zM50 0h4v1h-4zM49 1h2v1h-2zM53 1h2v1h-2zM49 2h2v1h-2zM53 2h2v1h-2zM49 3h2v1h-2zM53 3h2v1h-2zM49 4h2v1h-2zM49 5h2v1h-2zM53 5h2v1h-2zM49 6h2v1h-2zM53 6h2v1h-2zM49 7h2v1h-2zM53 7h2v1h-2zM50 8h4v1h-4zM57 0h4v1h-4zM56 1h2v1h-2zM60 1h2v1h-2zM56 2h2v1h-2zM60 2h2v1h-2zM56 3h2v1h-2zM60 3h2v1h-2zM56 4h2v1h-2zM60 4h2v1h-2zM56 5h2v1h-2zM60 5h2v1h-2zM56 6h2v1h-2zM60 6h2v1h-2zM56 7h2v1h-2zM60 7h2v1h-2zM57 8h4v1h-4zM63 0h2v1h-2zM63 1h2v1h-2zM63 2h2v1h-2zM63 3h2v1h-2zM63 4h2v1h-2zM63 5h2v1h-2zM67 5h2v1h-2zM63 6h2v1h-2zM67 6h2v1h-2zM63 7h2v1h-2zM67 7h2v1h-2zM64 8h4v1h-4zM71 0h4v1h-4zM70 1h2v1h-2zM74 1h2v1h-2zM70 2h2v1h-2zM74 2h2v1h-2zM70 3h2v1h-2zM74 3h2v1h-2zM70 4h2v1h-2zM74 4h2v1h-2zM70 5h2v1h-2zM74 5h2v1h-2zM70 6h2v1h-2zM74 6h2v1h-2zM70 7h2v1h-2zM74 7h2v1h-2zM71 8h4v1h-4zM77 0h5v1h-5zM77 1h2v1h-2zM81 1h2v1h-2zM77 2h2v1h-2zM81 2h2v1h-2zM77 3h2v1h-2zM80 3h2v1h-2zM77 4h2v1h-2zM81 4h2v1h-2zM77 5h2v1h-2zM81 5h2v1h-2zM77 6h2v1h-2zM81 6h2v1h-2zM77 7h2v1h-2zM81 7h2v1h-2zM77 8h2v1h-2zM81 8h2v1h-2zM84 8h6v1h-6zM91 0h5v1h-5zM91 1h2v1h-2zM95 1h2v1h-2zM91 2h2v1h-2zM95 2h2v1h-2zM91 3h2v1h-2zM95 3h2v1h-2zM91 4h2v1h-2zM95 4h2v1h-2zM91 5h5v1h-5zM91 6h2v1h-2zM91 7h2v1h-2zM91 8h2v1h-2zM98 0h5v1h-5zM98 1h2v1h-2zM102 1h2v1h-2zM98 2h2v1h-2zM102 2h2v1h-2zM98 3h2v1h-2zM101 3h2v1h-2zM98 4h2v1h-2zM102 4h2v1h-2zM98 5h2v1h-2zM102 5h2v1h-2zM98 6h2v1h-2zM102 6h2v1h-2zM98 7h2v1h-2zM102 7h2v1h-2zM98 8h2v1h-2zM102 8h2v1h-2zM106 0h4v1h-4zM105 1h2v1h-2zM109 1h2v1h-2zM105 2h2v1h-2zM109 2h2v1h-2zM105 3h2v1h-2zM109 3h2v1h-2zM106 4h2v1h-2zM105 5h2v1h-2zM109 5h2v1h-2zM105 6h2v1h-2zM109 6h2v1h-2zM105 7h2v1h-2zM109 7h2v1h-2zM106 8h4v1h-4zM113 0h4v1h-4zM112 1h2v1h-2zM116 1h2v1h-2zM112 2h2v1h-2zM112 3h2v1h-2zM113 4h4v1h-4zM116 5h2v1h-2zM112 6h2v1h-2zM116 6h2v1h-2zM112 7h2v1h-2zM116 7h2v1h-2zM113 8h4v1h-4zM120 0h4v1h-4zM119 1h2v1h-2zM123 1h2v1h-2zM119 2h2v1h-2zM119 3h2v1h-2zM120 4h4v1h-4zM123 5h2v1h-2zM119 6h2v1h-2zM123 6h2v1h-2zM119 7h2v1h-2zM123 7h2v1h-2zM120 8h4v1h-4zM127 0h4v1h-4zM126 1h2v1h-2zM130 1h2v1h-2zM126 2h2v1h-2zM130 2h2v1h-2zM126 3h2v1h-2zM130 3h2v1h-2zM127 4h2v1h-2zM126 5h2v1h-2zM130 5h2v1h-2zM126 6h2v1h-2zM130 6h2v1h-2zM126 7h2v1h-2zM130 7h2v1h-2zM127 8h4v1h-4zM133 0h5v1h-5zM133 1h2v1h-2zM137 1h2v1h-2zM133 2h2v1h-2zM137 2h2v1h-2zM133 3h2v1h-2zM137 3h2v1h-2zM133 4h2v1h-2zM137 4h2v1h-2zM133 5h2v1h-2zM137 5h2v1h-2zM133 6h2v1h-2zM137 6h2v1h-2zM133 7h2v1h-2zM137 7h2v1h-2zM133 8h5v1h-5z"/></svg>
<svg class="r" style="left:189px;top:274px" width="127" height="9" viewBox="0 0 127 9" shape-rendering="crispEdges"><path fill="#e59b5f" d="M1 0h4v1h-4zM0 1h2v1h-2zM4 1h2v1h-2zM0 2h2v1h-2zM4 2h2v1h-2zM0 3h2v1h-2zM3 3h2v1h-2zM0 4h2v1h-2zM4 4h2v1h-2zM0 5h2v1h-2zM4 5h2v1h-2zM0 6h2v1h-2zM4 6h2v1h-2zM0 7h2v1h-2zM4 7h2v1h-2zM0 8h5v1h-5zM8 0h4v1h-4zM7 1h2v1h-2zM11 1h2v1h-2zM7 2h2v1h-2zM11 2h2v1h-2zM7 3h2v1h-2zM10 3h3v1h-3zM7 4h2v1h-2zM11 4h2v1h-2zM7 5h2v1h-2zM11 5h2v1h-2zM7 6h2v1h-2zM11 6h2v1h-2zM7 7h2v1h-2zM11 7h2v1h-2zM7 8h2v1h-2zM11 8h2v1h-2zM15 0h4v1h-4zM14 1h2v1h-2zM18 1h2v1h-2zM14 2h2v1h-2zM14 3h2v1h-2zM15 4h4v1h-4zM18 5h2v1h-2zM14 6h2v1h-2zM18 6h2v1h-2zM14 7h2v1h-2zM18 7h2v1h-2zM15 8h4v1h-4zM22 0h4v1h-4zM21 1h2v1h-2zM25 1h2v1h-2zM21 2h2v1h-2zM25 2h2v1h-2zM21 3h2v1h-2zM25 3h2v1h-2zM22 4h2v1h-2zM21 5h2v1h-2zM25 5h2v1h-2zM21 6h2v1h-2zM25 6h2v1h-2zM21 7h2v1h-2zM25 7h2v1h-2zM22 8h4v1h-4zM28 8h6v1h-6zM36 0h4v1h-4zM35 1h2v1h-2zM39 1h2v1h-2zM35 2h2v1h-2zM39 2h2v1h-2zM35 3h2v1h-2zM39 3h2v1h-2zM35 4h2v1h-2zM35 5h2v1h-2zM39 5h2v1h-2zM35 6h2v1h-2zM39 6h2v1h-2zM35 7h2v1h-2zM39 7h2v1h-2zM36 8h4v1h-4zM43 0h4v1h-4zM42 1h2v1h-2zM46 1h2v1h-2zM42 2h2v1h-2zM46 2h2v1h-2zM42 3h2v1h-2zM46 3h2v1h-2zM42 4h2v1h-2zM46 4h2v1h-2zM42 5h2v1h-2zM46 5h2v1h-2zM42 6h2v1h-2zM46 6h2v1h-2zM42 7h2v1h-2zM46 7h2v1h-2zM43 8h4v1h-4zM49 0h2v1h-2zM49 1h2v1h-2zM49 2h2v1h-2zM49 3h2v1h-2zM49 4h2v1h-2zM49 5h2v1h-2zM53 5h2v1h-2zM49 6h2v1h-2zM53 6h2v1h-2zM49 7h2v1h-2zM53 7h2v1h-2zM50 8h4v1h-4zM57 0h4v1h-4zM56 1h2v1h-2zM60 1h2v1h-2zM56 2h2v1h-2zM60 2h2v1h-2zM56 3h2v1h-2zM60 3h2v1h-2zM56 4h2v1h-2zM60 4h2v1h-2zM56 5h2v1h-2zM60 5h2v1h-2zM56 6h2v1h-2zM60 6h2v1h-2zM56 7h2v1h-2zM60 7h2v1h-2zM57 8h4v1h-4zM63 0h5v1h-5zM63 1h2v1h-2zM67 1h2v1h-2zM63 2h2v1h-2zM67 2h2v1h-2zM63 3h2v1h-2zM66 3h2v1h-2zM63 4h2v1h-2zM67 4h2v1h-2zM63 5h2v1h-2zM67 5h2v1h-2zM63 6h2v1h-2zM67 6h2v1h-2zM63 7h2v1h-2zM67 7h2v1h-2zM63 8h2v1h-2zM67 8h2v1h-2zM70 8h6v1h-6zM77 0h5v1h-5zM77 1h2v1h-2zM81 1h2v1h-2zM77 2h2v1h-2zM81 2h2v1h-2zM77 3h2v1h-2zM81 3h2v1h-2zM77 4h2v1h-2zM81 4h2v1h-2zM77 5h5v1h-5zM77 6h2v1h-2zM77 7h2v1h-2zM77 8h2v1h-2zM84 0h5v1h-5zM84 1h2v1h-2zM88 1h2v1h-2zM84 2h2v1h-2zM88 2h2v1h-2zM84 3h2v1h-2zM87 3h2v1h-2zM84 4h2v1h-2zM88 4h2v1h-2zM84 5h2v1h-2zM88 5h2v1h-2zM84 6h2v1h-2zM88 6h2v1h-2zM84 7h2v1h-2zM88 7h2v1h-2zM84 8h2v1h-2zM88 8h2v1h-2zM92 0h4v1h-4zM91 1h2v1h-2zM95 1h2v1h-2zM91 2h2v1h-2zM95 2h2v1h-2zM91 3h2v1h-2zM95 3h2v1h-2zM92 4h2v1h-2zM91 5h2v1h-2zM95 5h2v1h-2zM91 6h2v1h-2zM95 6h2v1h-2zM91 7h2v1h-2zM95 7h2v1h-2zM92 8h4v1h-4zM99 0h4v1h-4zM98 1h2v1h-2zM102 1h2v1h-2zM98 2h2v1h-2zM98 3h2v1h-2zM99 4h4v1h-4zM102 5h2v1h-2zM98 6h2v1h-2zM102 6h2v1h-2zM98 7h2v1h-2zM102 7h2v1h-2zM99 8h4v1h-4zM106 0h4v1h-4zM105 1h2v1h-2zM109 1h2v1h-2zM105 2h2v1h-2zM105 3h2v1h-2zM106 4h4v1h-4zM109 5h2v1h-2zM105 6h2v1h-2zM109 6h2v1h-2zM105 7h2v1h-2zM109 7h2v1h-2zM106 8h4v1h-4zM113 0h4v1h-4zM112 1h2v1h-2zM116 1h2v1h-2zM112 2h2v1h-2zM116 2h2v1h-2zM112 3h2v1h-2zM116 3h2v1h-2zM113 4h2v1h-2zM112 5h2v1h-2zM116 5h2v1h-2zM112 6h2v1h-2zM116 6h2v1h-2zM112 7h2v1h-2zM116 7h2v1h-2zM113 8h4v1h-4zM119 0h5v1h-5zM119 1h2v1h-2zM123 1h2v1h-2zM119 2h2v1h-2zM123 2h2v1h-2zM119 3h2v1h-2zM123 3h2v1h-2zM119 4h2v1h-2zM123 4h2v1h-2zM119 5h2v1h-2zM123 5h2v1h-2zM119 6h2v1h-2zM123 6h2v1h-2zM119 7h2v1h-2zM123 7h2v1h-2zM119 8h5v1h-5z"/></svg>
<svg class="r" style="left:189px;top:304px" width="127" height="9" viewBox="0 0 127 9" shape-rendering="crispEdges"><path fill="#e59b5f" d="M0 0h6v1h-6zM2 1h2v1h-2zM2 2h2v1h-2zM2 3h2v1h-2zM2 4h2v1h-2zM2 5h2v1h-2zM2 6h2v1h-2zM2 7h2v1h-2zM2 8h2v1h-2zM8 0h4v1h-4zM7 1h2v1h-2zM11 1h2v1h-2zM7 2h2v1h-2zM11 2h2v1h-2zM7 3h2v1h-2zM11 3h2v1h-2zM8 4h2v1h-2zM7 5h2v1h-2zM11 5h2v1h-2zM7 6h2v1h-2zM11 6h2v1h-2zM7 7h2v1h-2zM11 7h2v1h-2zM8 8h4v1h-4zM14 0h2v1h-2zM18 0h2v1h-2zM14 1h2v1h-2zM18 1h2v1h-2zM15 2h4v1h-4zM16 3h2v1h-2zM15 4h4v1h-4zM14 5h2v1h-2zM18 5h2v1h-2zM14 6h2v1h-2zM18 6h2v1h-2zM14 7h2v1h-2zM18 7h2v1h-2zM14 8h2v1h-2zM18 8h2v1h-2zM21 0h6v1h-6zM23 1h2v1h-2zM23 2h2v1h-2zM23 3h2v1h-2zM23 4h2v1h-2zM23 5h2v1h-2zM23 6h2v1h-2zM23 7h2v1h-2zM23 8h2v1h-2zM28 8h6v1h-6zM36 0h4v1h-4zM35 1h2v1h-2zM39 1h2v1h-2zM35 2h2v1h-2zM39 2h2v1h-2zM35 3h2v1h-2zM39 3h2v1h-2zM35 4h2v1h-2zM35 5h2v1h-2zM39 5h2v1h-2zM35 6h2v1h-2zM39 6h2v1h-2zM35 7h2v1h-2zM39 7h2v1h-2zM36 8h4v1h-4zM43 0h4v1h-4zM42 1h2v1h-2zM46 1h2v1h-2zM42 2h2v1h-2zM46 2h2v1h-2zM42 3h2v1h-2zM46 3h2v1h-2zM42 4h2v1h-2zM46 4h2v1h-2zM42 5h2v1h-2zM46 5h2v1h-2zM42 6h2v1h-2zM46 6h2v1h-2zM42 7h2v1h-2zM46 7h2v1h-2zM43 8h4v1h-4zM49 0h2v1h-2zM49 1h2v1h-2zM49 2h2v1h-2zM49 3h2v1h-2zM49 4h2v1h-2zM49 5h2v1h-2zM53 5h2v1h-2zM49 6h2v1h-2zM53 6h2v1h-2zM49 7h2v1h-2zM53 7h2v1h-2zM50 8h4v1h-4zM57 0h4v1h-4zM56 1h2v1h-2zM60 1h2v1h-2zM56 2h2v1h-2zM60 2h2v1h-2zM56 3h2v1h-2zM60 3h2v1h-2zM56 4h2v1h-2zM60 4h2v1h-2zM56 5h2v1h-2zM60 5h2v1h-2zM56 6h2v1h-2zM60 6h2v1h-2zM56 7h2v1h-2zM60 7h2v1h-2zM57 8h4v1h-4zM63 0h5v1h-5zM63 1h2v1h-2zM67 1h2v1h-2zM63 2h2v1h-2zM67 2h2v1h-2zM63 3h2v1h-2zM66 3h2v1h-2zM63 4h2v1h-2zM67 4h2v1h-2zM63 5h2v1h-2zM67 5h2v1h-2zM63 6h2v1h-2zM67 6h2v1h-2zM63 7h2v1h-2zM67 7h2v1h-2zM63 8h2v1h-2zM67 8h2v1h-2zM70 8h6v1h-6zM77 0h5v1h-5zM77 1h2v1h-2zM81 1h2v1h-2zM77 2h2v1h-2zM81 2h2v1h-2zM77 3h2v1h-2zM81 3h2v1h-2zM77 4h2v1h-2zM81 4h2v1h-2zM77 5h5v1h-5zM77 6h2v1h-2zM77 7h2v1h-2zM77 8h2v1h-2zM84 0h5v1h-5zM84 1h2v1h-2zM88 1h2v1h-2zM84 2h2v1h-2zM88 2h2v1h-2zM84 3h2v1h-2zM87 3h2v1h-2zM84 4h2v1h-2zM88 4h2v1h-2zM84 5h2v1h-2zM88 5h2v1h-2zM84 6h2v1h-2zM88 6h2v1h-2zM84 7h2v1h-2zM88 7h2v1h-2zM84 8h2v1h-2zM88 8h2v1h-2zM92 0h4v1h-4zM91 1h2v1h-2zM95 1h2v1h-2zM91 2h2v1h-2zM95 2h2v1h-2zM91 3h2v1h-2zM95 3h2v1h-2zM92 4h2v1h-2zM91 5h2v1h-2zM95 5h2v1h-2zM91 6h2v1h-2zM95 6h2v1h-2zM91 7h2v1h-2zM95 7h2v1h-2zM92 8h4v1h-4zM99 0h4v1h-4zM98 1h2v1h-2zM102 1h2v1h-2zM98 2h2v1h-2zM98 3h2v1h-2zM99 4h4v1h-4zM102 5h2v1h-2zM98 6h2v1h-2zM102 6h2v1h-2zM98 7h2v1h-2zM102 7h2v1h-2zM99 8h4v1h-4zM106 0h4v1h-4zM105 1h2v1h-2zM109 1h2v1h-2zM105 2h2v1h-2zM105 3h2v1h-2zM106 4h4v1h-4zM109 5h2v1h-2zM105 6h2v1h-2zM109 6h2v1h-2zM105 7h2v1h-2zM109 7h2v1h-2zM106 8h4v1h-4zM113 0h4v1h-4zM112 1h2v1h-2zM116 1h2v1h-2zM112 2h2v1h-2zM116 2h2v1h-2zM112 3h2v1h-2zM116 3h2v1h-2zM113 4h2v1h-2zM112 5h2v1h-2zM116 5h2v1h-2zM112 6h2v1h-2zM116 6h2v1h-2zM112 7h2v1h-2zM116 7h2v1h-2zM113 8h4v1h-4zM119 0h5v1h-5zM119 1h2v1h-2zM123 1h2v1h-2zM119 2h2v1h-2zM123 2h2v1h-2zM119 3h2v1h-2zM123 3h2v1h-2zM119 4h2v1h-2zM123 4h2v1h-2zM119 5h2v1h-2zM123 5h2v1h-2zM119 6h2v1h-2zM123 6h2v1h-2zM119 7h2v1h-2zM123 7h2v1h-2zM119 8h5v1h-5z"/></svg>
<svg class="r" style="left:181px;top:334px" width="144" height="9" viewBox="0 0 144 9" shape-rendering="crispEdges"><path fill="#e59b5f" d="M1 0h4v1h-4zM0 1h2v1h-2zM4 1h2v1h-2zM0 2h2v1h-2zM4 2h2v1h-2zM0 3h2v1h-2zM3 3h2v1h-2zM0 4h2v1h-2zM4 4h2v1h-2zM0 5h2v1h-2zM4 5h2v1h-2zM0 6h2v1h-2zM4 6h2v1h-2zM0 7h2v1h-2zM4 7h2v1h-2zM0 8h5v1h-5zM8 0h4v1h-4zM7 1h2v1h-2zM11 1h2v1h-2zM7 2h2v1h-2zM11 2h2v1h-2zM7 3h2v1h-2zM11 3h2v1h-2zM7 4h2v1h-2zM11 4h2v1h-2zM7 5h2v1h-2zM11 5h2v1h-2zM7 6h2v1h-2zM11 6h2v1h-2zM7 7h2v1h-2zM11 7h2v1h-2zM8 8h4v1h-4zM14 0h5v1h-5zM14 1h2v1h-2zM18 1h2v1h-2zM14 2h2v1h-2zM18 2h2v1h-2zM14 3h2v1h-2zM17 3h2v1h-2zM14 4h2v1h-2zM18 4h2v1h-2zM14 5h2v1h-2zM18 5h2v1h-2zM14 6h2v1h-2zM18 6h2v1h-2zM14 7h2v1h-2zM18 7h2v1h-2zM14 8h2v1h-2zM18 8h2v1h-2zM21 0h5v1h-5zM21 1h2v1h-2zM25 1h2v1h-2zM21 2h2v1h-2zM25 2h2v1h-2zM21 3h2v1h-2zM25 3h2v1h-2zM21 4h2v1h-2zM25 4h2v1h-2zM21 5h2v1h-2zM25 5h2v1h-2zM21 6h2v1h-2zM25 6h2v1h-2zM21 7h2v1h-2zM25 7h2v1h-2zM21 8h5v1h-5zM29 0h4v1h-4zM28 1h2v1h-2zM32 1h2v1h-2zM28 2h2v1h-2zM32 2h2v1h-2zM28 3h2v1h-2zM32 3h2v1h-2zM29 4h2v1h-2zM28 5h2v1h-2zM32 5h2v1h-2zM28 6h2v1h-2zM32 6h2v1h-2zM28 7h2v1h-2zM32 7h2v1h-2zM29 8h4v1h-4zM35 0h5v1h-5zM35 1h2v1h-2zM39 1h2v1h-2zM35 2h2v1h-2zM39 2h2v1h-2zM35 3h2v1h-2zM38 3h2v1h-2zM35 4h2v1h-2zM39 4h2v1h-2zM35 5h2v1h-2zM39 5h2v1h-2zM35 6h2v1h-2zM39 6h2v1h-2zM35 7h2v1h-2zM39 7h2v1h-2zM35 8h2v1h-2zM39 8h2v1h-2zM42 8h6v1h-6zM50 0h4v1h-4zM49 1h2v1h-2zM53 1h2v1h-2zM49 2h2v1h-2zM53 2h2v1h-2zM49 3h2v1h-2zM53 3h2v1h-2zM49 4h2v1h-2zM49 5h2v1h-2zM53 5h2v1h-2zM49 6h2v1h-2zM53 6h2v1h-2zM49 7h2v1h-2zM53 7h2v1h-2zM50 8h4v1h-4zM57 0h4v1h-4zM56 1h2v1h-2zM60 1h2v1h-2zM56 2h2v1h-2zM60 2h2v1h-2zM56 3h2v1h-2zM60 3h2v1h-2zM56 4h2v1h-2zM60 4h2v1h-2zM56 5h2v1h-2zM60 5h2v1h-2zM56 6h2v1h-2zM60 6h2v1h-2zM56 7h2v1h-2zM60 7h2v1h-2zM57 8h4v1h-4zM63 0h2v1h-2zM63 1h2v1h-2zM63 2h2v1h-2zM63 3h2v1h-2zM63 4h2v1h-2zM63 5h2v1h-2zM67 5h2v1h-2zM63 6h2v1h-2zM67 6h2v1h-2zM63 7h2v1h-2zM67 7h2v1h-2zM64 8h4v1h-4zM71 0h4v1h-4zM70 1h2v1h-2zM74 1h2v1h-2zM70 2h2v1h-2zM74 2h2v1h-2zM70 3h2v1h-2zM74 3h2v1h-2zM70 4h2v1h-2zM74 4h2v1h-2zM70 5h2v1h-2zM74 5h2v1h-2zM70 6h2v1h-2zM74 6h2v1h-2zM70 7h2v1h-2zM74 7h2v1h-2zM71 8h4v1h-4zM77 0h5v1h-5zM77 1h2v1h-2zM81 1h2v1h-2zM77 2h2v1h-2zM81 2h2v1h-2zM77 3h2v1h-2zM80 3h2v1h-2zM77 4h2v1h-2zM81 4h2v1h-2zM77 5h2v1h-2zM81 5h2v1h-2zM77 6h2v1h-2zM81 6h2v1h-2zM77 7h2v1h-2zM81 7h2v1h-2zM77 8h2v1h-2zM81 8h2v1h-2zM84 8h6v1h-6zM91 0h5v1h-5zM91 1h2v1h-2zM95 1h2v1h-2zM91 2h2v1h-2zM95 2h2v1h-2zM91 3h2v1h-2zM95 3h2v1h-2zM91 4h2v1h-2zM95 4h2v1h-2zM91 5h2v1h-2zM95 5h2v1h-2zM91 6h2v1h-2zM95 6h2v1h-2zM91 7h2v1h-2zM95 7h2v1h-2zM91 8h5v1h-5zM98 0h2v1h-2zM98 1h2v1h-2zM98 2h2v1h-2zM98 3h2v1h-2zM98 4h2v1h-2zM98 5h2v1h-2zM98 6h2v1h-2zM98 7h2v1h-2zM98 8h2v1h-2zM102 0h4v1h-4zM101 1h2v1h-2zM105 1h2v1h-2zM101 2h2v1h-2zM101 3h2v1h-2zM102 4h4v1h-4zM105 5h2v1h-2zM101 6h2v1h-2zM105 6h2v1h-2zM101 7h2v1h-2zM105 7h2v1h-2zM102 8h4v1h-4zM109 0h4v1h-4zM108 1h2v1h-2zM112 1h2v1h-2zM108 2h2v1h-2zM112 2h2v1h-2zM108 3h2v1h-2zM111 3h3v1h-3zM108 4h2v1h-2zM112 4h2v1h-2zM108 5h2v1h-2zM112 5h2v1h-2zM108 6h2v1h-2zM112 6h2v1h-2zM108 7h2v1h-2zM112 7h2v1h-2zM108 8h2v1h-2zM112 8h2v1h-2zM116 0h4v1h-4zM115 1h2v1h-2zM119 1h2v1h-2zM115 2h2v1h-2zM119 2h2v1h-2zM115 3h2v1h-2zM118 3h2v1h-2zM115 4h2v1h-2zM119 4h2v1h-2zM115 5h2v1h-2zM119 5h2v1h-2zM115 6h2v1h-2zM119 6h2v1h-2zM115 7h2v1h-2zM119 7h2v1h-2zM115 8h5v1h-5zM122 0h2v1h-2zM122 1h2v1h-2zM122 2h2v1h-2zM122 3h2v1h-2zM122 4h2v1h-2zM122 5h2v1h-2zM126 5h2v1h-2zM122 6h2v1h-2zM126 6h2v1h-2zM122 7h2v1h-2zM126 7h2v1h-2zM123 8h4v1h-4zM130 0h4v1h-4zM129 1h2v1h-2zM133 1h2v1h-2zM129 2h2v1h-2zM133 2h2v1h-2zM129 3h2v1h-2zM133 3h2v1h-2zM130 4h2v1h-2zM129 5h2v1h-2zM133 5h2v1h-2zM129 6h2v1h-2zM133 6h2v1h-2zM129 7h2v1h-2zM133 7h2v1h-2zM130 8h4v1h-4zM136 0h5v1h-5zM136 1h2v1h-2zM140 1h2v1h-2zM136 2h2v1h-2zM140 2h2v1h-2zM136 3h2v1h-2zM140 3h2v1h-2zM136 4h2v1h-2zM140 4h2v1h-2zM136 5h2v1h-2zM140 5h2v1h-2zM136 6h2v1h-2zM140 6h2v1h-2zM136 7h2v1h-2zM140 7h2v1h-2zM136 8h5v1h-5z"/></svg>
<svg class="r" style="left:188px;top:364px" width="130" height="9" viewBox="0 0 130 9" shape-rendering="crispEdges"><path fill="#e59b5f" d="M1 0h4v1h-4zM0 1h2v1h-2zM4 1h2v1h-2zM0 2h2v1h-2zM4 2h2v1h-2zM0 3h2v1h-2zM3 3h2v1h-2zM0 4h2v1h-2zM4 4h2v1h-2zM0 5h2v1h-2zM4 5h2v1h-2zM0 6h2v1h-2zM4 6h2v1h-2zM0 7h2v1h-2zM4 7h2v1h-2zM0 8h5v1h-5zM8 0h4v1h-4zM7 1h2v1h-2zM11 1h2v1h-2zM7 2h2v1h-2zM11 2h2v1h-2zM7 3h2v1h-2zM10 3h3v1h-3zM7 4h2v1h-2zM11 4h2v1h-2zM7 5h2v1h-2zM11 5h2v1h-2zM7 6h2v1h-2zM11 6h2v1h-2zM7 7h2v1h-2zM11 7h2v1h-2zM7 8h2v1h-2zM11 8h2v1h-2zM15 0h4v1h-4zM14 1h2v1h-2zM18 1h2v1h-2zM14 2h2v1h-2zM14 3h2v1h-2zM15 4h4v1h-4zM18 5h2v1h-2zM14 6h2v1h-2zM18 6h2v1h-2zM14 7h2v1h-2zM18 7h2v1h-2zM15 8h4v1h-4zM22 0h4v1h-4zM21 1h2v1h-2zM25 1h2v1h-2zM21 2h2v1h-2zM25 2h2v1h-2zM21 3h2v1h-2zM25 3h2v1h-2zM22 4h2v1h-2zM21 5h2v1h-2zM25 5h2v1h-2zM21 6h2v1h-2zM25 6h2v1h-2zM21 7h2v1h-2zM25 7h2v1h-2zM22 8h4v1h-4zM28 8h6v1h-6zM36 0h4v1h-4zM35 1h2v1h-2zM39 1h2v1h-2zM35 2h2v1h-2zM39 2h2v1h-2zM35 3h2v1h-2zM39 3h2v1h-2zM35 4h2v1h-2zM35 5h2v1h-2zM39 5h2v1h-2zM35 6h2v1h-2zM39 6h2v1h-2zM35 7h2v1h-2zM39 7h2v1h-2zM36 8h4v1h-4zM43 0h4v1h-4zM42 1h2v1h-2zM46 1h2v1h-2zM42 2h2v1h-2zM46 2h2v1h-2zM42 3h2v1h-2zM46 3h2v1h-2zM42 4h2v1h-2zM46 4h2v1h-2zM42 5h2v1h-2zM46 5h2v1h-2zM42 6h2v1h-2zM46 6h2v1h-2zM42 7h2v1h-2zM46 7h2v1h-2zM43 8h4v1h-4zM49 0h2v1h-2zM49 1h2v1h-2zM49 2h2v1h-2zM49 3h2v1h-2zM49 4h2v1h-2zM49 5h2v1h-2zM53 5h2v1h-2zM49 6h2v1h-2zM53 6h2v1h-2zM49 7h2v1h-2zM53 7h2v1h-2zM50 8h4v1h-4zM57 0h4v1h-4zM56 1h2v1h-2zM60 1h2v1h-2zM56 2h2v1h-2zM60 2h2v1h-2zM56 3h2v1h-2zM60 3h2v1h-2zM56 4h2v1h-2zM60 4h2v1h-2zM56 5h2v1h-2zM60 5h2v1h-2zM56 6h2v1h-2zM60 6h2v1h-2zM56 7h2v1h-2zM60 7h2v1h-2zM57 8h4v1h-4zM63 0h5v1h-5zM63 1h2v1h-2zM67 1h2v1h-2zM63 2h2v1h-2zM67 2h2v1h-2zM63 3h2v1h-2zM66 3h2v1h-2zM63 4h2v1h-2zM67 4h2v1h-2zM63 5h2v1h-2zM67 5h2v1h-2zM63 6h2v1h-2zM67 6h2v1h-2zM63 7h2v1h-2zM67 7h2v1h-2zM63 8h2v1h-2zM67 8h2v1h-2zM70 8h6v1h-6zM77 0h5v1h-5zM77 1h2v1h-2zM81 1h2v1h-2zM77 2h2v1h-2zM81 2h2v1h-2zM77 3h2v1h-2zM81 3h2v1h-2zM77 4h2v1h-2zM81 4h2v1h-2zM77 5h2v1h-2zM81 5h2v1h-2zM77 6h2v1h-2zM81 6h2v1h-2zM77 7h2v1h-2zM81 7h2v1h-2zM77 8h5v1h-5zM84 0h2v1h-2zM84 1h2v1h-2zM84 2h2v1h-2zM84 3h2v1h-2zM84 4h2v1h-2zM84 5h2v1h-2zM84 6h2v1h-2zM84 7h2v1h-2zM84 8h2v1h-2zM88 0h4v1h-4zM87 1h2v1h-2zM91 1h2v1h-2zM87 2h2v1h-2zM87 3h2v1h-2zM88 4h4v1h-4zM91 5h2v1h-2zM87 6h2v1h-2zM91 6h2v1h-2zM87 7h2v1h-2zM91 7h2v1h-2zM88 8h4v1h-4zM95 0h4v1h-4zM94 1h2v1h-2zM98 1h2v1h-2zM94 2h2v1h-2zM98 2h2v1h-2zM94 3h2v1h-2zM97 3h3v1h-3zM94 4h2v1h-2zM98 4h2v1h-2zM94 5h2v1h-2zM98 5h2v1h-2zM94 6h2v1h-2zM98 6h2v1h-2zM94 7h2v1h-2zM98 7h2v1h-2zM94 8h2v1h-2zM98 8h2v1h-2zM102 0h4v1h-4zM101 1h2v1h-2zM105 1h2v1h-2zM101 2h2v1h-2zM105 2h2v1h-2zM101 3h2v1h-2zM104 3h2v1h-2zM101 4h2v1h-2zM105 4h2v1h-2zM101 5h2v1h-2zM105 5h2v1h-2zM101 6h2v1h-2zM105 6h2v1h-2zM101 7h2v1h-2zM105 7h2v1h-2zM101 8h5v1h-5zM108 0h2v1h-2zM108 1h2v1h-2zM108 2h2v1h-2zM108 3h2v1h-2zM108 4h2v1h-2zM108 5h2v1h-2zM112 5h2v1h-2zM108 6h2v1h-2zM112 6h2v1h-2zM108 7h2v1h-2zM112 7h2v1h-2zM109 8h4v1h-4zM116 0h4v1h-4zM115 1h2v1h-2zM119 1h2v1h-2zM115 2h2v1h-2zM119 2h2v1h-2zM115 3h2v1h-2zM119 3h2v1h-2zM116 4h2v1h-2zM115 5h2v1h-2zM119 5h2v1h-2zM115 6h2v1h-2zM119 6h2v1h-2zM115 7h2v1h-2zM119 7h2v1h-2zM116 8h4v1h-4zM122 0h5v1h-5zM122 1h2v1h-2zM126 1h2v1h-2zM122 2h2v1h-2zM126 2h2v1h-2zM122 3h2v1h-2zM126 3h2v1h-2zM122 4h2v1h-2zM126 4h2v1h-2zM122 5h2v1h-2zM126 5h2v1h-2zM122 6h2v1h-2zM126 6h2v1h-2zM122 7h2v1h-2zM126 7h2v1h-2zM122 8h5v1h-5z"/></svg>
<svg class="r" style="left:188px;top:394px" width="130" height="9" viewBox="0 0 130 9" shape-rendering="crispEdges"><path fill="#e59b5f" d="M0 0h6v1h-6zM2 1h2v1h-2zM2 2h2v1h-2zM2 3h2v1h-2zM2 4h2v1h-2zM2 5h2v1h-2zM2 6h2v1h-2zM2 7h2v1h-2zM2 8h2v1h-2zM8 0h4v1h-4zM7 1h2v1h-2zM11 1h2v1h-2zM7 2h2v1h-2zM11 2h2v1h-2zM7 3h2v1h-2zM11 3h2v1h-2zM8 4h2v1h-2zM7 5h2v1h-2zM11 5h2v1h-2zM7 6h2v1h-2zM11 6h2v1h-2zM7 7h2v1h-2zM11 7h2v1h-2zM8 8h4v1h-4zM14 0h2v1h-2zM18 0h2v1h-2zM14 1h2v1h-2zM18 1h2v1h-2zM15 2h4v1h-4zM16 3h2v1h-2zM15 4h4v1h-4zM14 5h2v1h-2zM18 5h2v1h-2zM14 6h2v1h-2zM18 6h2v1h-2zM14 7h2v1h-2zM18 7h2v1h-2zM14 8h2v1h-2zM18 8h2v1h-2zM21 0h6v1h-6zM23 1h2v1h-2zM23 2h2v1h-2zM23 3h2v1h-2zM23 4h2v1h-2zM23 5h2v1h-2zM23 6h2v1h-2zM23 7h2v1h-2zM23 8h2v1h-2zM28 8h6v1h-6zM36 0h4v1h-4zM35 1h2v1h-2zM39 1h2v1h-2zM35 2h2v1h-2zM39 2h2v1h-2zM35 3h2v1h-2zM39 3h2v1h-2zM35 4h2v1h-2zM35 5h2v1h-2zM39 5h2v1h-2zM35 6h2v1h-2zM39 6h2v1h-2zM35 7h2v1h-2zM39 7h2v1h-2zM36 8h4v1h-4zM43 0h4v1h-4zM42 1h2v1h-2zM46 1h2v1h-2zM42 2h2v1h-2zM46 2h2v1h-2zM42 3h2v1h-2zM46 3h2v1h-2zM42 4h2v1h-2zM46 4h2v1h-2zM42 5h2v1h-2zM46 5h2v1h-2zM42 6h2v1h-2zM46 6h2v1h-2zM42 7h2v1h-2zM46 7h2v1h-2zM43 8h4v1h-4zM49 0h2v1h-2zM49 1h2v1h-2zM49 2h2v1h-2zM49 3h2v1h-2zM49 4h2v1h-2zM49 5h2v1h-2zM53 5h2v1h-2zM49 6h2v1h-2zM53 6h2v1h-2zM49 7h2v1h-2zM53 7h2v1h-2zM50 8h4v1h-4zM57 0h4v1h-4zM56 1h2v1h-2zM60 1h2v1h-2zM56 2h2v1h-2zM60 2h2v1h-2zM56 3h2v1h-2zM60 3h2v1h-2zM56 4h2v1h-2zM60 4h2v1h-2zM56 5h2v1h-2zM60 5h2v1h-2zM56 6h2v1h-2zM60 6h2v1h-2zM56 7h2v1h-2zM60 7h2v1h-2zM57 8h4v1h-4zM63 0h5v1h-5zM63 1h2v1h-2zM67 1h2v1h-2zM63 2h2v1h-2zM67 2h2v1h-2zM63 3h2v1h-2zM66 3h2v1h-2zM63 4h2v1h-2zM67 4h2v1h-2zM63 5h2v1h-2zM67 5h2v1h-2zM63 6h2v1h-2zM67 6h2v1h-2zM63 7h2v1h-2zM67 7h2v1h-2zM63 8h2v1h-2zM67 8h2v1h-2zM70 8h6v1h-6zM77 0h5v1h-5zM77 1h2v1h-2zM81 1h2v1h-2zM77 2h2v1h-2zM81 2h2v1h-2zM77 3h2v1h-2zM81 3h2v1h-2zM77 4h2v1h-2zM81 4h2v1h-2zM77 5h2v1h-2zM81 5h2v1h-2zM77 6h2v1h-2zM81 6h2v1h-2zM77 7h2v1h-2zM81 7h2v1h-2zM77 8h5v1h-5zM84 0h2v1h-2zM84 1h2v1h-2zM84 2h2v1h-2zM84 3h2v1h-2zM84 4h2v1h-2zM84 5h2v1h-2zM84 6h2v1h-2zM84 7h2v1h-2zM84 8h2v1h-2zM88 0h4v1h-4zM87 1h2v1h-2zM91 1h2v1h-2zM87 2h2v1h-2zM87 3h2v1h-2zM88 4h4v1h-4zM91 5h2v1h-2zM87 6h2v1h-2zM91 6h2v1h-2zM87 7h2v1h-2zM91 7h2v1h-2zM88 8h4v1h-4zM95 0h4v1h-4zM94 1h2v1h-2zM98 1h2v1h-2zM94 2h2v1h-2zM98 2h2v1h-2zM94 3h2v1h-2zM97 3h3v1h-3zM94 4h2v1h-2zM98 4h2v1h-2zM94 5h2v1h-2zM98 5h2v1h-2zM94 6h2v1h-2zM98 6h2v1h-2zM94 7h2v1h-2zM98 7h2v1h-2zM94 8h2v1h-2zM98 8h2v1h-2zM102 0h4v1h-4zM101 1h2v1h-2zM105 1h2v1h-2zM101 2h2v1h-2zM105 2h2v1h-2zM101 3h2v1h-2zM104 3h2v1h-2zM101 4h2v1h-2zM105 4h2v1h-2zM101 5h2v1h-2zM105 5h2v1h-2zM101 6h2v1h-2zM105 6h2v1h-2zM101 7h2v1h-2zM105 7h2v1h-2zM101 8h5v1h-5zM108 0h2v1h-2zM108 1h2v1h-2zM108 2h2v1h-2zM108 3h2v1h-2zM108 4h2v1h-2zM108 5h2v1h-2zM112 5h2v1h-2zM108 6h2v1h-2zM112 6h2v1h-2zM108 7h2v1h-2zM112 7h2v1h-2zM109 8h4v1h-4zM116 0h4v1h-4zM115 1h2v1h-2zM119 1h2v1h-2zM115 2h2v1h-2zM119 2h2v1h-2zM115 3h2v1h-2zM119 3h2v1h-2zM116 4h2v1h-2zM115 5h2v1h-2zM119 5h2v1h-2zM115 6h2v1h-2zM119 6h2v1h-2zM115 7h2v1h-2zM119 7h2v1h-2zM116 8h4v1h-4zM122 0h5v1h-5zM122 1h2v1h-2zM126 1h2v1h-2zM122 2h2v1h-2zM126 2h2v1h-2zM122 3h2v1h-2zM126 3h2v1h-2zM122 4h2v1h-2zM126 4h2v1h-2zM122 5h2v1h-2zM126 5h2v1h-2zM122 6h2v1h-2zM126 6h2v1h-2zM122 7h2v1h-2zM126 7h2v1h-2zM122 8h5v1h-5z"/></svg>
<svg class="r" style="left:211px;top:424px" width="83" height="9" viewBox="0 0 83 9" shape-rendering="crispEdges"><path fill="#e59b5f" d="M1 0h4v1h-4zM0 1h2v1h-2zM4 1h2v1h-2zM0 2h2v1h-2zM4 2h2v1h-2zM0 3h2v1h-2zM3 3h2v1h-2zM0 4h2v1h-2zM4 4h2v1h-2zM0 5h2v1h-2zM4 5h2v1h-2zM0 6h2v1h-2zM4 6h2v1h-2zM0 7h2v1h-2zM4 7h2v1h-2zM0 8h5v1h-5zM8 0h4v1h-4zM7 1h2v1h-2zM11 1h2v1h-2zM7 2h2v1h-2zM11 2h2v1h-2zM7 3h2v1h-2zM11 3h2v1h-2zM7 4h2v1h-2zM11 4h2v1h-2zM7 5h2v1h-2zM11 5h2v1h-2zM7 6h2v1h-2zM11 6h2v1h-2zM7 7h2v1h-2zM11 7h2v1h-2zM8 8h4v1h-4zM14 0h5v1h-5zM14 1h2v1h-2zM18 1h2v1h-2zM14 2h2v1h-2zM18 2h2v1h-2zM14 3h2v1h-2zM17 3h2v1h-2zM14 4h2v1h-2zM18 4h2v1h-2zM14 5h2v1h-2zM18 5h2v1h-2zM14 6h2v1h-2zM18 6h2v1h-2zM14 7h2v1h-2zM18 7h2v1h-2zM14 8h2v1h-2zM18 8h2v1h-2zM21 0h5v1h-5zM21 1h2v1h-2zM25 1h2v1h-2zM21 2h2v1h-2zM25 2h2v1h-2zM21 3h2v1h-2zM25 3h2v1h-2zM21 4h2v1h-2zM25 4h2v1h-2zM21 5h2v1h-2zM25 5h2v1h-2zM21 6h2v1h-2zM25 6h2v1h-2zM21 7h2v1h-2zM25 7h2v1h-2zM21 8h5v1h-5zM29 0h4v1h-4zM28 1h2v1h-2zM32 1h2v1h-2zM28 2h2v1h-2zM32 2h2v1h-2zM28 3h2v1h-2zM32 3h2v1h-2zM29 4h2v1h-2zM28 5h2v1h-2zM32 5h2v1h-2zM28 6h2v1h-2zM32 6h2v1h-2zM28 7h2v1h-2zM32 7h2v1h-2zM29 8h4v1h-4zM35 0h5v1h-5zM35 1h2v1h-2zM39 1h2v1h-2zM35 2h2v1h-2zM39 2h2v1h-2zM35 3h2v1h-2zM38 3h2v1h-2zM35 4h2v1h-2zM39 4h2v1h-2zM35 5h2v1h-2zM39 5h2v1h-2zM35 6h2v1h-2zM39 6h2v1h-2zM35 7h2v1h-2zM39 7h2v1h-2zM35 8h2v1h-2zM39 8h2v1h-2zM42 8h6v1h-6zM49 0h2v1h-2zM52 0h2v1h-2zM55 0h2v1h-2zM49 1h2v1h-2zM52 1h2v1h-2zM55 1h2v1h-2zM49 2h2v1h-2zM52 2h2v1h-2zM55 2h2v1h-2zM49 3h2v1h-2zM52 3h2v1h-2zM55 3h2v1h-2zM49 4h2v1h-2zM52 4h2v1h-2zM55 4h2v1h-2zM49 5h2v1h-2zM52 5h2v1h-2zM55 5h2v1h-2zM49 6h2v1h-2zM52 6h2v1h-2zM55 6h2v1h-2zM49 7h2v1h-2zM52 7h2v1h-2zM55 7h2v1h-2zM50 8h2v1h-2zM54 8h2v1h-2zM58 0h2v1h-2zM58 1h2v1h-2zM58 2h2v1h-2zM58 3h2v1h-2zM58 4h2v1h-2zM58 5h2v1h-2zM58 6h2v1h-2zM58 7h2v1h-2zM58 8h2v1h-2zM61 0h5v1h-5zM61 1h2v1h-2zM65 1h2v1h-2zM61 2h2v1h-2zM65 2h2v1h-2zM61 3h2v1h-2zM65 3h2v1h-2zM61 4h2v1h-2zM65 4h2v1h-2zM61 5h2v1h-2zM65 5h2v1h-2zM61 6h2v1h-2zM65 6h2v1h-2zM61 7h2v1h-2zM65 7h2v1h-2zM61 8h5v1h-5zM68 0h6v1h-6zM70 1h2v1h-2zM70 2h2v1h-2zM70 3h2v1h-2zM70 4h2v1h-2zM70 5h2v1h-2zM70 6h2v1h-2zM70 7h2v1h-2zM70 8h2v1h-2zM75 0h2v1h-2zM79 0h2v1h-2zM75 1h2v1h-2zM79 1h2v1h-2zM75 2h2v1h-2zM79 2h2v1h-2zM75 3h6v1h-6zM75 4h2v1h-2zM79 4h2v1h-2zM75 5h2v1h-2zM79 5h2v1h-2zM75 6h2v1h-2zM79 6h2v1h-2zM75 7h2v1h-2zM79 7h2v1h-2zM75 8h2v1h-2zM79 8h2v1h-2z"/></svg>
<svg class="r" style="left:212px;top:454px" width="81" height="9" viewBox="0 0 81 9" shape-rendering="crispEdges"><path fill="#e59b5f" d="M0 0h6v1h-6zM2 1h2v1h-2zM2 2h2v1h-2zM2 3h2v1h-2zM2 4h2v1h-2zM2 5h2v1h-2zM2 6h2v1h-2zM2 7h2v1h-2zM2 8h2v1h-2zM8 0h4v1h-4zM7 1h2v1h-2zM11 1h2v1h-2zM7 2h2v1h-2zM11 2h2v1h-2zM7 3h2v1h-2zM11 3h2v1h-2zM8 4h2v1h-2zM7 5h2v1h-2zM11 5h2v1h-2zM7 6h2v1h-2zM11 6h2v1h-2zM7 7h2v1h-2zM11 7h2v1h-2zM8 8h4v1h-4zM14 0h2v1h-2zM18 0h2v1h-2zM14 1h2v1h-2zM18 1h2v1h-2zM15 2h4v1h-4zM16 3h2v1h-2zM15 4h4v1h-4zM14 5h2v1h-2zM18 5h2v1h-2zM14 6h2v1h-2zM18 6h2v1h-2zM14 7h2v1h-2zM18 7h2v1h-2zM14 8h2v1h-2zM18 8h2v1h-2zM21 0h6v1h-6zM23 1h2v1h-2zM23 2h2v1h-2zM23 3h2v1h-2zM23 4h2v1h-2zM23 5h2v1h-2zM23 6h2v1h-2zM23 7h2v1h-2zM23 8h2v1h-2zM28 8h6v1h-6zM35 0h5v1h-5zM35 1h2v1h-2zM39 1h2v1h-2zM35 2h2v1h-2zM39 2h2v1h-2zM35 3h2v1h-2zM39 3h2v1h-2zM35 4h2v1h-2zM39 4h2v1h-2zM35 5h5v1h-5zM35 6h2v1h-2zM35 7h2v1h-2zM35 8h2v1h-2zM43 0h4v1h-4zM42 1h2v1h-2zM46 1h2v1h-2zM42 2h2v1h-2zM46 2h2v1h-2zM42 3h2v1h-2zM45 3h3v1h-3zM42 4h2v1h-2zM46 4h2v1h-2zM42 5h2v1h-2zM46 5h2v1h-2zM42 6h2v1h-2zM46 6h2v1h-2zM42 7h2v1h-2zM46 7h2v1h-2zM42 8h2v1h-2zM46 8h2v1h-2zM49 0h5v1h-5zM49 1h2v1h-2zM53 1h2v1h-2zM49 2h2v1h-2zM53 2h2v1h-2zM49 3h2v1h-2zM53 3h2v1h-2zM49 4h2v1h-2zM53 4h2v1h-2zM49 5h2v1h-2zM53 5h2v1h-2zM49 6h2v1h-2zM53 6h2v1h-2zM49 7h2v1h-2zM53 7h2v1h-2zM49 8h5v1h-5zM56 0h5v1h-5zM56 1h2v1h-2zM60 1h2v1h-2zM56 2h2v1h-2zM60 2h2v1h-2zM56 3h2v1h-2zM60 3h2v1h-2zM56 4h2v1h-2zM60 4h2v1h-2zM56 5h2v1h-2zM60 5h2v1h-2zM56 6h2v1h-2zM60 6h2v1h-2zM56 7h2v1h-2zM60 7h2v1h-2zM56 8h5v1h-5zM63 0h2v1h-2zM63 1h2v1h-2zM63 2h2v1h-2zM63 3h2v1h-2zM63 4h2v1h-2zM63 5h2v1h-2zM63 6h2v1h-2zM63 7h2v1h-2zM63 8h2v1h-2zM66 0h2v1h-2zM70 0h2v1h-2zM66 1h3v1h-3zM70 1h2v1h-2zM66 2h2v1h-2zM69 2h3v1h-3zM66 3h2v1h-2zM70 3h2v1h-2zM66 4h2v1h-2zM70 4h2v1h-2zM66 5h2v1h-2zM70 5h2v1h-2zM66 6h2v1h-2zM70 6h2v1h-2zM66 7h2v1h-2zM70 7h2v1h-2zM66 8h2v1h-2zM70 8h2v1h-2zM74 0h4v1h-4zM73 1h2v1h-2zM77 1h2v1h-2zM73 2h2v1h-2zM77 2h2v1h-2zM73 3h2v1h-2zM73 4h2v1h-2zM76 4h3v1h-3zM73 5h2v1h-2zM77 5h2v1h-2zM73 6h2v1h-2zM77 6h2v1h-2zM73 7h2v1h-2zM77 7h2v1h-2zM74 8h4v1h-4z"/></svg>
<svg class="r" style="left:204px;top:484px" width="97" height="9" viewBox="0 0 97 9" shape-rendering="crispEdges"><path fill="#e59b5f" d="M0 0h6v1h-6zM2 1h2v1h-2zM2 2h2v1h-2zM2 3h2v1h-2zM2 4h2v1h-2zM2 5h2v1h-2zM2 6h2v1h-2zM2 7h2v1h-2zM2 8h2v1h-2zM8 0h4v1h-4zM7 1h2v1h-2zM11 1h2v1h-2zM7 2h2v1h-2zM11 2h2v1h-2zM7 3h2v1h-2zM11 3h2v1h-2zM8 4h2v1h-2zM7 5h2v1h-2zM11 5h2v1h-2zM7 6h2v1h-2zM11 6h2v1h-2zM7 7h2v1h-2zM11 7h2v1h-2zM8 8h4v1h-4zM14 0h2v1h-2zM18 0h2v1h-2zM14 1h2v1h-2zM18 1h2v1h-2zM15 2h4v1h-4zM16 3h2v1h-2zM15 4h4v1h-4zM14 5h2v1h-2zM18 5h2v1h-2zM14 6h2v1h-2zM18 6h2v1h-2zM14 7h2v1h-2zM18 7h2v1h-2zM14 8h2v1h-2zM18 8h2v1h-2zM21 0h6v1h-6zM23 1h2v1h-2zM23 2h2v1h-2zM23 3h2v1h-2zM23 4h2v1h-2zM23 5h2v1h-2zM23 6h2v1h-2zM23 7h2v1h-2zM23 8h2v1h-2zM28 8h6v1h-6zM36 0h4v1h-4zM35 1h2v1h-2zM39 1h2v1h-2zM35 2h2v1h-2zM39 2h2v1h-2zM35 3h2v1h-2zM38 3h3v1h-3zM35 4h2v1h-2zM39 4h2v1h-2zM35 5h2v1h-2zM39 5h2v1h-2zM35 6h2v1h-2zM39 6h2v1h-2zM35 7h2v1h-2zM39 7h2v1h-2zM35 8h2v1h-2zM39 8h2v1h-2zM42 0h2v1h-2zM42 1h2v1h-2zM42 2h2v1h-2zM42 3h2v1h-2zM42 4h2v1h-2zM42 5h2v1h-2zM46 5h2v1h-2zM42 6h2v1h-2zM46 6h2v1h-2zM42 7h2v1h-2zM46 7h2v1h-2zM43 8h4v1h-4zM49 0h2v1h-2zM49 1h2v1h-2zM49 2h2v1h-2zM49 3h2v1h-2zM49 4h2v1h-2zM49 5h2v1h-2zM49 6h2v1h-2zM49 7h2v1h-2zM49 8h2v1h-2zM53 0h4v1h-4zM52 1h2v1h-2zM56 1h2v1h-2zM52 2h2v1h-2zM56 2h2v1h-2zM52 3h2v1h-2zM52 4h2v1h-2zM55 4h3v1h-3zM52 5h2v1h-2zM56 5h2v1h-2zM52 6h2v1h-2zM56 6h2v1h-2zM52 7h2v1h-2zM56 7h2v1h-2zM53 8h4v1h-4zM59 0h2v1h-2zM63 0h2v1h-2zM59 1h3v1h-3zM63 1h2v1h-2zM59 2h2v1h-2zM62 2h3v1h-3zM59 3h2v1h-2zM63 3h2v1h-2zM59 4h2v1h-2zM63 4h2v1h-2zM59 5h2v1h-2zM63 5h2v1h-2zM59 6h2v1h-2zM63 6h2v1h-2zM59 7h2v1h-2zM63 7h2v1h-2zM59 8h2v1h-2zM63 8h2v1h-2zM66 0h3v1h-3zM71 0h3v1h-3zM66 1h2v1h-2zM69 1h2v1h-2zM72 1h2v1h-2zM66 2h2v1h-2zM69 2h2v1h-2zM72 2h2v1h-2zM66 3h2v1h-2zM69 3h2v1h-2zM72 3h2v1h-2zM66 4h2v1h-2zM69 4h2v1h-2zM72 4h2v1h-2zM66 5h2v1h-2zM69 5h2v1h-2zM72 5h2v1h-2zM66 6h2v1h-2zM69 6h2v1h-2zM72 6h2v1h-2zM66 7h2v1h-2zM69 7h2v1h-2zM72 7h2v1h-2zM66 8h2v1h-2zM69 8h2v1h-2zM72 8h2v1h-2zM76 0h4v1h-4zM75 1h2v1h-2zM79 1h2v1h-2zM75 2h2v1h-2zM79 2h2v1h-2zM75 3h2v1h-2zM79 3h2v1h-2zM76 4h2v1h-2zM75 5h2v1h-2zM79 5h2v1h-2zM75 6h2v1h-2zM79 6h2v1h-2zM75 7h2v1h-2zM79 7h2v1h-2zM76 8h4v1h-4zM82 0h2v1h-2zM86 0h2v1h-2zM82 1h3v1h-3zM86 1h2v1h-2zM82 2h2v1h-2zM85 2h3v1h-3zM82 3h2v1h-2zM86 3h2v1h-2zM82 4h2v1h-2zM86 4h2v1h-2zM82 5h2v1h-2zM86 5h2v1h-2zM82 6h2v1h-2zM86 6h2v1h-2zM82 7h2v1h-2zM86 7h2v1h-2zM82 8h2v1h-2zM86 8h2v1h-2zM89 0h6v1h-6zM91 1h2v1h-2zM91 2h2v1h-2zM91 3h2v1h-2zM91 4h2v1h-2zM91 5h2v1h-2zM91 6h2v1h-2zM91 7h2v1h-2zM91 8h2v1h-2z"/></svg>
<svg class="r" style="left:382px;top:58px" width="136" height="12" viewBox="0 -1 136 12" shape-rendering="crispEdges"><path fill="#e59b5f" d="M1 0h4v1h-4zM0 1h2v1h-2zM4 1h2v1h-2zM0 2h2v1h-2zM0 3h2v1h-2zM1 4h4v1h-4zM4 5h2v1h-2zM0 6h2v1h-2zM4 6h2v1h-2zM0 7h2v1h-2zM4 7h2v1h-2zM1 8h4v1h-4zM8 2h4v1h-4zM7 3h2v1h-2zM11 3h2v1h-2zM10 4h3v1h-3zM8 5h5v1h-5zM7 6h2v1h-2zM11 6h2v1h-2zM7 7h2v1h-2zM11 7h2v1h-2zM8 8h5v1h-5zM14 2h7v1h-7zM14 3h2v1h-2zM17 3h2v1h-2zM20 3h2v1h-2zM14 4h2v1h-2zM17 4h2v1h-2zM20 4h2v1h-2zM14 5h2v1h-2zM17 5h2v1h-2zM20 5h2v1h-2zM14 6h2v1h-2zM17 6h2v1h-2zM20 6h2v1h-2zM14 7h2v1h-2zM17 7h2v1h-2zM20 7h2v1h-2zM14 8h2v1h-2zM17 8h2v1h-2zM20 8h2v1h-2zM23 2h5v1h-5zM23 3h2v1h-2zM27 3h2v1h-2zM23 4h2v1h-2zM27 4h2v1h-2zM23 5h2v1h-2zM27 5h2v1h-2zM23 6h2v1h-2zM27 6h2v1h-2zM23 7h2v1h-2zM27 7h2v1h-2zM23 8h5v1h-5zM23 9h2v1h-2zM23 10h2v1h-2zM30 -1h2v1h-2zM30 0h2v1h-2zM30 1h2v1h-2zM30 2h2v1h-2zM30 3h2v1h-2zM30 4h2v1h-2zM30 5h2v1h-2zM30 6h2v1h-2zM30 7h2v1h-2zM31 8h2v1h-2zM35 2h4v1h-4zM34 3h2v1h-2zM38 3h2v1h-2zM35 4h3v1h-3zM34 5h2v1h-2zM34 6h2v1h-2zM38 6h2v1h-2zM34 7h2v1h-2zM38 7h2v1h-2zM35 8h4v1h-4zM44 2h5v1h-5zM44 3h2v1h-2zM48 3h2v1h-2zM44 4h2v1h-2zM44 5h2v1h-2zM44 6h2v1h-2zM44 7h2v1h-2zM44 8h2v1h-2zM52 2h4v1h-4zM51 3h2v1h-2zM55 3h2v1h-2zM54 4h3v1h-3zM52 5h5v1h-5zM51 6h2v1h-2zM55 6h2v1h-2zM51 7h2v1h-2zM55 7h2v1h-2zM52 8h5v1h-5zM58 2h2v1h-2zM62 2h2v1h-2zM58 3h2v1h-2zM62 3h2v1h-2zM58 4h2v1h-2zM62 4h2v1h-2zM58 5h2v1h-2zM62 5h2v1h-2zM58 6h2v1h-2zM62 6h2v1h-2zM58 7h2v1h-2zM62 7h2v1h-2zM59 8h5v1h-5zM62 9h2v1h-2zM59 10h4v1h-4zM66 2h5v1h-5zM65 3h2v1h-2zM69 3h2v1h-2zM65 4h2v1h-2zM69 4h2v1h-2zM65 5h2v1h-2zM69 5h2v1h-2zM65 6h2v1h-2zM69 6h2v1h-2zM65 7h2v1h-2zM69 7h2v1h-2zM66 8h5v1h-5zM69 9h2v1h-2zM66 10h4v1h-4zM72 2h2v1h-2zM76 2h2v1h-2zM72 3h2v1h-2zM76 3h2v1h-2zM72 4h2v1h-2zM76 4h2v1h-2zM72 5h2v1h-2zM76 5h2v1h-2zM72 6h2v1h-2zM76 6h2v1h-2zM72 7h2v1h-2zM76 7h2v1h-2zM73 8h5v1h-5zM79 -1h2v1h-2zM79 0h2v1h-2zM79 2h2v1h-2zM79 3h2v1h-2zM79 4h2v1h-2zM79 5h2v1h-2zM79 6h2v1h-2zM79 7h2v1h-2zM79 8h2v1h-2zM86 2h4v1h-4zM85 3h2v1h-2zM89 3h2v1h-2zM85 4h2v1h-2zM85 5h2v1h-2zM85 6h2v1h-2zM85 7h2v1h-2zM89 7h2v1h-2zM86 8h4v1h-4zM93 2h4v1h-4zM92 3h2v1h-2zM96 3h2v1h-2zM92 4h2v1h-2zM96 4h2v1h-2zM92 5h2v1h-2zM96 5h2v1h-2zM92 6h2v1h-2zM96 6h2v1h-2zM92 7h2v1h-2zM96 7h2v1h-2zM93 8h4v1h-4zM99 2h5v1h-5zM99 3h2v1h-2zM103 3h2v1h-2zM99 4h2v1h-2zM103 4h2v1h-2zM99 5h2v1h-2zM103 5h2v1h-2zM99 6h2v1h-2zM103 6h2v1h-2zM99 7h2v1h-2zM103 7h2v1h-2zM99 8h2v1h-2zM103 8h2v1h-2zM106 -1h2v1h-2zM106 0h2v1h-2zM106 1h2v1h-2zM106 2h3v1h-3zM106 3h2v1h-2zM106 4h2v1h-2zM106 5h2v1h-2zM106 6h2v1h-2zM106 7h2v1h-2zM107 8h2v1h-2zM110 2h5v1h-5zM110 3h2v1h-2zM114 3h2v1h-2zM110 4h2v1h-2zM110 5h2v1h-2zM110 6h2v1h-2zM110 7h2v1h-2zM110 8h2v1h-2zM118 2h4v1h-4zM117 3h2v1h-2zM121 3h2v1h-2zM117 4h2v1h-2zM121 4h2v1h-2zM117 5h2v1h-2zM121 5h2v1h-2zM117 6h2v1h-2zM121 6h2v1h-2zM117 7h2v1h-2zM121 7h2v1h-2zM118 8h4v1h-4zM124 -1h2v1h-2zM124 0h2v1h-2zM124 1h2v1h-2zM124 2h2v1h-2zM124 3h2v1h-2zM124 4h2v1h-2zM124 5h2v1h-2zM124 6h2v1h-2zM124 7h2v1h-2zM125 8h2v1h-2zM129 2h4v1h-4zM128 3h2v1h-2zM132 3h2v1h-2zM128 4h2v1h-2zM129 5h4v1h-4zM132 6h2v1h-2zM128 7h2v1h-2zM132 7h2v1h-2zM129 8h4v1h-4z"/></svg>
<svg class="r" style="left:375px;top:88px" width="92" height="12" viewBox="0 -1 92 12" shape-rendering="crispEdges"><path fill="#d77575" d="M0 0h5v1h-5zM0 1h2v1h-2zM4 1h2v1h-2zM0 2h2v1h-2zM4 2h2v1h-2zM0 3h2v1h-2zM4 3h2v1h-2zM0 4h2v1h-2zM4 4h2v1h-2zM0 5h5v1h-5zM0 6h2v1h-2zM0 7h2v1h-2zM0 8h2v1h-2zM7 2h5v1h-5zM7 3h2v1h-2zM11 3h2v1h-2zM7 4h2v1h-2zM7 5h2v1h-2zM7 6h2v1h-2zM7 7h2v1h-2zM7 8h2v1h-2zM15 2h4v1h-4zM14 3h2v1h-2zM18 3h2v1h-2zM14 4h2v1h-2zM18 4h2v1h-2zM14 5h2v1h-2zM18 5h2v1h-2zM14 6h2v1h-2zM18 6h2v1h-2zM14 7h2v1h-2zM18 7h2v1h-2zM15 8h4v1h-4zM21 2h5v1h-5zM21 3h2v1h-2zM25 3h2v1h-2zM21 4h2v1h-2zM25 4h2v1h-2zM21 5h2v1h-2zM25 5h2v1h-2zM21 6h2v1h-2zM25 6h2v1h-2zM21 7h2v1h-2zM25 7h2v1h-2zM21 8h5v1h-5zM21 9h2v1h-2zM21 10h2v1h-2zM29 2h4v1h-4zM28 3h2v1h-2zM32 3h2v1h-2zM29 4h3v1h-3zM28 5h2v1h-2zM28 6h2v1h-2zM32 6h2v1h-2zM28 7h2v1h-2zM32 7h2v1h-2zM29 8h4v1h-4zM35 2h5v1h-5zM35 3h2v1h-2zM39 3h2v1h-2zM35 4h2v1h-2zM35 5h2v1h-2zM35 6h2v1h-2zM35 7h2v1h-2zM35 8h2v1h-2zM42 -1h2v1h-2zM42 0h2v1h-2zM42 1h2v1h-2zM42 2h3v1h-3zM42 3h2v1h-2zM42 4h2v1h-2zM42 5h2v1h-2zM42 6h2v1h-2zM42 7h2v1h-2zM43 8h2v1h-2zM46 2h2v1h-2zM50 2h2v1h-2zM46 3h2v1h-2zM50 3h2v1h-2zM46 4h2v1h-2zM50 4h2v1h-2zM46 5h2v1h-2zM50 5h2v1h-2zM46 6h2v1h-2zM50 6h2v1h-2zM46 7h2v1h-2zM50 7h2v1h-2zM47 8h5v1h-5zM50 9h2v1h-2zM47 10h4v1h-4zM57 0h4v1h-4zM56 1h2v1h-2zM60 1h2v1h-2zM56 2h2v1h-2zM60 2h2v1h-2zM56 3h2v1h-2zM60 3h2v1h-2zM57 4h2v1h-2zM56 5h2v1h-2zM60 5h2v1h-2zM56 6h2v1h-2zM60 6h2v1h-2zM56 7h2v1h-2zM60 7h2v1h-2zM57 8h4v1h-4zM67 -1h2v1h-2zM67 0h2v1h-2zM67 1h2v1h-2zM64 2h5v1h-5zM63 3h2v1h-2zM67 3h2v1h-2zM63 4h2v1h-2zM67 4h2v1h-2zM63 5h2v1h-2zM67 5h2v1h-2zM63 6h2v1h-2zM67 6h2v1h-2zM63 7h2v1h-2zM67 7h2v1h-2zM64 8h5v1h-5zM70 -1h2v1h-2zM70 0h2v1h-2zM70 2h2v1h-2zM70 3h2v1h-2zM70 4h2v1h-2zM70 5h2v1h-2zM70 6h2v1h-2zM70 7h2v1h-2zM70 8h2v1h-2zM73 -1h2v1h-2zM73 0h2v1h-2zM73 1h2v1h-2zM73 2h3v1h-3zM73 3h2v1h-2zM73 4h2v1h-2zM73 5h2v1h-2zM73 6h2v1h-2zM73 7h2v1h-2zM74 8h2v1h-2zM78 2h4v1h-4zM77 3h2v1h-2zM81 3h2v1h-2zM77 4h2v1h-2zM81 4h2v1h-2zM77 5h2v1h-2zM81 5h2v1h-2zM77 6h2v1h-2zM81 6h2v1h-2zM77 7h2v1h-2zM81 7h2v1h-2zM78 8h4v1h-4zM84 2h5v1h-5zM84 3h2v1h-2zM88 3h2v1h-2zM84 4h2v1h-2zM84 5h2v1h-2zM84 6h2v1h-2zM84 7h2v1h-2zM84 8h2v1h-2z"/></svg>
<svg class="r" style="left:374px;top:110px" width="36" height="10" viewBox="0 -1 36 10" shape-rendering="crispEdges"><path fill="#9c8369" d="M0 0h2v1h-2zM4 0h2v1h-2zM0 1h2v1h-2zM4 1h2v1h-2zM0 2h2v1h-2zM4 2h2v1h-2zM0 3h2v1h-2zM4 3h2v1h-2zM0 4h2v1h-2zM4 4h2v1h-2zM0 5h2v1h-2zM4 5h2v1h-2zM0 6h2v1h-2zM4 6h2v1h-2zM1 7h4v1h-4zM2 8h2v1h-2zM8 2h4v1h-4zM7 3h2v1h-2zM11 3h2v1h-2zM10 4h3v1h-3zM8 5h5v1h-5zM7 6h2v1h-2zM11 6h2v1h-2zM7 7h2v1h-2zM11 7h2v1h-2zM8 8h5v1h-5zM14 -1h2v1h-2zM14 0h2v1h-2zM14 1h2v1h-2zM14 2h2v1h-2zM14 3h2v1h-2zM14 4h2v1h-2zM14 5h2v1h-2zM14 6h2v1h-2zM14 7h2v1h-2zM15 8h2v1h-2zM18 2h2v1h-2zM22 2h2v1h-2zM18 3h2v1h-2zM22 3h2v1h-2zM18 4h2v1h-2zM22 4h2v1h-2zM18 5h2v1h-2zM22 5h2v1h-2zM18 6h2v1h-2zM22 6h2v1h-2zM18 7h2v1h-2zM22 7h2v1h-2zM19 8h5v1h-5zM26 2h4v1h-4zM25 3h2v1h-2zM29 3h2v1h-2zM26 4h3v1h-3zM25 5h2v1h-2zM25 6h2v1h-2zM29 6h2v1h-2zM25 7h2v1h-2zM29 7h2v1h-2zM26 8h4v1h-4zM32 3h2v1h-2zM32 4h2v1h-2zM32 7h2v1h-2zM32 8h2v1h-2z"/></svg>
<svg class="r" style="left:685px;top:111px" width="8" height="9" viewBox="0 0 8 9" shape-rendering="crispEdges"><path fill="#a68b6d" d="M1 0h4v1h-4zM0 1h2v1h-2zM4 1h2v1h-2zM0 2h2v1h-2zM4 2h2v1h-2zM0 3h2v1h-2zM4 3h2v1h-2zM0 4h2v1h-2zM3 4h3v1h-3zM0 5h3v1h-3zM4 5h2v1h-2zM0 6h2v1h-2zM4 6h2v1h-2zM0 7h2v1h-2zM4 7h2v1h-2zM1 8h4v1h-4z"/></svg>
<svg class="r" style="left:670px;top:149px" width="29" height="9" viewBox="0 0 29 9" shape-rendering="crispEdges"><path fill="#d77575" d="M0 0h5v1h-5zM0 1h2v1h-2zM4 1h2v1h-2zM0 2h2v1h-2zM4 2h2v1h-2zM0 3h2v1h-2zM3 3h2v1h-2zM0 4h2v1h-2zM4 4h2v1h-2zM0 5h2v1h-2zM4 5h2v1h-2zM0 6h2v1h-2zM4 6h2v1h-2zM0 7h2v1h-2zM4 7h2v1h-2zM0 8h2v1h-2zM4 8h2v1h-2zM8 0h4v1h-4zM7 1h2v1h-2zM11 1h2v1h-2zM7 2h2v1h-2zM11 2h2v1h-2zM7 3h2v1h-2zM7 4h2v1h-2zM10 4h3v1h-3zM7 5h2v1h-2zM11 5h2v1h-2zM7 6h2v1h-2zM11 6h2v1h-2zM7 7h2v1h-2zM11 7h2v1h-2zM8 8h4v1h-4zM15 0h4v1h-4zM14 1h2v1h-2zM18 1h2v1h-2zM14 2h2v1h-2zM18 2h2v1h-2zM14 3h2v1h-2zM17 3h2v1h-2zM14 4h2v1h-2zM18 4h2v1h-2zM14 5h2v1h-2zM18 5h2v1h-2zM14 6h2v1h-2zM18 6h2v1h-2zM14 7h2v1h-2zM18 7h2v1h-2zM14 8h5v1h-5zM22 0h4v1h-4zM21 1h2v1h-2zM25 1h2v1h-2zM21 2h2v1h-2zM25 2h2v1h-2zM21 3h2v1h-2zM24 3h3v1h-3zM21 4h2v1h-2zM25 4h2v1h-2zM21 5h2v1h-2zM25 5h2v1h-2zM21 6h2v1h-2zM25 6h2v1h-2zM21 7h2v1h-2zM25 7h2v1h-2zM21 8h2v1h-2zM25 8h2v1h-2z"/></svg>
<svg class="r" style="left:664px;top:162px" width="38" height="9" viewBox="0 0 38 9" shape-rendering="crispEdges"><path fill="#e59b5f" d="M0 0h5v1h-5zM0 1h2v1h-2zM4 1h2v1h-2zM0 2h2v1h-2zM4 2h2v1h-2zM0 3h2v1h-2zM3 3h2v1h-2zM0 4h2v1h-2zM4 4h2v1h-2zM0 5h2v1h-2zM4 5h2v1h-2zM0 6h2v1h-2zM4 6h2v1h-2zM0 7h2v1h-2zM4 7h2v1h-2zM0 8h2v1h-2zM4 8h2v1h-2zM7 3h2v1h-2zM7 4h2v1h-2zM7 7h2v1h-2zM7 8h2v1h-2zM17 0h4v1h-4zM16 1h2v1h-2zM20 1h2v1h-2zM19 2h3v1h-3zM17 3h3v1h-3zM16 4h3v1h-3zM16 5h2v1h-2zM16 6h2v1h-2zM20 6h2v1h-2zM16 7h2v1h-2zM20 7h2v1h-2zM16 8h6v1h-6zM24 0h4v1h-4zM23 1h2v1h-2zM27 1h2v1h-2zM27 2h2v1h-2zM26 3h2v1h-2zM27 4h2v1h-2zM27 5h2v1h-2zM23 6h2v1h-2zM27 6h2v1h-2zM23 7h2v1h-2zM27 7h2v1h-2zM24 8h4v1h-4zM31 0h4v1h-4zM31 1h2v1h-2zM34 1h2v1h-2zM31 2h2v1h-2zM34 2h2v1h-2zM31 3h4v1h-4zM30 4h2v1h-2zM34 4h2v1h-2zM30 5h2v1h-2zM34 5h2v1h-2zM30 6h2v1h-2zM34 6h2v1h-2zM30 7h2v1h-2zM34 7h2v1h-2zM31 8h4v1h-4z"/></svg>
<svg class="r" style="left:664px;top:177px" width="36" height="9" viewBox="0 0 36 9" shape-rendering="crispEdges"><path fill="#e59b5f" d="M1 0h4v1h-4zM0 1h2v1h-2zM4 1h2v1h-2zM0 2h2v1h-2zM4 2h2v1h-2zM0 3h2v1h-2zM0 4h2v1h-2zM3 4h3v1h-3zM0 5h2v1h-2zM4 5h2v1h-2zM0 6h2v1h-2zM4 6h2v1h-2zM0 7h2v1h-2zM4 7h2v1h-2zM1 8h4v1h-4zM7 3h2v1h-2zM7 4h2v1h-2zM7 7h2v1h-2zM7 8h2v1h-2zM17 0h2v1h-2zM16 1h3v1h-3zM17 2h2v1h-2zM17 3h2v1h-2zM17 4h2v1h-2zM17 5h2v1h-2zM17 6h2v1h-2zM17 7h2v1h-2zM16 8h4v1h-4zM22 0h4v1h-4zM21 1h2v1h-2zM25 1h2v1h-2zM24 2h3v1h-3zM22 3h3v1h-3zM21 4h3v1h-3zM21 5h2v1h-2zM21 6h2v1h-2zM25 6h2v1h-2zM21 7h2v1h-2zM25 7h2v1h-2zM21 8h6v1h-6zM29 0h4v1h-4zM28 1h2v1h-2zM32 1h2v1h-2zM28 2h2v1h-2zM32 2h2v1h-2zM28 3h2v1h-2zM32 3h2v1h-2zM29 4h5v1h-5zM32 5h2v1h-2zM28 6h2v1h-2zM32 6h2v1h-2zM28 7h2v1h-2zM32 7h2v1h-2zM29 8h4v1h-4z"/></svg>
<svg class="r" style="left:664px;top:192px" width="38" height="9" viewBox="0 0 38 9" shape-rendering="crispEdges"><path fill="#e59b5f" d="M1 0h4v1h-4zM0 1h2v1h-2zM4 1h2v1h-2zM0 2h2v1h-2zM4 2h2v1h-2zM0 3h2v1h-2zM3 3h2v1h-2zM0 4h2v1h-2zM4 4h2v1h-2zM0 5h2v1h-2zM4 5h2v1h-2zM0 6h2v1h-2zM4 6h2v1h-2zM0 7h2v1h-2zM4 7h2v1h-2zM0 8h5v1h-5zM7 3h2v1h-2zM7 4h2v1h-2zM7 7h2v1h-2zM7 8h2v1h-2zM17 0h4v1h-4zM16 1h2v1h-2zM20 1h2v1h-2zM16 2h2v1h-2zM20 2h2v1h-2zM16 3h2v1h-2zM20 3h2v1h-2zM16 4h2v1h-2zM19 4h3v1h-3zM16 5h3v1h-3zM20 5h2v1h-2zM16 6h2v1h-2zM20 6h2v1h-2zM16 7h2v1h-2zM20 7h2v1h-2zM17 8h4v1h-4zM24 0h4v1h-4zM23 1h2v1h-2zM27 1h2v1h-2zM23 2h2v1h-2zM23 3h2v1h-2zM23 4h5v1h-5zM23 5h2v1h-2zM27 5h2v1h-2zM23 6h2v1h-2zM27 6h2v1h-2zM23 7h2v1h-2zM27 7h2v1h-2zM24 8h4v1h-4zM31 0h4v1h-4zM30 1h2v1h-2zM34 1h2v1h-2zM34 2h2v1h-2zM33 3h2v1h-2zM34 4h2v1h-2zM34 5h2v1h-2zM30 6h2v1h-2zM34 6h2v1h-2zM30 7h2v1h-2zM34 7h2v1h-2zM31 8h4v1h-4z"/></svg>
<svg class="r" style="left:670px;top:214px" width="22" height="9" viewBox="0 0 22 9" shape-rendering="crispEdges"><path fill="#d77575" d="M0 0h2v1h-2zM4 0h2v1h-2zM0 1h2v1h-2zM4 1h2v1h-2zM0 2h2v1h-2zM4 2h2v1h-2zM0 3h6v1h-6zM0 4h2v1h-2zM4 4h2v1h-2zM0 5h2v1h-2zM4 5h2v1h-2zM0 6h2v1h-2zM4 6h2v1h-2zM0 7h2v1h-2zM4 7h2v1h-2zM0 8h2v1h-2zM4 8h2v1h-2zM8 0h4v1h-4zM7 1h2v1h-2zM11 1h2v1h-2zM7 2h2v1h-2zM7 3h2v1h-2zM8 4h4v1h-4zM11 5h2v1h-2zM7 6h2v1h-2zM11 6h2v1h-2zM7 7h2v1h-2zM11 7h2v1h-2zM8 8h4v1h-4zM14 0h2v1h-2zM18 0h2v1h-2zM14 1h2v1h-2zM18 1h2v1h-2zM14 2h2v1h-2zM18 2h2v1h-2zM14 3h2v1h-2zM18 3h2v1h-2zM14 4h2v1h-2zM18 4h2v1h-2zM14 5h2v1h-2zM18 5h2v1h-2zM14 6h2v1h-2zM18 6h2v1h-2zM15 7h4v1h-4zM16 8h2v1h-2z"/></svg>
<svg class="r" style="left:664px;top:227px" width="31" height="9" viewBox="0 0 31 9" shape-rendering="crispEdges"><path fill="#e59b5f" d="M0 0h2v1h-2zM4 0h2v1h-2zM0 1h2v1h-2zM4 1h2v1h-2zM0 2h2v1h-2zM4 2h2v1h-2zM0 3h6v1h-6zM0 4h2v1h-2zM4 4h2v1h-2zM0 5h2v1h-2zM4 5h2v1h-2zM0 6h2v1h-2zM4 6h2v1h-2zM0 7h2v1h-2zM4 7h2v1h-2zM0 8h2v1h-2zM4 8h2v1h-2zM7 3h2v1h-2zM7 4h2v1h-2zM7 7h2v1h-2zM7 8h2v1h-2zM17 0h4v1h-4zM16 1h2v1h-2zM20 1h2v1h-2zM19 2h3v1h-3zM17 3h3v1h-3zM16 4h3v1h-3zM16 5h2v1h-2zM16 6h2v1h-2zM20 6h2v1h-2zM16 7h2v1h-2zM20 7h2v1h-2zM16 8h6v1h-6zM24 0h4v1h-4zM23 1h2v1h-2zM27 1h2v1h-2zM27 2h2v1h-2zM26 3h2v1h-2zM27 4h2v1h-2zM27 5h2v1h-2zM23 6h2v1h-2zM27 6h2v1h-2zM23 7h2v1h-2zM27 7h2v1h-2zM24 8h4v1h-4z"/></svg>
<svg class="r" style="left:664px;top:242px" width="40" height="9" viewBox="0 0 40 9" shape-rendering="crispEdges"><path fill="#e59b5f" d="M1 0h4v1h-4zM0 1h2v1h-2zM4 1h2v1h-2zM0 2h2v1h-2zM0 3h2v1h-2zM1 4h4v1h-4zM4 5h2v1h-2zM0 6h2v1h-2zM4 6h2v1h-2zM0 7h2v1h-2zM4 7h2v1h-2zM1 8h4v1h-4zM7 3h2v1h-2zM7 4h2v1h-2zM7 7h2v1h-2zM7 8h2v1h-2zM16 0h6v1h-6zM16 1h2v1h-2zM20 1h2v1h-2zM19 2h2v1h-2zM19 3h2v1h-2zM18 4h2v1h-2zM18 5h2v1h-2zM18 6h2v1h-2zM18 7h2v1h-2zM18 8h2v1h-2zM27 0h2v1h-2zM26 1h3v1h-3zM25 2h1v1h-1zM27 2h2v1h-2zM24 3h1v1h-1zM27 3h2v1h-2zM23 4h2v1h-2zM27 4h2v1h-2zM23 5h7v1h-7zM27 6h2v1h-2zM27 7h2v1h-2zM27 8h2v1h-2zM31 0h2v1h-2zM35 0h2v1h-2zM31 1h2v1h-2zM35 1h2v1h-2zM31 2h2v1h-2zM34 2h2v1h-2zM34 3h2v1h-2zM33 4h2v1h-2zM33 5h2v1h-2zM32 6h2v1h-2zM36 6h2v1h-2zM32 7h2v1h-2zM36 7h2v1h-2zM32 8h2v1h-2zM36 8h2v1h-2z"/></svg>
<svg class="r" style="left:664px;top:257px" width="39" height="9" viewBox="0 0 39 9" shape-rendering="crispEdges"><path fill="#e59b5f" d="M0 0h2v1h-2zM4 0h2v1h-2zM0 1h2v1h-2zM4 1h2v1h-2zM0 2h2v1h-2zM4 2h2v1h-2zM0 3h2v1h-2zM4 3h2v1h-2zM0 4h2v1h-2zM4 4h2v1h-2zM0 5h2v1h-2zM4 5h2v1h-2zM0 6h2v1h-2zM4 6h2v1h-2zM1 7h4v1h-4zM2 8h2v1h-2zM7 3h2v1h-2zM7 4h2v1h-2zM7 7h2v1h-2zM7 8h2v1h-2zM17 0h4v1h-4zM16 1h2v1h-2zM20 1h2v1h-2zM16 2h2v1h-2zM20 2h2v1h-2zM16 3h2v1h-2zM20 3h2v1h-2zM17 4h5v1h-5zM20 5h2v1h-2zM16 6h2v1h-2zM20 6h2v1h-2zM16 7h2v1h-2zM20 7h2v1h-2zM17 8h4v1h-4zM24 0h4v1h-4zM23 1h2v1h-2zM27 1h2v1h-2zM27 2h2v1h-2zM26 3h2v1h-2zM27 4h2v1h-2zM27 5h2v1h-2zM23 6h2v1h-2zM27 6h2v1h-2zM23 7h2v1h-2zM27 7h2v1h-2zM24 8h4v1h-4zM30 0h2v1h-2zM34 0h2v1h-2zM30 1h2v1h-2zM34 1h2v1h-2zM30 2h2v1h-2zM33 2h2v1h-2zM33 3h2v1h-2zM32 4h2v1h-2zM32 5h2v1h-2zM31 6h2v1h-2zM35 6h2v1h-2zM31 7h2v1h-2zM35 7h2v1h-2zM31 8h2v1h-2zM35 8h2v1h-2z"/></svg>
<svg class="r" style="left:663px;top:372px" width="55" height="9" viewBox="0 0 55 9" shape-rendering="crispEdges"><path fill="#e59b5f" d="M1 0h4v1h-4zM0 1h2v1h-2zM4 1h2v1h-2zM0 2h2v1h-2zM4 2h2v1h-2zM0 3h2v1h-2zM4 3h2v1h-2zM1 4h2v1h-2zM0 5h2v1h-2zM4 5h2v1h-2zM0 6h2v1h-2zM4 6h2v1h-2zM0 7h2v1h-2zM4 7h2v1h-2zM1 8h4v1h-4zM8 0h4v1h-4zM7 1h2v1h-2zM11 1h2v1h-2zM7 2h2v1h-2zM11 2h2v1h-2zM7 3h2v1h-2zM11 3h2v1h-2zM8 4h2v1h-2zM7 5h2v1h-2zM11 5h2v1h-2zM7 6h2v1h-2zM11 6h2v1h-2zM7 7h2v1h-2zM11 7h2v1h-2zM8 8h4v1h-4zM15 0h4v1h-4zM15 1h2v1h-2zM18 1h2v1h-2zM15 2h2v1h-2zM18 2h2v1h-2zM15 3h4v1h-4zM14 4h2v1h-2zM18 4h2v1h-2zM14 5h2v1h-2zM18 5h2v1h-2zM14 6h2v1h-2zM18 6h2v1h-2zM14 7h2v1h-2zM18 7h2v1h-2zM15 8h4v1h-4zM22 0h2v1h-2zM21 1h3v1h-3zM22 2h2v1h-2zM22 3h2v1h-2zM22 4h2v1h-2zM22 5h2v1h-2zM22 6h2v1h-2zM22 7h2v1h-2zM21 8h4v1h-4zM27 0h4v1h-4zM26 1h2v1h-2zM30 1h2v1h-2zM30 2h2v1h-2zM29 3h2v1h-2zM30 4h2v1h-2zM30 5h2v1h-2zM26 6h2v1h-2zM30 6h2v1h-2zM26 7h2v1h-2zM30 7h2v1h-2zM27 8h4v1h-4zM34 0h4v1h-4zM33 1h2v1h-2zM37 1h2v1h-2zM33 2h2v1h-2zM37 2h2v1h-2zM33 3h2v1h-2zM37 3h2v1h-2zM33 4h2v1h-2zM33 5h4v1h-4zM33 6h2v1h-2zM33 7h2v1h-2zM33 8h2v1h-2zM41 0h4v1h-4zM40 1h2v1h-2zM44 1h2v1h-2zM40 2h2v1h-2zM44 2h2v1h-2zM40 3h2v1h-2zM44 3h2v1h-2zM40 4h2v1h-2zM40 5h4v1h-4zM40 6h2v1h-2zM40 7h2v1h-2zM40 8h2v1h-2zM48 0h4v1h-4zM47 1h2v1h-2zM51 1h2v1h-2zM47 2h2v1h-2zM51 2h2v1h-2zM47 3h2v1h-2zM51 3h2v1h-2zM47 4h2v1h-2zM47 5h4v1h-4zM47 6h2v1h-2zM47 7h2v1h-2zM47 8h2v1h-2z"/></svg>
<svg class="r" style="left:390px;top:418px" width="87" height="12" viewBox="0 -1 87 12" shape-rendering="crispEdges"><path fill="#9c8369" d="M0 0h6v1h-6zM2 1h2v1h-2zM2 2h2v1h-2zM2 3h2v1h-2zM2 4h2v1h-2zM2 5h2v1h-2zM2 6h2v1h-2zM2 7h2v1h-2zM2 8h2v1h-2zM8 2h4v1h-4zM7 3h2v1h-2zM11 3h2v1h-2zM8 4h3v1h-3zM7 5h2v1h-2zM7 6h2v1h-2zM11 6h2v1h-2zM7 7h2v1h-2zM11 7h2v1h-2zM8 8h4v1h-4zM14 2h2v1h-2zM18 2h2v1h-2zM14 3h2v1h-2zM18 3h2v1h-2zM15 4h4v1h-4zM16 5h2v1h-2zM15 6h4v1h-4zM14 7h2v1h-2zM18 7h2v1h-2zM14 8h2v1h-2zM18 8h2v1h-2zM21 -1h2v1h-2zM21 0h2v1h-2zM21 1h2v1h-2zM21 2h3v1h-3zM21 3h2v1h-2zM21 4h2v1h-2zM21 5h2v1h-2zM21 6h2v1h-2zM21 7h2v1h-2zM22 8h2v1h-2zM29 0h4v1h-4zM28 1h2v1h-2zM32 1h2v1h-2zM28 2h2v1h-2zM32 2h2v1h-2zM28 3h2v1h-2zM31 3h3v1h-3zM28 4h2v1h-2zM32 4h2v1h-2zM28 5h2v1h-2zM32 5h2v1h-2zM28 6h2v1h-2zM32 6h2v1h-2zM28 7h2v1h-2zM32 7h2v1h-2zM28 8h2v1h-2zM32 8h2v1h-2zM35 -1h2v1h-2zM35 0h2v1h-2zM35 1h2v1h-2zM35 2h2v1h-2zM35 3h2v1h-2zM35 4h2v1h-2zM35 5h2v1h-2zM35 6h2v1h-2zM35 7h2v1h-2zM36 8h2v1h-2zM39 -1h2v1h-2zM39 0h2v1h-2zM39 2h2v1h-2zM39 3h2v1h-2zM39 4h2v1h-2zM39 5h2v1h-2zM39 6h2v1h-2zM39 7h2v1h-2zM39 8h2v1h-2zM43 2h5v1h-5zM42 3h2v1h-2zM46 3h2v1h-2zM42 4h2v1h-2zM46 4h2v1h-2zM42 5h2v1h-2zM46 5h2v1h-2zM42 6h2v1h-2zM46 6h2v1h-2zM42 7h2v1h-2zM46 7h2v1h-2zM43 8h5v1h-5zM46 9h2v1h-2zM43 10h4v1h-4zM49 2h5v1h-5zM49 3h2v1h-2zM53 3h2v1h-2zM49 4h2v1h-2zM53 4h2v1h-2zM49 5h2v1h-2zM53 5h2v1h-2zM49 6h2v1h-2zM53 6h2v1h-2zM49 7h2v1h-2zM53 7h2v1h-2zM49 8h2v1h-2zM53 8h2v1h-2zM56 2h7v1h-7zM56 3h2v1h-2zM59 3h2v1h-2zM62 3h2v1h-2zM56 4h2v1h-2zM59 4h2v1h-2zM62 4h2v1h-2zM56 5h2v1h-2zM59 5h2v1h-2zM62 5h2v1h-2zM56 6h2v1h-2zM59 6h2v1h-2zM62 6h2v1h-2zM56 7h2v1h-2zM59 7h2v1h-2zM62 7h2v1h-2zM56 8h2v1h-2zM59 8h2v1h-2zM62 8h2v1h-2zM66 2h4v1h-4zM65 3h2v1h-2zM69 3h2v1h-2zM66 4h3v1h-3zM65 5h2v1h-2zM65 6h2v1h-2zM69 6h2v1h-2zM65 7h2v1h-2zM69 7h2v1h-2zM66 8h4v1h-4zM72 2h5v1h-5zM72 3h2v1h-2zM76 3h2v1h-2zM72 4h2v1h-2zM76 4h2v1h-2zM72 5h2v1h-2zM76 5h2v1h-2zM72 6h2v1h-2zM76 6h2v1h-2zM72 7h2v1h-2zM76 7h2v1h-2zM72 8h2v1h-2zM76 8h2v1h-2zM79 -1h2v1h-2zM79 0h2v1h-2zM79 1h2v1h-2zM79 2h3v1h-3zM79 3h2v1h-2zM79 4h2v1h-2zM79 5h2v1h-2zM79 6h2v1h-2zM79 7h2v1h-2zM80 8h2v1h-2zM83 3h2v1h-2zM83 4h2v1h-2zM83 7h2v1h-2zM83 8h2v1h-2z"/></svg>
<svg class="r" style="left:517px;top:419px" width="29" height="9" viewBox="0 0 29 9" shape-rendering="crispEdges"><path fill="#9c8369" d="M0 0h2v1h-2zM0 1h2v1h-2zM0 2h2v1h-2zM0 3h2v1h-2zM0 4h2v1h-2zM0 5h2v1h-2zM4 5h2v1h-2zM0 6h2v1h-2zM4 6h2v1h-2zM0 7h2v1h-2zM4 7h2v1h-2zM1 8h4v1h-4zM8 0h4v1h-4zM7 1h2v1h-2zM11 1h2v1h-2zM7 2h2v1h-2zM11 2h2v1h-2zM7 3h2v1h-2zM11 3h2v1h-2zM8 4h2v1h-2zM7 5h2v1h-2zM11 5h2v1h-2zM7 6h2v1h-2zM11 6h2v1h-2zM7 7h2v1h-2zM11 7h2v1h-2zM8 8h4v1h-4zM15 0h4v1h-4zM14 1h2v1h-2zM18 1h2v1h-2zM14 2h2v1h-2zM18 2h2v1h-2zM14 3h2v1h-2zM18 3h2v1h-2zM14 4h2v1h-2zM14 5h4v1h-4zM14 6h2v1h-2zM14 7h2v1h-2zM14 8h2v1h-2zM21 0h6v1h-6zM23 1h2v1h-2zM23 2h2v1h-2zM23 3h2v1h-2zM23 4h2v1h-2zM23 5h2v1h-2zM23 6h2v1h-2zM23 7h2v1h-2zM23 8h2v1h-2z"/></svg>
<svg class="r" style="left:588px;top:419px" width="43" height="9" viewBox="0 0 43 9" shape-rendering="crispEdges"><path fill="#9c8369" d="M1 0h4v1h-4zM0 1h2v1h-2zM4 1h2v1h-2zM0 2h2v1h-2zM4 2h2v1h-2zM0 3h2v1h-2zM4 3h2v1h-2zM0 4h2v1h-2zM0 5h2v1h-2zM4 5h2v1h-2zM0 6h2v1h-2zM4 6h2v1h-2zM0 7h2v1h-2zM4 7h2v1h-2zM1 8h4v1h-4zM8 0h4v1h-4zM7 1h2v1h-2zM11 1h2v1h-2zM7 2h2v1h-2zM11 2h2v1h-2zM7 3h2v1h-2zM11 3h2v1h-2zM8 4h2v1h-2zM7 5h2v1h-2zM11 5h2v1h-2zM7 6h2v1h-2zM11 6h2v1h-2zM7 7h2v1h-2zM11 7h2v1h-2zM8 8h4v1h-4zM14 0h2v1h-2zM18 0h2v1h-2zM14 1h3v1h-3zM18 1h2v1h-2zM14 2h2v1h-2zM17 2h3v1h-3zM14 3h2v1h-2zM18 3h2v1h-2zM14 4h2v1h-2zM18 4h2v1h-2zM14 5h2v1h-2zM18 5h2v1h-2zM14 6h2v1h-2zM18 6h2v1h-2zM14 7h2v1h-2zM18 7h2v1h-2zM14 8h2v1h-2zM18 8h2v1h-2zM21 0h6v1h-6zM23 1h2v1h-2zM23 2h2v1h-2zM23 3h2v1h-2zM23 4h2v1h-2zM23 5h2v1h-2zM23 6h2v1h-2zM23 7h2v1h-2zM23 8h2v1h-2zM29 0h4v1h-4zM28 1h2v1h-2zM32 1h2v1h-2zM28 2h2v1h-2zM32 2h2v1h-2zM28 3h2v1h-2zM32 3h2v1h-2zM29 4h2v1h-2zM28 5h2v1h-2zM32 5h2v1h-2zM28 6h2v1h-2zM32 6h2v1h-2zM28 7h2v1h-2zM32 7h2v1h-2zM29 8h4v1h-4zM35 0h5v1h-5zM35 1h2v1h-2zM39 1h2v1h-2zM35 2h2v1h-2zM39 2h2v1h-2zM35 3h2v1h-2zM38 3h2v1h-2zM35 4h2v1h-2zM39 4h2v1h-2zM35 5h2v1h-2zM39 5h2v1h-2zM35 6h2v1h-2zM39 6h2v1h-2zM35 7h2v1h-2zM39 7h2v1h-2zM35 8h2v1h-2zM39 8h2v1h-2z"/></svg>
<svg class="r" style="left:672px;top:419px" width="32" height="9" viewBox="0 0 32 9" shape-rendering="crispEdges"><path fill="#9c8369" d="M0 0h5v1h-5zM0 1h2v1h-2zM4 1h2v1h-2zM0 2h2v1h-2zM4 2h2v1h-2zM0 3h2v1h-2zM3 3h2v1h-2zM0 4h2v1h-2zM4 4h2v1h-2zM0 5h2v1h-2zM4 5h2v1h-2zM0 6h2v1h-2zM4 6h2v1h-2zM0 7h2v1h-2zM4 7h2v1h-2zM0 8h2v1h-2zM4 8h2v1h-2zM7 0h2v1h-2zM7 1h2v1h-2zM7 2h2v1h-2zM7 3h2v1h-2zM7 4h2v1h-2zM7 5h2v1h-2zM7 6h2v1h-2zM7 7h2v1h-2zM7 8h2v1h-2zM11 0h4v1h-4zM10 1h2v1h-2zM14 1h2v1h-2zM10 2h2v1h-2zM14 2h2v1h-2zM10 3h2v1h-2zM10 4h2v1h-2zM13 4h3v1h-3zM10 5h2v1h-2zM14 5h2v1h-2zM10 6h2v1h-2zM14 6h2v1h-2zM10 7h2v1h-2zM14 7h2v1h-2zM11 8h4v1h-4zM17 0h2v1h-2zM21 0h2v1h-2zM17 1h2v1h-2zM21 1h2v1h-2zM17 2h2v1h-2zM21 2h2v1h-2zM17 3h6v1h-6zM17 4h2v1h-2zM21 4h2v1h-2zM17 5h2v1h-2zM21 5h2v1h-2zM17 6h2v1h-2zM21 6h2v1h-2zM17 7h2v1h-2zM21 7h2v1h-2zM17 8h2v1h-2zM21 8h2v1h-2zM24 0h6v1h-6zM26 1h2v1h-2zM26 2h2v1h-2zM26 3h2v1h-2zM26 4h2v1h-2zM26 5h2v1h-2zM26 6h2v1h-2zM26 7h2v1h-2zM26 8h2v1h-2z"/></svg>
<svg class="r" style="left:375px;top:461px" width="121" height="12" viewBox="0 -1 121 12" shape-rendering="crispEdges"><path fill="#d77575" d="M0 0h6v1h-6zM2 1h2v1h-2zM2 2h2v1h-2zM2 3h2v1h-2zM2 4h2v1h-2zM2 5h2v1h-2zM2 6h2v1h-2zM2 7h2v1h-2zM2 8h2v1h-2zM8 2h4v1h-4zM7 3h2v1h-2zM11 3h2v1h-2zM8 4h3v1h-3zM7 5h2v1h-2zM7 6h2v1h-2zM11 6h2v1h-2zM7 7h2v1h-2zM11 7h2v1h-2zM8 8h4v1h-4zM14 2h2v1h-2zM18 2h2v1h-2zM14 3h2v1h-2zM18 3h2v1h-2zM15 4h4v1h-4zM16 5h2v1h-2zM15 6h4v1h-4zM14 7h2v1h-2zM18 7h2v1h-2zM14 8h2v1h-2zM18 8h2v1h-2zM21 -1h2v1h-2zM21 0h2v1h-2zM21 1h2v1h-2zM21 2h3v1h-3zM21 3h2v1h-2zM21 4h2v1h-2zM21 5h2v1h-2zM21 6h2v1h-2zM21 7h2v1h-2zM22 8h2v1h-2zM28 0h5v1h-5zM28 1h2v1h-2zM32 1h2v1h-2zM28 2h2v1h-2zM32 2h2v1h-2zM28 3h2v1h-2zM32 3h2v1h-2zM28 4h2v1h-2zM32 4h2v1h-2zM28 5h2v1h-2zM32 5h2v1h-2zM28 6h2v1h-2zM32 6h2v1h-2zM28 7h2v1h-2zM32 7h2v1h-2zM28 8h5v1h-5zM35 2h5v1h-5zM35 3h2v1h-2zM39 3h2v1h-2zM35 4h2v1h-2zM35 5h2v1h-2zM35 6h2v1h-2zM35 7h2v1h-2zM35 8h2v1h-2zM43 2h4v1h-4zM42 3h2v1h-2zM46 3h2v1h-2zM45 4h3v1h-3zM43 5h5v1h-5zM42 6h2v1h-2zM46 6h2v1h-2zM42 7h2v1h-2zM46 7h2v1h-2zM43 8h5v1h-5zM49 2h2v1h-2zM52 2h2v1h-2zM55 2h2v1h-2zM49 3h2v1h-2zM52 3h2v1h-2zM55 3h2v1h-2zM49 4h2v1h-2zM52 4h2v1h-2zM55 4h2v1h-2zM49 5h2v1h-2zM52 5h2v1h-2zM55 5h2v1h-2zM49 6h2v1h-2zM52 6h2v1h-2zM55 6h2v1h-2zM49 7h2v1h-2zM52 7h2v1h-2zM55 7h2v1h-2zM50 8h2v1h-2zM54 8h2v1h-2zM58 -1h2v1h-2zM58 0h2v1h-2zM58 2h2v1h-2zM58 3h2v1h-2zM58 4h2v1h-2zM58 5h2v1h-2zM58 6h2v1h-2zM58 7h2v1h-2zM58 8h2v1h-2zM61 2h5v1h-5zM61 3h2v1h-2zM65 3h2v1h-2zM61 4h2v1h-2zM65 4h2v1h-2zM61 5h2v1h-2zM65 5h2v1h-2zM61 6h2v1h-2zM65 6h2v1h-2zM61 7h2v1h-2zM65 7h2v1h-2zM61 8h2v1h-2zM65 8h2v1h-2zM69 2h5v1h-5zM68 3h2v1h-2zM72 3h2v1h-2zM68 4h2v1h-2zM72 4h2v1h-2zM68 5h2v1h-2zM72 5h2v1h-2zM68 6h2v1h-2zM72 6h2v1h-2zM68 7h2v1h-2zM72 7h2v1h-2zM69 8h5v1h-5zM72 9h2v1h-2zM69 10h4v1h-4zM79 0h4v1h-4zM78 1h2v1h-2zM82 1h2v1h-2zM78 2h2v1h-2zM82 2h2v1h-2zM78 3h2v1h-2zM82 3h2v1h-2zM78 4h2v1h-2zM82 4h2v1h-2zM78 5h2v1h-2zM82 5h2v1h-2zM78 6h2v1h-2zM82 6h2v1h-2zM78 7h2v1h-2zM82 7h2v1h-2zM79 8h4v1h-4zM85 2h5v1h-5zM85 3h2v1h-2zM89 3h2v1h-2zM85 4h2v1h-2zM89 4h2v1h-2zM85 5h2v1h-2zM89 5h2v1h-2zM85 6h2v1h-2zM89 6h2v1h-2zM85 7h2v1h-2zM89 7h2v1h-2zM85 8h5v1h-5zM85 9h2v1h-2zM85 10h2v1h-2zM92 -1h2v1h-2zM92 0h2v1h-2zM92 1h2v1h-2zM92 2h3v1h-3zM92 3h2v1h-2zM92 4h2v1h-2zM92 5h2v1h-2zM92 6h2v1h-2zM92 7h2v1h-2zM93 8h2v1h-2zM96 -1h2v1h-2zM96 0h2v1h-2zM96 2h2v1h-2zM96 3h2v1h-2zM96 4h2v1h-2zM96 5h2v1h-2zM96 6h2v1h-2zM96 7h2v1h-2zM96 8h2v1h-2zM100 2h4v1h-4zM99 3h2v1h-2zM103 3h2v1h-2zM99 4h2v1h-2zM103 4h2v1h-2zM99 5h2v1h-2zM103 5h2v1h-2zM99 6h2v1h-2zM103 6h2v1h-2zM99 7h2v1h-2zM103 7h2v1h-2zM100 8h4v1h-4zM106 2h5v1h-5zM106 3h2v1h-2zM110 3h2v1h-2zM106 4h2v1h-2zM110 4h2v1h-2zM106 5h2v1h-2zM110 5h2v1h-2zM106 6h2v1h-2zM110 6h2v1h-2zM106 7h2v1h-2zM110 7h2v1h-2zM106 8h2v1h-2zM110 8h2v1h-2zM114 2h4v1h-4zM113 3h2v1h-2zM117 3h2v1h-2zM113 4h2v1h-2zM114 5h4v1h-4zM117 6h2v1h-2zM113 7h2v1h-2zM117 7h2v1h-2zM114 8h4v1h-4z"/></svg>
<svg class="r" style="left:401px;top:486px" width="26" height="10" viewBox="0 -1 26 10" shape-rendering="crispEdges"><path fill="#e59b5f" d="M1 0h4v1h-4zM0 1h2v1h-2zM4 1h2v1h-2zM0 2h2v1h-2zM4 2h2v1h-2zM0 3h2v1h-2zM4 3h2v1h-2zM0 4h2v1h-2zM0 5h4v1h-4zM0 6h2v1h-2zM0 7h2v1h-2zM0 8h2v1h-2zM8 2h4v1h-4zM7 3h2v1h-2zM11 3h2v1h-2zM7 4h2v1h-2zM11 4h2v1h-2zM7 5h2v1h-2zM11 5h2v1h-2zM7 6h2v1h-2zM11 6h2v1h-2zM7 7h2v1h-2zM11 7h2v1h-2zM8 8h4v1h-4zM14 2h5v1h-5zM14 3h2v1h-2zM18 3h2v1h-2zM14 4h2v1h-2zM18 4h2v1h-2zM14 5h2v1h-2zM18 5h2v1h-2zM14 6h2v1h-2zM18 6h2v1h-2zM14 7h2v1h-2zM18 7h2v1h-2zM14 8h2v1h-2zM18 8h2v1h-2zM21 -1h2v1h-2zM21 0h2v1h-2zM21 1h2v1h-2zM21 2h3v1h-3zM21 3h2v1h-2zM21 4h2v1h-2zM21 5h2v1h-2zM21 6h2v1h-2zM21 7h2v1h-2zM22 8h2v1h-2z"/></svg>
<svg class="r" style="left:443px;top:489px" width="28" height="10" viewBox="0 -1 28 10" shape-rendering="crispEdges"><path fill="#e59b5f" d="M1 0h4v1h-4zM0 1h2v1h-2zM4 1h2v1h-2zM0 2h2v1h-2zM0 3h2v1h-2zM1 4h4v1h-4zM4 5h2v1h-2zM0 6h2v1h-2zM4 6h2v1h-2zM0 7h2v1h-2zM4 7h2v1h-2zM1 8h4v1h-4zM7 -1h2v1h-2zM7 0h2v1h-2zM7 2h2v1h-2zM7 3h2v1h-2zM7 4h2v1h-2zM7 5h2v1h-2zM7 6h2v1h-2zM7 7h2v1h-2zM7 8h2v1h-2zM10 2h6v1h-6zM14 3h2v1h-2zM13 4h2v1h-2zM12 5h2v1h-2zM11 6h2v1h-2zM10 7h2v1h-2zM10 8h6v1h-6zM18 2h4v1h-4zM17 3h2v1h-2zM21 3h2v1h-2zM18 4h3v1h-3zM17 5h2v1h-2zM17 6h2v1h-2zM21 6h2v1h-2zM17 7h2v1h-2zM21 7h2v1h-2zM18 8h4v1h-4zM24 3h2v1h-2zM24 4h2v1h-2zM24 7h2v1h-2zM24 8h2v1h-2z"/></svg>
<svg class="r" style="left:513px;top:488px" width="13" height="9" viewBox="0 0 13 9" shape-rendering="crispEdges"><path fill="#e59b5f" d="M1 0h2v1h-2zM0 1h3v1h-3zM1 2h2v1h-2zM1 3h2v1h-2zM1 4h2v1h-2zM1 5h2v1h-2zM1 6h2v1h-2zM1 7h2v1h-2zM0 8h4v1h-4zM5 0h6v1h-6zM5 1h2v1h-2zM5 2h2v1h-2zM5 3h5v1h-5zM9 4h2v1h-2zM9 5h2v1h-2zM5 6h2v1h-2zM9 6h2v1h-2zM5 7h2v1h-2zM9 7h2v1h-2zM6 8h4v1h-4z"/></svg>
<svg class="r" style="left:574px;top:489px" width="49" height="12" viewBox="0 -1 49 12" shape-rendering="crispEdges"><path fill="#e59b5f" d="M1 0h4v1h-4zM0 1h2v1h-2zM4 1h2v1h-2zM0 2h2v1h-2zM0 3h2v1h-2zM1 4h4v1h-4zM4 5h2v1h-2zM0 6h2v1h-2zM4 6h2v1h-2zM0 7h2v1h-2zM4 7h2v1h-2zM1 8h4v1h-4zM7 2h5v1h-5zM7 3h2v1h-2zM11 3h2v1h-2zM7 4h2v1h-2zM11 4h2v1h-2zM7 5h2v1h-2zM11 5h2v1h-2zM7 6h2v1h-2zM11 6h2v1h-2zM7 7h2v1h-2zM11 7h2v1h-2zM7 8h5v1h-5zM7 9h2v1h-2zM7 10h2v1h-2zM15 2h4v1h-4zM14 3h2v1h-2zM18 3h2v1h-2zM17 4h3v1h-3zM15 5h5v1h-5zM14 6h2v1h-2zM18 6h2v1h-2zM14 7h2v1h-2zM18 7h2v1h-2zM15 8h5v1h-5zM22 2h4v1h-4zM21 3h2v1h-2zM25 3h2v1h-2zM21 4h2v1h-2zM21 5h2v1h-2zM21 6h2v1h-2zM21 7h2v1h-2zM25 7h2v1h-2zM22 8h4v1h-4zM28 -1h2v1h-2zM28 0h2v1h-2zM28 2h2v1h-2zM28 3h2v1h-2zM28 4h2v1h-2zM28 5h2v1h-2zM28 6h2v1h-2zM28 7h2v1h-2zM28 8h2v1h-2zM31 2h5v1h-5zM31 3h2v1h-2zM35 3h2v1h-2zM31 4h2v1h-2zM35 4h2v1h-2zM31 5h2v1h-2zM35 5h2v1h-2zM31 6h2v1h-2zM35 6h2v1h-2zM31 7h2v1h-2zM35 7h2v1h-2zM31 8h2v1h-2zM35 8h2v1h-2zM39 2h5v1h-5zM38 3h2v1h-2zM42 3h2v1h-2zM38 4h2v1h-2zM42 4h2v1h-2zM38 5h2v1h-2zM42 5h2v1h-2zM38 6h2v1h-2zM42 6h2v1h-2zM38 7h2v1h-2zM42 7h2v1h-2zM39 8h5v1h-5zM42 9h2v1h-2zM39 10h4v1h-4zM45 3h2v1h-2zM45 4h2v1h-2zM45 7h2v1h-2zM45 8h2v1h-2z"/></svg>
<svg class="r" style="left:668px;top:488px" width="8" height="9" viewBox="0 0 8 9" shape-rendering="crispEdges"><path fill="#e59b5f" d="M1 0h4v1h-4zM0 1h2v1h-2zM4 1h2v1h-2zM0 2h2v1h-2zM4 2h2v1h-2zM0 3h2v1h-2zM4 3h2v1h-2zM0 4h2v1h-2zM3 4h3v1h-3zM0 5h3v1h-3zM4 5h2v1h-2zM0 6h2v1h-2zM4 6h2v1h-2zM0 7h2v1h-2zM4 7h2v1h-2zM1 8h4v1h-4z"/></svg>
<svg class="r" style="left:378px;top:525px" width="67" height="12" viewBox="0 -1 67 12" shape-rendering="crispEdges"><path fill="#e59b5f" d="M1 2h4v1h-4zM0 3h2v1h-2zM4 3h2v1h-2zM0 4h2v1h-2zM1 5h4v1h-4zM4 6h2v1h-2zM0 7h2v1h-2zM4 7h2v1h-2zM1 8h4v1h-4zM8 2h4v1h-4zM7 3h2v1h-2zM11 3h2v1h-2zM10 4h3v1h-3zM8 5h5v1h-5zM7 6h2v1h-2zM11 6h2v1h-2zM7 7h2v1h-2zM11 7h2v1h-2zM8 8h5v1h-5zM14 2h7v1h-7zM14 3h2v1h-2zM17 3h2v1h-2zM20 3h2v1h-2zM14 4h2v1h-2zM17 4h2v1h-2zM20 4h2v1h-2zM14 5h2v1h-2zM17 5h2v1h-2zM20 5h2v1h-2zM14 6h2v1h-2zM17 6h2v1h-2zM20 6h2v1h-2zM14 7h2v1h-2zM17 7h2v1h-2zM20 7h2v1h-2zM14 8h2v1h-2zM17 8h2v1h-2zM20 8h2v1h-2zM23 2h5v1h-5zM23 3h2v1h-2zM27 3h2v1h-2zM23 4h2v1h-2zM27 4h2v1h-2zM23 5h2v1h-2zM27 5h2v1h-2zM23 6h2v1h-2zM27 6h2v1h-2zM23 7h2v1h-2zM27 7h2v1h-2zM23 8h5v1h-5zM23 9h2v1h-2zM23 10h2v1h-2zM30 -1h2v1h-2zM30 0h2v1h-2zM30 1h2v1h-2zM30 2h2v1h-2zM30 3h2v1h-2zM30 4h2v1h-2zM30 5h2v1h-2zM30 6h2v1h-2zM30 7h2v1h-2zM31 8h2v1h-2zM35 2h4v1h-4zM34 3h2v1h-2zM38 3h2v1h-2zM35 4h3v1h-3zM34 5h2v1h-2zM34 6h2v1h-2zM38 6h2v1h-2zM34 7h2v1h-2zM38 7h2v1h-2zM35 8h4v1h-4zM44 -1h2v1h-2zM44 0h2v1h-2zM44 1h2v1h-2zM44 2h3v1h-3zM44 3h2v1h-2zM44 4h2v1h-2zM44 5h2v1h-2zM44 6h2v1h-2zM44 7h2v1h-2zM45 8h2v1h-2zM49 2h4v1h-4zM48 3h2v1h-2zM52 3h2v1h-2zM49 4h3v1h-3zM48 5h2v1h-2zM48 6h2v1h-2zM52 6h2v1h-2zM48 7h2v1h-2zM52 7h2v1h-2zM49 8h4v1h-4zM55 2h2v1h-2zM59 2h2v1h-2zM55 3h2v1h-2zM59 3h2v1h-2zM56 4h4v1h-4zM57 5h2v1h-2zM56 6h4v1h-4zM55 7h2v1h-2zM59 7h2v1h-2zM55 8h2v1h-2zM59 8h2v1h-2zM62 -1h2v1h-2zM62 0h2v1h-2zM62 1h2v1h-2zM62 2h3v1h-3zM62 3h2v1h-2zM62 4h2v1h-2zM62 5h2v1h-2zM62 6h2v1h-2zM62 7h2v1h-2zM63 8h2v1h-2z"/></svg>
<svg class="r" style="left:9px;top:593px" width="34" height="9" viewBox="0 0 34 9" shape-rendering="crispEdges"><path fill="#e59b5f" d="M0 0h2v1h-2zM4 0h2v1h-2zM0 1h3v1h-3zM4 1h2v1h-2zM0 2h2v1h-2zM3 2h3v1h-3zM0 3h2v1h-2zM4 3h2v1h-2zM0 4h2v1h-2zM4 4h2v1h-2zM0 5h2v1h-2zM4 5h2v1h-2zM0 6h2v1h-2zM4 6h2v1h-2zM0 7h2v1h-2zM4 7h2v1h-2zM0 8h2v1h-2zM4 8h2v1h-2zM8 2h4v1h-4zM7 3h2v1h-2zM11 3h2v1h-2zM10 4h3v1h-3zM8 5h5v1h-5zM7 6h2v1h-2zM11 6h2v1h-2zM7 7h2v1h-2zM11 7h2v1h-2zM8 8h5v1h-5zM14 2h7v1h-7zM14 3h2v1h-2zM17 3h2v1h-2zM20 3h2v1h-2zM14 4h2v1h-2zM17 4h2v1h-2zM20 4h2v1h-2zM14 5h2v1h-2zM17 5h2v1h-2zM20 5h2v1h-2zM14 6h2v1h-2zM17 6h2v1h-2zM20 6h2v1h-2zM14 7h2v1h-2zM17 7h2v1h-2zM20 7h2v1h-2zM14 8h2v1h-2zM17 8h2v1h-2zM20 8h2v1h-2zM24 2h4v1h-4zM23 3h2v1h-2zM27 3h2v1h-2zM24 4h3v1h-3zM23 5h2v1h-2zM23 6h2v1h-2zM27 6h2v1h-2zM23 7h2v1h-2zM27 7h2v1h-2zM24 8h4v1h-4zM30 3h2v1h-2zM30 4h2v1h-2zM30 7h2v1h-2zM30 8h2v1h-2z"/></svg>
<svg class="r" style="left:64px;top:592px" width="36" height="12" viewBox="0 -1 36 12" shape-rendering="crispEdges"><path fill="#e59b5f" d="M1 0h4v1h-4zM0 1h2v1h-2zM4 1h2v1h-2zM0 2h2v1h-2zM4 2h2v1h-2zM0 3h2v1h-2zM4 3h2v1h-2zM0 4h2v1h-2zM0 5h2v1h-2zM4 5h2v1h-2zM0 6h2v1h-2zM4 6h2v1h-2zM0 7h2v1h-2zM4 7h2v1h-2zM1 8h4v1h-4zM8 2h4v1h-4zM7 3h2v1h-2zM11 3h2v1h-2zM10 4h3v1h-3zM8 5h5v1h-5zM7 6h2v1h-2zM11 6h2v1h-2zM7 7h2v1h-2zM11 7h2v1h-2zM8 8h5v1h-5zM14 2h5v1h-5zM14 3h2v1h-2zM18 3h2v1h-2zM14 4h2v1h-2zM18 4h2v1h-2zM14 5h2v1h-2zM18 5h2v1h-2zM14 6h2v1h-2zM18 6h2v1h-2zM14 7h2v1h-2zM18 7h2v1h-2zM14 8h2v1h-2zM18 8h2v1h-2zM25 -1h2v1h-2zM25 0h2v1h-2zM25 1h2v1h-2zM22 2h5v1h-5zM21 3h2v1h-2zM25 3h2v1h-2zM21 4h2v1h-2zM25 4h2v1h-2zM21 5h2v1h-2zM25 5h2v1h-2zM21 6h2v1h-2zM25 6h2v1h-2zM21 7h2v1h-2zM25 7h2v1h-2zM22 8h5v1h-5zM28 2h2v1h-2zM32 2h2v1h-2zM28 3h2v1h-2zM32 3h2v1h-2zM28 4h2v1h-2zM32 4h2v1h-2zM28 5h2v1h-2zM32 5h2v1h-2zM28 6h2v1h-2zM32 6h2v1h-2zM28 7h2v1h-2zM32 7h2v1h-2zM29 8h5v1h-5zM32 9h2v1h-2zM29 10h4v1h-4z"/></svg>
<svg class="r" style="left:168px;top:593px" width="130" height="9" viewBox="0 0 130 9" shape-rendering="crispEdges"><path fill="#e59b5f" d="M1 0h4v1h-4zM0 1h2v1h-2zM4 1h2v1h-2zM0 2h2v1h-2zM4 2h2v1h-2zM0 3h2v1h-2zM4 3h2v1h-2zM0 4h2v1h-2zM0 5h2v1h-2zM4 5h2v1h-2zM0 6h2v1h-2zM4 6h2v1h-2zM0 7h2v1h-2zM4 7h2v1h-2zM1 8h4v1h-4zM7 0h2v1h-2zM11 0h2v1h-2zM7 1h2v1h-2zM11 1h2v1h-2zM7 2h2v1h-2zM11 2h2v1h-2zM7 3h6v1h-6zM7 4h2v1h-2zM11 4h2v1h-2zM7 5h2v1h-2zM11 5h2v1h-2zM7 6h2v1h-2zM11 6h2v1h-2zM7 7h2v1h-2zM11 7h2v1h-2zM7 8h2v1h-2zM11 8h2v1h-2zM15 0h4v1h-4zM14 1h2v1h-2zM18 1h2v1h-2zM14 2h2v1h-2zM18 2h2v1h-2zM14 3h2v1h-2zM17 3h3v1h-3zM14 4h2v1h-2zM18 4h2v1h-2zM14 5h2v1h-2zM18 5h2v1h-2zM14 6h2v1h-2zM18 6h2v1h-2zM14 7h2v1h-2zM18 7h2v1h-2zM14 8h2v1h-2zM18 8h2v1h-2zM21 0h2v1h-2zM25 0h2v1h-2zM21 1h3v1h-3zM25 1h2v1h-2zM21 2h2v1h-2zM24 2h3v1h-3zM21 3h2v1h-2zM25 3h2v1h-2zM21 4h2v1h-2zM25 4h2v1h-2zM21 5h2v1h-2zM25 5h2v1h-2zM21 6h2v1h-2zM25 6h2v1h-2zM21 7h2v1h-2zM25 7h2v1h-2zM21 8h2v1h-2zM25 8h2v1h-2zM29 0h4v1h-4zM28 1h2v1h-2zM32 1h2v1h-2zM28 2h2v1h-2zM32 2h2v1h-2zM28 3h2v1h-2zM28 4h2v1h-2zM31 4h3v1h-3zM28 5h2v1h-2zM32 5h2v1h-2zM28 6h2v1h-2zM32 6h2v1h-2zM28 7h2v1h-2zM32 7h2v1h-2zM29 8h4v1h-4zM36 0h4v1h-4zM35 1h2v1h-2zM39 1h2v1h-2zM35 2h2v1h-2zM39 2h2v1h-2zM35 3h2v1h-2zM39 3h2v1h-2zM36 4h2v1h-2zM35 5h2v1h-2zM39 5h2v1h-2zM35 6h2v1h-2zM39 6h2v1h-2zM35 7h2v1h-2zM39 7h2v1h-2zM36 8h4v1h-4zM42 0h5v1h-5zM42 1h2v1h-2zM46 1h2v1h-2zM42 2h2v1h-2zM46 2h2v1h-2zM42 3h2v1h-2zM46 3h2v1h-2zM42 4h2v1h-2zM46 4h2v1h-2zM42 5h2v1h-2zM46 5h2v1h-2zM42 6h2v1h-2zM46 6h2v1h-2zM42 7h2v1h-2zM46 7h2v1h-2zM42 8h5v1h-5zM52 0h5v1h-5zM52 1h2v1h-2zM56 1h2v1h-2zM52 2h2v1h-2zM56 2h2v1h-2zM52 3h2v1h-2zM56 3h2v1h-2zM52 4h2v1h-2zM56 4h2v1h-2zM52 5h5v1h-5zM52 6h2v1h-2zM52 7h2v1h-2zM52 8h2v1h-2zM59 0h5v1h-5zM59 1h2v1h-2zM63 1h2v1h-2zM59 2h2v1h-2zM63 2h2v1h-2zM59 3h2v1h-2zM62 3h2v1h-2zM59 4h2v1h-2zM63 4h2v1h-2zM59 5h2v1h-2zM63 5h2v1h-2zM59 6h2v1h-2zM63 6h2v1h-2zM59 7h2v1h-2zM63 7h2v1h-2zM59 8h2v1h-2zM63 8h2v1h-2zM67 0h4v1h-4zM66 1h2v1h-2zM70 1h2v1h-2zM66 2h2v1h-2zM70 2h2v1h-2zM66 3h2v1h-2zM70 3h2v1h-2zM66 4h2v1h-2zM70 4h2v1h-2zM66 5h2v1h-2zM70 5h2v1h-2zM66 6h2v1h-2zM70 6h2v1h-2zM66 7h2v1h-2zM70 7h2v1h-2zM67 8h4v1h-4zM73 0h5v1h-5zM73 1h2v1h-2zM77 1h2v1h-2zM73 2h2v1h-2zM77 2h2v1h-2zM73 3h2v1h-2zM77 3h2v1h-2zM73 4h2v1h-2zM77 4h2v1h-2zM73 5h5v1h-5zM73 6h2v1h-2zM73 7h2v1h-2zM73 8h2v1h-2zM81 0h4v1h-4zM80 1h2v1h-2zM84 1h2v1h-2zM80 2h2v1h-2zM84 2h2v1h-2zM80 3h2v1h-2zM84 3h2v1h-2zM81 4h2v1h-2zM80 5h2v1h-2zM84 5h2v1h-2zM80 6h2v1h-2zM84 6h2v1h-2zM80 7h2v1h-2zM84 7h2v1h-2zM81 8h4v1h-4zM87 0h5v1h-5zM87 1h2v1h-2zM91 1h2v1h-2zM87 2h2v1h-2zM91 2h2v1h-2zM87 3h2v1h-2zM90 3h2v1h-2zM87 4h2v1h-2zM91 4h2v1h-2zM87 5h2v1h-2zM91 5h2v1h-2zM87 6h2v1h-2zM91 6h2v1h-2zM87 7h2v1h-2zM91 7h2v1h-2zM87 8h2v1h-2zM91 8h2v1h-2zM94 0h6v1h-6zM96 1h2v1h-2zM96 2h2v1h-2zM96 3h2v1h-2zM96 4h2v1h-2zM96 5h2v1h-2zM96 6h2v1h-2zM96 7h2v1h-2zM96 8h2v1h-2zM101 0h2v1h-2zM101 1h2v1h-2zM101 2h2v1h-2zM101 3h2v1h-2zM101 4h2v1h-2zM101 5h2v1h-2zM101 6h2v1h-2zM101 7h2v1h-2zM101 8h2v1h-2zM105 0h4v1h-4zM104 1h2v1h-2zM108 1h2v1h-2zM104 2h2v1h-2zM108 2h2v1h-2zM104 3h2v1h-2zM108 3h2v1h-2zM105 4h2v1h-2zM104 5h2v1h-2zM108 5h2v1h-2zM104 6h2v1h-2zM108 6h2v1h-2zM104 7h2v1h-2zM108 7h2v1h-2zM105 8h4v1h-4zM112 0h4v1h-4zM111 1h2v1h-2zM115 1h2v1h-2zM111 2h2v1h-2zM111 3h2v1h-2zM112 4h4v1h-4zM115 5h2v1h-2zM111 6h2v1h-2zM115 6h2v1h-2zM111 7h2v1h-2zM115 7h2v1h-2zM112 8h4v1h-4zM118 3h2v1h-2zM118 4h2v1h-2zM118 7h2v1h-2zM118 8h2v1h-2zM125 0h2v1h-2zM124 1h3v1h-3zM125 2h2v1h-2zM125 3h2v1h-2zM125 4h2v1h-2zM125 5h2v1h-2zM125 6h2v1h-2zM125 7h2v1h-2zM124 8h4v1h-4z"/></svg>
<svg class="r" style="left:357px;top:592px" width="214" height="12" viewBox="0 -1 214 12" shape-rendering="crispEdges"><path fill="#e59b5f" d="M1 0h4v1h-4zM0 1h2v1h-2zM4 1h2v1h-2zM0 2h2v1h-2zM4 2h2v1h-2zM0 3h2v1h-2zM4 3h2v1h-2zM0 4h2v1h-2zM0 5h4v1h-4zM0 6h2v1h-2zM0 7h2v1h-2zM0 8h2v1h-2zM8 0h4v1h-4zM7 1h2v1h-2zM11 1h2v1h-2zM7 2h2v1h-2zM11 2h2v1h-2zM7 3h2v1h-2zM11 3h2v1h-2zM7 4h2v1h-2zM11 4h2v1h-2zM7 5h2v1h-2zM11 5h2v1h-2zM7 6h2v1h-2zM11 6h2v1h-2zM7 7h2v1h-2zM11 7h2v1h-2zM8 8h4v1h-4zM14 0h2v1h-2zM18 0h2v1h-2zM14 1h3v1h-3zM18 1h2v1h-2zM14 2h2v1h-2zM17 2h3v1h-3zM14 3h2v1h-2zM18 3h2v1h-2zM14 4h2v1h-2zM18 4h2v1h-2zM14 5h2v1h-2zM18 5h2v1h-2zM14 6h2v1h-2zM18 6h2v1h-2zM14 7h2v1h-2zM18 7h2v1h-2zM14 8h2v1h-2zM18 8h2v1h-2zM21 0h6v1h-6zM23 1h2v1h-2zM23 2h2v1h-2zM23 3h2v1h-2zM23 4h2v1h-2zM23 5h2v1h-2zM23 6h2v1h-2zM23 7h2v1h-2zM23 8h2v1h-2zM28 3h2v1h-2zM28 4h2v1h-2zM28 7h2v1h-2zM28 8h2v1h-2zM35 0h2v1h-2zM34 1h3v1h-3zM35 2h2v1h-2zM35 3h2v1h-2zM35 4h2v1h-2zM35 5h2v1h-2zM35 6h2v1h-2zM35 7h2v1h-2zM34 8h4v1h-4zM40 0h4v1h-4zM40 1h2v1h-2zM43 1h2v1h-2zM40 2h2v1h-2zM43 2h2v1h-2zM40 3h4v1h-4zM39 4h2v1h-2zM43 4h2v1h-2zM39 5h2v1h-2zM43 5h2v1h-2zM39 6h2v1h-2zM43 6h2v1h-2zM39 7h2v1h-2zM43 7h2v1h-2zM40 8h4v1h-4zM47 0h4v1h-4zM46 1h2v1h-2zM50 1h2v1h-2zM46 2h2v1h-2zM50 2h2v1h-2zM46 3h2v1h-2zM50 3h2v1h-2zM47 4h5v1h-5zM50 5h2v1h-2zM46 6h2v1h-2zM50 6h2v1h-2zM46 7h2v1h-2zM50 7h2v1h-2zM47 8h4v1h-4zM57 2h4v1h-4zM56 3h2v1h-2zM60 3h2v1h-2zM56 4h2v1h-2zM56 5h2v1h-2zM56 6h2v1h-2zM56 7h2v1h-2zM60 7h2v1h-2zM57 8h4v1h-4zM64 2h4v1h-4zM63 3h2v1h-2zM67 3h2v1h-2zM63 4h2v1h-2zM67 4h2v1h-2zM63 5h2v1h-2zM67 5h2v1h-2zM63 6h2v1h-2zM67 6h2v1h-2zM63 7h2v1h-2zM67 7h2v1h-2zM64 8h4v1h-4zM74 -1h2v1h-2zM74 0h2v1h-2zM74 1h2v1h-2zM71 2h5v1h-5zM70 3h2v1h-2zM74 3h2v1h-2zM70 4h2v1h-2zM74 4h2v1h-2zM70 5h2v1h-2zM74 5h2v1h-2zM70 6h2v1h-2zM74 6h2v1h-2zM70 7h2v1h-2zM74 7h2v1h-2zM71 8h5v1h-5zM78 2h4v1h-4zM77 3h2v1h-2zM81 3h2v1h-2zM78 4h3v1h-3zM77 5h2v1h-2zM77 6h2v1h-2zM81 6h2v1h-2zM77 7h2v1h-2zM81 7h2v1h-2zM78 8h4v1h-4zM84 2h5v1h-5zM84 3h2v1h-2zM88 3h2v1h-2zM84 4h2v1h-2zM88 4h2v1h-2zM84 5h2v1h-2zM88 5h2v1h-2zM84 6h2v1h-2zM88 6h2v1h-2zM84 7h2v1h-2zM88 7h2v1h-2zM84 8h5v1h-5zM84 9h2v1h-2zM84 10h2v1h-2zM92 2h4v1h-4zM91 3h2v1h-2zM95 3h2v1h-2zM91 4h2v1h-2zM95 4h2v1h-2zM91 5h2v1h-2zM95 5h2v1h-2zM91 6h2v1h-2zM95 6h2v1h-2zM91 7h2v1h-2zM95 7h2v1h-2zM92 8h4v1h-4zM98 -1h2v1h-2zM98 0h2v1h-2zM98 2h2v1h-2zM98 3h2v1h-2zM98 4h2v1h-2zM98 5h2v1h-2zM98 6h2v1h-2zM98 7h2v1h-2zM98 8h2v1h-2zM101 2h5v1h-5zM101 3h2v1h-2zM105 3h2v1h-2zM101 4h2v1h-2zM105 4h2v1h-2zM101 5h2v1h-2zM105 5h2v1h-2zM101 6h2v1h-2zM105 6h2v1h-2zM101 7h2v1h-2zM105 7h2v1h-2zM101 8h2v1h-2zM105 8h2v1h-2zM108 -1h2v1h-2zM108 0h2v1h-2zM108 1h2v1h-2zM108 2h3v1h-3zM108 3h2v1h-2zM108 4h2v1h-2zM108 5h2v1h-2zM108 6h2v1h-2zM108 7h2v1h-2zM109 8h2v1h-2zM113 2h4v1h-4zM112 3h2v1h-2zM116 3h2v1h-2zM112 4h2v1h-2zM113 5h4v1h-4zM116 6h2v1h-2zM112 7h2v1h-2zM116 7h2v1h-2zM113 8h4v1h-4zM123 -1h1v1h-1zM123 0h1v1h-1zM123 1h1v1h-1zM123 2h1v1h-1zM123 3h1v1h-1zM123 4h1v1h-1zM123 5h1v1h-1zM123 6h1v1h-1zM123 7h1v1h-1zM123 8h1v1h-1zM123 9h1v1h-1zM128 0h6v1h-6zM128 1h2v1h-2zM128 2h2v1h-2zM128 3h5v1h-5zM132 4h2v1h-2zM132 5h2v1h-2zM128 6h2v1h-2zM132 6h2v1h-2zM128 7h2v1h-2zM132 7h2v1h-2zM129 8h4v1h-4zM136 0h2v1h-2zM135 1h3v1h-3zM136 2h2v1h-2zM136 3h2v1h-2zM136 4h2v1h-2zM136 5h2v1h-2zM136 6h2v1h-2zM136 7h2v1h-2zM135 8h4v1h-4zM141 0h4v1h-4zM140 1h2v1h-2zM144 1h2v1h-2zM143 2h3v1h-3zM141 3h3v1h-3zM140 4h3v1h-3zM140 5h2v1h-2zM140 6h2v1h-2zM144 6h2v1h-2zM140 7h2v1h-2zM144 7h2v1h-2zM140 8h6v1h-6zM147 2h2v1h-2zM151 2h2v1h-2zM147 3h2v1h-2zM151 3h2v1h-2zM148 4h4v1h-4zM149 5h2v1h-2zM148 6h4v1h-4zM147 7h2v1h-2zM151 7h2v1h-2zM147 8h2v1h-2zM151 8h2v1h-2zM155 0h4v1h-4zM154 1h2v1h-2zM158 1h2v1h-2zM157 2h3v1h-3zM155 3h3v1h-3zM154 4h3v1h-3zM154 5h2v1h-2zM154 6h2v1h-2zM158 6h2v1h-2zM154 7h2v1h-2zM158 7h2v1h-2zM154 8h6v1h-6zM161 0h6v1h-6zM161 1h2v1h-2zM161 2h2v1h-2zM161 3h5v1h-5zM165 4h2v1h-2zM165 5h2v1h-2zM161 6h2v1h-2zM165 6h2v1h-2zM161 7h2v1h-2zM165 7h2v1h-2zM162 8h4v1h-4zM169 0h4v1h-4zM168 1h2v1h-2zM172 1h2v1h-2zM168 2h2v1h-2zM168 3h2v1h-2zM168 4h5v1h-5zM168 5h2v1h-2zM172 5h2v1h-2zM168 6h2v1h-2zM172 6h2v1h-2zM168 7h2v1h-2zM172 7h2v1h-2zM169 8h4v1h-4zM178 2h5v1h-5zM178 3h2v1h-2zM182 3h2v1h-2zM178 4h2v1h-2zM182 4h2v1h-2zM178 5h2v1h-2zM182 5h2v1h-2zM178 6h2v1h-2zM182 6h2v1h-2zM178 7h2v1h-2zM182 7h2v1h-2zM178 8h5v1h-5zM178 9h2v1h-2zM178 10h2v1h-2zM185 -1h2v1h-2zM185 0h2v1h-2zM185 2h2v1h-2zM185 3h2v1h-2zM185 4h2v1h-2zM185 5h2v1h-2zM185 6h2v1h-2zM185 7h2v1h-2zM185 8h2v1h-2zM188 2h2v1h-2zM192 2h2v1h-2zM188 3h2v1h-2zM192 3h2v1h-2zM189 4h4v1h-4zM190 5h2v1h-2zM189 6h4v1h-4zM188 7h2v1h-2zM192 7h2v1h-2zM188 8h2v1h-2zM192 8h2v1h-2zM196 2h4v1h-4zM195 3h2v1h-2zM199 3h2v1h-2zM196 4h3v1h-3zM195 5h2v1h-2zM195 6h2v1h-2zM199 6h2v1h-2zM195 7h2v1h-2zM199 7h2v1h-2zM196 8h4v1h-4zM202 -1h2v1h-2zM202 0h2v1h-2zM202 1h2v1h-2zM202 2h2v1h-2zM202 3h2v1h-2zM202 4h2v1h-2zM202 5h2v1h-2zM202 6h2v1h-2zM202 7h2v1h-2zM203 8h2v1h-2zM207 2h4v1h-4zM206 3h2v1h-2zM210 3h2v1h-2zM206 4h2v1h-2zM207 5h4v1h-4zM210 6h2v1h-2zM206 7h2v1h-2zM210 7h2v1h-2zM207 8h4v1h-4z"/></svg>
</body></html>
